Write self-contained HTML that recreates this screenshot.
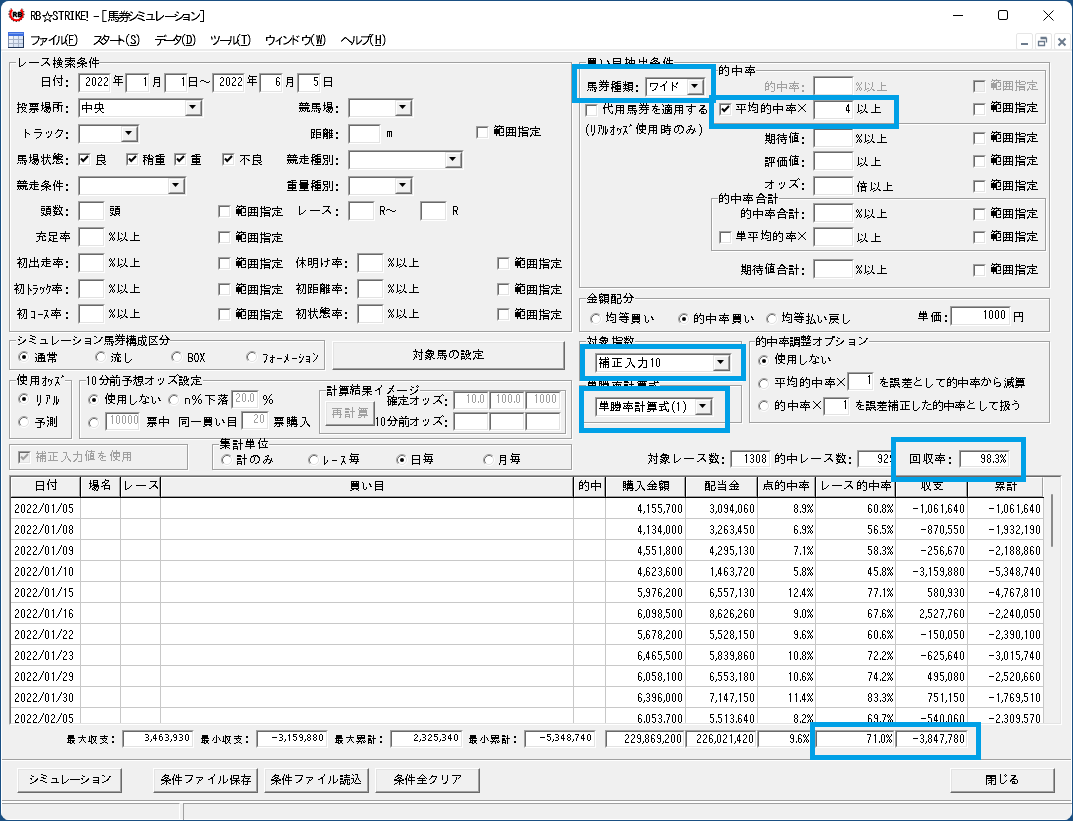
<!DOCTYPE html><html lang="ja"><head><meta charset="utf-8"><style>
html,body{margin:0;padding:0}
body{width:1073px;height:821px;position:relative;overflow:hidden;background:#1a4f82;font-family:"Liberation Sans",sans-serif;font-size:12px;color:#000}
.a{position:absolute;box-sizing:content-box}
.g{position:absolute;overflow:visible;shape-rendering:crispEdges}
.t{position:absolute;white-space:nowrap;line-height:12px;font-size:13px;letter-spacing:-1px;-webkit-text-stroke:0.12px #000}
.u{position:absolute;white-space:nowrap;line-height:14px;font-size:13px}
.x{font-style:normal;font-size:18px;-webkit-text-stroke:0;margin-left:1px}
.c{font-weight:bold;margin-left:2px;-webkit-text-stroke:0}
.h{position:absolute;white-space:nowrap;line-height:12px;font-size:12px;color:transparent}
.n{position:absolute;white-space:nowrap;line-height:12px;text-align:right}
.n span{display:inline-block;transform-origin:100% 50%}
.sk{position:absolute;border-style:solid;border-width:1px;border-color:#a0a0a0 #fff #fff #a0a0a0}
.ski{border-style:solid;border-width:1px;border-color:#696969 #e3e3e3 #e3e3e3 #696969}
.rb{border-style:solid;border-width:1px;border-color:#e3e3e3 #696969 #696969 #e3e3e3;background:#f0f0f0}
.rbi{border-style:solid;border-width:1px;border-color:#fff #a0a0a0 #a0a0a0 #fff}
.bt{border-style:solid;border-width:1px;border-color:#fff #696969 #696969 #fff;background:#f0f0f0;box-shadow:inset -1px -1px 0 #a0a0a0,inset 1px 1px 0 #e3e3e3}
</style></head><body>

<svg width="0" height="0" style="position:absolute"><defs><g id="g0"><path d="M3 3h1v1h-1zM2 7h1v1h-1zM4 8h1v1h-1zM3 9h1v1h-1z" fill-opacity="0.35"/><path d="M3 1h1v1h-1zM3 2h2v1h-2zM3 4h2v1h-2zM3 5h1v1h-1zM2 6h2v1h-2z" fill-opacity="0.65"/><path d="M0 1h3v1h-3zM4 3h1v1h-1zM0 2h1v3h-1zM0 5h3v1h-3zM3 7h1v2h-1zM0 6h1v4h-1zM4 9h1v1h-1z"/></g><g id="g1"><path d="M4 2h1v1h-1zM4 4h1v1h-1zM3 7h1v1h-1z" fill-opacity="0.35"/><path d="M3 1h1v1h-1zM3 3h2v1h-2zM3 5h1v1h-1zM3 6h2v1h-2zM3 8h2v1h-2z" fill-opacity="0.65"/><path d="M0 1h3v1h-3zM3 2h1v1h-1zM0 2h1v3h-1zM3 4h1v1h-1zM0 5h3v1h-3zM4 7h1v1h-1zM0 6h1v3h-1zM0 9h4v1h-4z"/></g><g id="g2"><path d="M2 7h1v1h-1zM8 7h1v1h-1zM2 9h2v1h-2zM7 9h2v1h-2zM4 10h1v1h-1zM6 10h1v1h-1zM3 11h1v1h-1zM7 11h1v1h-1z" fill-opacity="0.35"/><path d="M5 1h1v1h-1zM4 3h3v1h-3zM0 5h1v1h-1zM4 5h1v1h-1zM6 5h1v1h-1zM10 5h1v1h-1zM1 6h2v1h-2zM8 6h2v1h-2zM3 7h1v2h-1zM7 7h1v2h-1zM4 9h1v1h-1zM6 9h1v1h-1zM2 10h1v1h-1zM8 10h1v1h-1z" fill-opacity="0.65"/><path d="M5 2h1v1h-1zM4 4h1v1h-1zM6 4h1v1h-1zM1 5h3v1h-3zM7 5h3v1h-3zM5 9h1v1h-1zM3 10h1v1h-1zM7 10h1v1h-1zM2 11h1v1h-1zM8 11h1v1h-1z"/></g><g id="g3"><path d="M1 1h1v1h-1zM2 2h1v1h-1zM5 2h1v1h-1zM2 5h1v1h-1zM4 5h1v1h-1zM5 6h1v1h-1zM4 7h1v1h-1zM0 8h1v1h-1zM5 9h1v1h-1z" fill-opacity="0.35"/><path d="M4 1h1v1h-1zM4 3h2v1h-2zM1 4h2v1h-2zM4 8h1v1h-1zM1 9h1v1h-1z" fill-opacity="0.65"/><path d="M2 1h2v1h-2zM4 2h1v1h-1zM1 2h1v2h-1zM3 5h1v1h-1zM4 6h1v1h-1zM1 8h1v1h-1zM5 7h1v2h-1zM2 9h3v1h-3z"/></g><g id="g4"><path d="M2 2h1v8h-1z" fill-opacity="0.35"/><path d="M0 1h1v1h-1z" fill-opacity="0.65"/><path d="M1 1h5v1h-5zM3 2h1v8h-1z"/></g><g id="g5"><path d="M1 2h1v7h-1z" fill-opacity="0.35"/><path d="M0 1h1v1h-1zM0 9h1v1h-1z" fill-opacity="0.65"/><path d="M1 1h3v1h-3zM2 2h1v7h-1zM1 9h3v1h-3z"/></g><g id="g6"><path d="M5 1h1v1h-1zM4 3h1v1h-1zM3 7h1v1h-1zM5 8h1v1h-1zM0 1h1v9h-1zM4 9h1v1h-1z" fill-opacity="0.35"/><path d="M3 2h1v1h-1zM2 4h2v1h-2zM3 6h2v1h-2z" fill-opacity="0.65"/><path d="M4 1h1v2h-1zM3 3h1v1h-1zM1 1h1v4h-1zM1 5h3v1h-3zM4 7h1v2h-1zM1 6h1v4h-1zM5 9h1v1h-1z"/></g><g id="g7"><path d="M4 1h1v1h-1z" fill-opacity="0.65"/><path d="M0 1h4v1h-4zM0 2h1v3h-1zM0 5h4v1h-4zM0 6h1v3h-1zM0 9h5v1h-5z"/></g><g id="g8"><path d="M0 3h1v5h-1z" fill-opacity="0.35"/><path d="M0 1h1v2h-1zM0 10h1v1h-1z" fill-opacity="0.65"/><path d="M1 1h1v7h-1zM1 10h1v1h-1z"/></g><path id="g9" d=""/><g id="g10"><path d="M0 6h1v1h-1z" fill-opacity="0.35"/><path d="M1 6h5v1h-5z"/></g><g id="g11"><path d="M1 1h1v10h-1z" fill-opacity="0.35"/><path d="M4 0h1v1h-1zM0 0h1v12h-1zM4 11h1v1h-1z" fill-opacity="0.65"/><path d="M1 0h3v1h-3zM1 11h3v1h-3z"/></g><g id="g12"><path d="M10 1h1v1h-1zM6 2h1v1h-1zM6 4h1v1h-1zM6 6h1v1h-1zM1 8h1v1h-1zM5 8h1v1h-1zM0 9h1v1h-1zM6 9h2v1h-2zM9 9h1v1h-1zM1 10h1v1h-1zM4 10h3v1h-3zM0 11h1v1h-1zM10 11h1v1h-1z" fill-opacity="0.35"/><path d="M7 8h1v1h-1zM10 9h1v1h-1zM9 10h2v1h-2z" fill-opacity="0.65"/><path d="M1 1h9v1h-9zM1 2h1v1h-1zM5 2h1v1h-1zM1 3h9v1h-9zM1 4h1v1h-1zM5 4h1v1h-1zM1 5h9v1h-9zM1 6h1v1h-1zM5 6h1v1h-1zM1 7h10v1h-10zM10 8h1v1h-1zM1 9h1v1h-1zM5 9h1v1h-1zM8 9h1v1h-1zM0 10h1v1h-1zM3 9h1v2h-1zM7 11h3v1h-3z"/></g><g id="g13"><path d="M6 0h1v1h-1zM5 1h1v1h-1zM8 1h1v1h-1zM4 2h1v1h-1zM6 2h1v1h-1zM4 4h1v1h-1zM8 4h1v1h-1zM0 5h1v1h-1zM12 5h1v1h-1zM4 6h1v1h-1zM8 6h1v1h-1zM10 6h1v1h-1zM1 7h1v1h-1zM2 8h1v1h-1zM11 8h1v1h-1zM4 9h1v1h-1zM8 8h1v2h-1zM9 10h1v1h-1zM1 11h1v1h-1z" fill-opacity="0.35"/><path d="M6 1h1v1h-1zM9 1h1v1h-1zM3 2h1v1h-1zM5 2h1v1h-1zM1 3h1v1h-1zM11 3h1v1h-1zM5 4h1v1h-1zM7 4h1v1h-1zM3 6h1v1h-1zM9 6h1v1h-1zM10 7h2v1h-2zM9 8h1v2h-1zM8 10h1v1h-1zM3 10h1v2h-1zM6 11h1v1h-1z" fill-opacity="0.65"/><path d="M3 1h1v1h-1zM8 2h1v1h-1zM2 3h9v1h-9zM1 5h11v1h-11zM2 7h8v1h-8zM1 8h1v1h-1zM5 8h1v2h-1zM4 10h1v1h-1zM2 11h1v1h-1zM7 11h2v1h-2z"/></g><g id="g14"><path d="M2 1h2v1h-2zM2 2h1v1h-1zM0 4h1v1h-1zM2 4h1v1h-1zM10 4h1v1h-1zM1 5h1v1h-1zM7 6h1v1h-1zM8 7h1v1h-1zM4 8h1v1h-1zM7 8h1v1h-1zM2 9h1v1h-1z" fill-opacity="0.35"/><path d="M4 2h1v2h-1zM3 5h1v1h-1zM8 5h1v1h-1zM6 7h1v1h-1zM5 9h1v1h-1zM1 10h1v1h-1zM3 10h1v1h-1z" fill-opacity="0.65"/><path d="M3 2h1v1h-1zM1 4h1v1h-1zM2 5h1v1h-1zM9 4h1v2h-1zM8 6h1v1h-1zM7 7h1v1h-1zM5 8h2v1h-2zM3 9h2v1h-2zM2 10h1v1h-1z"/></g><g id="g15"><path d="M3 1h1v1h-1zM1 1h1v2h-1zM6 2h1v1h-1zM2 4h1v1h-1zM1 5h1v1h-1zM5 5h1v1h-1zM4 6h1v1h-1zM1 7h1v1h-1zM0 8h1v1h-1zM4 8h1v1h-1zM2 9h1v1h-1zM6 9h1v1h-1z" fill-opacity="0.35"/><path d="M2 1h1v2h-1zM5 2h1v2h-1zM7 3h1v1h-1zM2 5h1v1h-1zM3 8h1v2h-1zM5 10h1v1h-1z" fill-opacity="0.65"/><path d="M3 2h2v1h-2zM6 3h1v1h-1zM3 5h2v1h-2zM5 6h2v1h-2zM1 8h2v1h-2zM4 9h2v1h-2zM6 10h2v1h-2z"/></g><g id="g16"><path d="M5 5h1v1h-1zM6 8h1v1h-1z" fill-opacity="0.35"/><path d="M1 4h1v1h-1zM6 5h1v1h-1zM5 6h2v2h-2zM5 8h1v1h-1z" fill-opacity="0.65"/><path d="M2 4h5v1h-5zM0 9h9v1h-9z"/></g><g id="g17"><path d="M4 7h1v1h-1zM1 1h1v8h-1zM5 8h1v1h-1zM4 9h1v1h-1zM2 10h1v1h-1z" fill-opacity="0.35"/><path d="M7 6h1v1h-1zM6 7h1v1h-1zM3 8h1v1h-1zM1 9h1v1h-1zM0 10h1v1h-1z" fill-opacity="0.65"/><path d="M7 5h1v1h-1zM6 6h1v1h-1zM5 7h1v1h-1zM4 8h1v1h-1zM0 1h1v9h-1zM2 9h2v1h-2zM1 10h1v1h-1z"/></g><g id="g18"><path d="M0 6h11v1h-11z"/></g><g id="g19"><path d="M0 7h1v1h-1z" fill-opacity="0.35"/><path d="M0 4h1v1h-1zM6 4h1v1h-1zM5 5h2v2h-2zM6 7h1v1h-1zM5 8h2v1h-2zM6 9h1v1h-1zM5 10h2v1h-2z" fill-opacity="0.65"/><path d="M1 4h5v1h-5zM1 7h5v1h-5zM0 9h6v1h-6z"/></g><g id="g20"><path d="M2 2h1v1h-1zM3 3h1v1h-1zM8 3h1v1h-1zM2 4h2v1h-2zM3 8h1v1h-1zM4 9h1v1h-1zM0 9h1v2h-1zM2 10h1v1h-1z" fill-opacity="0.35"/><path d="M0 2h1v1h-1zM1 3h1v1h-1zM8 5h1v1h-1zM6 6h1v1h-1zM5 7h1v1h-1zM1 9h1v2h-1z" fill-opacity="0.65"/><path d="M1 2h1v1h-1zM2 3h1v1h-1zM8 4h1v1h-1zM7 5h1v2h-1zM6 7h1v1h-1zM4 8h2v1h-2zM2 9h2v1h-2z"/></g><g id="g21"><path d="M0 0h4v1h-4zM3 1h1v10h-1zM0 11h4v1h-4z"/></g><g id="g22"><path d="M8 2h1v1h-1zM0 3h7v1h-7zM8 4h1v1h-1zM5 7h1v1h-1zM4 8h1v1h-1zM6 8h1v1h-1zM2 9h1v1h-1zM5 9h1v1h-1z" fill-opacity="0.35"/><path d="M0 2h7v1h-7zM7 3h2v1h-2zM6 6h2v1h-2zM1 10h1v1h-1zM3 9h1v2h-1z" fill-opacity="0.65"/><path d="M7 2h1v1h-1zM7 4h1v2h-1zM6 7h1v1h-1zM5 8h1v1h-1zM4 9h1v1h-1zM2 10h1v1h-1z"/></g><g id="g23"><path d="M0 4h1v1h-1zM8 4h1v1h-1zM1 5h4v1h-4zM6 5h1v1h-1zM3 6h1v1h-1zM7 6h1v1h-1zM4 8h2v1h-2zM1 10h1v1h-1zM2 11h1v1h-1z" fill-opacity="0.35"/><path d="M1 4h2v1h-2zM4 6h1v1h-1zM3 7h2v1h-2zM6 7h1v1h-1zM3 8h1v1h-1zM3 10h1v1h-1zM1 11h1v1h-1z" fill-opacity="0.65"/><path d="M3 4h5v1h-5zM7 5h1v1h-1zM6 6h1v1h-1zM5 7h1v1h-1zM3 9h1v1h-1zM2 10h1v1h-1z"/></g><g id="g24"><path d="M3 4h1v1h-1zM1 5h1v1h-1zM4 5h1v1h-1zM0 6h1v1h-1zM6 4h1v7h-1z" fill-opacity="0.35"/><path d="M8 1h1v1h-1zM7 2h1v1h-1zM6 3h1v1h-1zM2 5h1v2h-1z" fill-opacity="0.65"/><path d="M7 1h1v1h-1zM6 2h1v1h-1zM5 3h1v1h-1zM4 4h2v1h-2zM3 5h1v1h-1zM1 6h1v1h-1zM5 5h1v6h-1z"/></g><g id="g25"><path d="M10 5h1v1h-1zM3 4h1v3h-1zM9 6h1v1h-1zM6 2h1v6h-1zM8 7h1v1h-1zM10 7h1v1h-1zM6 8h2v1h-2zM9 8h1v1h-1zM0 9h1v1h-1zM8 9h1v1h-1zM1 10h1v1h-1zM5 10h1v1h-1z" fill-opacity="0.35"/><path d="M2 2h2v2h-2zM2 4h1v2h-1zM1 8h2v1h-2zM5 2h1v8h-1zM6 10h1v1h-1z" fill-opacity="0.65"/><path d="M10 6h1v1h-1zM2 6h1v2h-1zM9 7h1v1h-1zM8 8h1v1h-1zM1 9h1v1h-1zM6 9h2v1h-2zM0 10h1v1h-1z"/></g><g id="g26"><path d="M3 0h1v1h-1zM2 1h1v1h-1zM0 2h1v1h-1zM1 3h1v1h-1zM1 8h1v1h-1zM0 9h1v1h-1zM2 10h1v1h-1zM3 11h1v1h-1z" fill-opacity="0.35"/><path d="M1 1h1v1h-1zM0 3h1v1h-1zM0 8h1v1h-1zM1 10h1v1h-1z" fill-opacity="0.65"/><path d="M2 0h1v1h-1zM1 2h1v1h-1zM0 4h1v4h-1zM1 9h1v1h-1zM2 11h1v1h-1z"/></g><g id="g27"><path d="M4 1h1v1h-1z" fill-opacity="0.65"/><path d="M0 1h4v1h-4zM0 2h1v3h-1zM0 5h4v1h-4zM0 6h1v4h-1z"/></g><g id="g28"><path d="M1 0h1v1h-1zM2 1h1v1h-1zM1 2h1v1h-1zM3 4h1v4h-1zM1 9h1v1h-1zM2 10h1v1h-1zM1 11h1v1h-1z" fill-opacity="0.35"/><path d="M0 0h1v1h-1zM2 4h1v4h-1zM0 11h1v1h-1z" fill-opacity="0.65"/><path d="M1 1h1v1h-1zM2 2h1v2h-1zM2 8h1v2h-1zM1 10h1v1h-1z"/></g><g id="g29"><path d="M8 2h1v2h-1zM0 10h1v1h-1zM2 10h1v1h-1zM10 10h1v1h-1z" fill-opacity="0.35"/><path d="M1 2h1v1h-1zM6 4h1v1h-1zM6 6h1v1h-1zM4 7h1v1h-1zM7 7h1v1h-1zM1 9h1v1h-1zM3 9h1v1h-1zM9 10h1v1h-1z" fill-opacity="0.65"/><path d="M2 2h6v1h-6zM7 3h1v2h-1zM6 5h1v1h-1zM5 6h1v1h-1zM5 7h2v1h-2zM3 8h2v1h-2zM7 8h2v1h-2zM2 9h1v1h-1zM8 9h2v1h-2zM1 10h1v1h-1z"/></g><g id="g30"><path d="M3 0h1v1h-1zM4 1h1v1h-1zM2 2h1v1h-1zM3 3h1v1h-1zM8 2h1v2h-1zM6 7h1v1h-1zM2 9h1v1h-1zM3 10h1v1h-1z" fill-opacity="0.35"/><path d="M1 4h1v1h-1zM3 4h1v1h-1zM4 5h1v1h-1zM6 5h2v1h-2zM0 5h1v2h-1zM5 6h1v1h-1zM5 8h1v1h-1zM4 9h1v1h-1zM1 10h1v1h-1z" fill-opacity="0.65"/><path d="M3 1h1v1h-1zM3 2h5v1h-5zM2 3h1v2h-1zM7 3h1v2h-1zM1 5h1v1h-1zM3 5h1v1h-1zM4 6h1v1h-1zM6 6h1v1h-1zM5 7h1v1h-1zM4 8h1v1h-1zM3 9h1v1h-1zM2 10h1v1h-1z"/></g><g id="g31"><path d="M2 4h1v1h-1zM4 5h1v1h-1zM6 7h1v1h-1zM0 1h1v10h-1z" fill-opacity="0.35"/><path d="M1 1h1v3h-1zM3 5h1v2h-1zM5 6h1v1h-1zM1 6h1v5h-1z" fill-opacity="0.65"/><path d="M1 4h1v1h-1zM1 5h2v1h-2zM4 6h1v1h-1zM5 7h1v1h-1z"/></g><g id="g32"><path d="M10 0h1v1h-1zM11 1h1v1h-1zM10 2h2v1h-2zM6 6h1v1h-1zM4 8h1v1h-1zM5 9h1v1h-1zM2 10h1v1h-1zM3 11h1v1h-1z" fill-opacity="0.35"/><path d="M9 1h2v1h-2zM8 2h1v1h-1zM10 5h1v1h-1zM4 10h1v1h-1zM2 11h1v1h-1z" fill-opacity="0.65"/><path d="M2 2h6v1h-6zM9 2h1v1h-1zM0 5h10v1h-10zM5 6h1v3h-1zM4 9h1v1h-1zM3 10h1v1h-1z"/></g><g id="g33"><path d="M3 2h1v1h-1zM5 2h1v1h-1zM4 4h1v3h-1zM3 8h1v1h-1zM5 8h1v1h-1zM4 9h1v1h-1z" fill-opacity="0.35"/><path d="M0 1h1v1h-1zM4 1h1v1h-1zM4 3h2v1h-2zM4 7h2v1h-2zM0 9h1v1h-1z" fill-opacity="0.65"/><path d="M1 1h3v1h-3zM4 2h1v1h-1zM5 4h1v3h-1zM1 2h1v7h-1zM4 8h1v1h-1zM1 9h3v1h-3z"/></g><g id="g34"><path d="M3 1h1v1h-1zM4 2h1v1h-1zM7 2h1v1h-1zM1 3h1v1h-1zM3 4h1v1h-1zM8 4h1v1h-1zM0 5h2v1h-2zM5 7h1v1h-1zM7 7h1v1h-1zM4 8h1v1h-1zM6 8h1v1h-1zM4 10h1v1h-1z" fill-opacity="0.35"/><path d="M0 2h1v1h-1zM3 3h2v1h-2zM7 3h2v1h-2zM0 4h2v1h-2zM4 4h1v1h-1zM6 6h2v1h-2zM3 9h1v1h-1zM5 9h1v1h-1z" fill-opacity="0.65"/><path d="M3 2h1v1h-1zM8 2h1v1h-1zM0 3h1v1h-1zM7 4h1v2h-1zM6 7h1v1h-1zM5 8h1v1h-1zM4 9h1v1h-1zM2 10h2v1h-2z"/></g><g id="g35"><path d="M3 1h1v2h-1zM1 4h1v3h-1zM8 6h1v1h-1zM6 7h1v1h-1zM7 8h1v1h-1zM4 9h1v1h-1zM2 10h1v1h-1zM5 10h1v1h-1zM3 11h1v1h-1z" fill-opacity="0.35"/><path d="M8 3h1v1h-1zM7 4h2v2h-2zM6 9h1v1h-1z" fill-opacity="0.65"/><path d="M4 1h1v2h-1zM0 3h8v1h-8zM0 4h1v3h-1zM7 6h1v2h-1zM6 8h1v1h-1zM5 9h1v1h-1zM3 10h2v1h-2z"/></g><g id="g36"><path d="M6 2h1v1h-1zM5 3h1v1h-1zM1 6h1v1h-1zM0 7h1v1h-1zM2 7h1v1h-1zM5 5h1v6h-1z" fill-opacity="0.35"/><path d="M4 4h1v1h-1zM3 5h1v2h-1zM1 7h1v1h-1z" fill-opacity="0.65"/><path d="M6 3h1v1h-1zM5 4h1v1h-1zM2 6h1v1h-1zM4 5h1v6h-1z"/></g><g id="g37"><path d="M6 1h1v1h-1zM7 2h1v1h-1zM2 4h1v1h-1zM4 5h1v1h-1zM6 7h1v1h-1zM0 1h1v10h-1z" fill-opacity="0.35"/><path d="M4 2h3v1h-3zM1 1h1v3h-1zM3 5h1v2h-1zM5 6h1v1h-1zM1 6h1v5h-1z" fill-opacity="0.65"/><path d="M5 3h1v1h-1zM1 4h1v1h-1zM1 5h2v1h-2zM4 6h1v1h-1zM5 7h1v1h-1z"/></g><g id="g38"><path d="M1 1h2v1h-2zM4 4h1v1h-1zM0 3h1v3h-1zM3 5h1v3h-1zM2 9h1v1h-1zM5 8h1v2h-1z" fill-opacity="0.35"/><path d="M0 1h1v1h-1zM0 2h3v1h-3zM1 3h2v1h-2zM1 4h3v1h-3zM1 5h1v1h-1zM4 5h2v1h-2zM5 6h1v2h-1zM2 7h1v2h-1z" fill-opacity="0.65"/><path d="M3 1h1v3h-1zM5 1h1v4h-1zM2 5h1v1h-1zM1 6h2v1h-2zM1 7h1v3h-1zM4 6h1v4h-1z"/></g><g id="g39"><path d="M5 3h1v1h-1zM4 4h1v1h-1zM6 4h1v1h-1zM10 7h1v1h-1z" fill-opacity="0.35"/><path d="M3 3h1v1h-1zM2 4h1v1h-1zM1 5h1v1h-1zM7 5h1v1h-1zM8 6h1v1h-1zM0 6h1v2h-1zM9 8h1v1h-1z" fill-opacity="0.65"/><path d="M4 3h1v1h-1zM3 4h1v1h-1zM5 4h1v1h-1zM2 5h1v1h-1zM6 5h1v1h-1zM1 6h1v1h-1zM7 6h1v1h-1zM8 7h2v1h-2zM10 8h1v1h-1z"/></g><g id="g40"><path d="M10 0h1v1h-1zM10 2h1v1h-1zM0 3h7v1h-7zM8 3h1v1h-1zM6 5h1v1h-1zM7 6h1v1h-1zM2 9h1v1h-1z" fill-opacity="0.35"/><path d="M8 0h1v2h-1zM10 1h1v1h-1zM0 2h7v1h-7zM5 7h1v1h-1zM4 8h1v1h-1zM1 10h1v1h-1zM3 10h1v1h-1z" fill-opacity="0.65"/><path d="M9 0h1v1h-1zM7 2h3v1h-3zM7 3h1v3h-1zM6 6h1v2h-1zM5 8h1v1h-1zM3 9h2v1h-2zM2 10h1v1h-1z"/></g><g id="g41"><path d="M4 1h1v4h-1zM0 1h1v9h-1zM4 6h1v4h-1z" fill-opacity="0.35"/><path d="M1 1h1v4h-1zM5 1h1v4h-1zM1 5h5v1h-5zM1 6h1v4h-1zM5 6h1v4h-1z"/></g><path id="g42" d="M9 6h1v1h-1zM8 7h1v1h-1zM7 8h1v1h-1zM3 2h1v8h-1zM5 9h2v1h-2zM3 10h2v1h-2z"/><path id="g43" d="M1 6h10v1h-10z"/><path id="g44" d="M2 2h7v1h-7zM7 3h1v2h-1zM6 5h1v1h-1zM5 6h3v1h-3zM4 7h2v1h-2zM7 7h2v1h-2zM3 8h1v1h-1zM8 8h2v1h-2zM1 9h2v1h-2zM9 9h1v1h-1z"/><path id="g45" d="M7 1h1v1h-1zM2 1h1v3h-1zM6 2h1v2h-1zM8 2h1v2h-1zM1 4h3v1h-3zM5 4h5v1h-5zM4 5h1v1h-1zM7 5h1v1h-1zM10 5h1v1h-1zM2 5h1v2h-1zM5 6h5v1h-5zM1 7h3v1h-3zM5 7h1v1h-1zM7 7h1v1h-1zM9 7h1v1h-1zM1 8h2v1h-2zM5 8h5v1h-5zM7 9h1v1h-1zM6 10h1v1h-1zM8 10h2v1h-2zM2 9h1v3h-1zM4 11h2v1h-2zM10 11h1v1h-1z"/><path id="g46" d="M6 1h1v1h-1zM1 2h10v1h-10zM6 3h1v1h-1zM1 4h10v1h-10zM1 5h1v1h-1zM5 5h2v1h-2zM8 5h1v1h-1zM10 5h1v1h-1zM3 6h2v1h-2zM7 6h1v1h-1zM5 7h2v1h-2zM9 7h1v1h-1zM1 8h8v1h-8zM10 8h1v1h-1zM4 9h1v1h-1zM8 9h1v1h-1zM2 10h2v1h-2zM9 10h2v1h-2zM1 11h1v1h-1zM6 9h1v3h-1zM10 11h1v1h-1z"/><path id="g47" d="M5 1h1v1h-1zM4 2h5v1h-5zM3 3h2v1h-2zM8 3h1v1h-1zM2 4h1v1h-1zM5 4h3v1h-3zM4 5h2v1h-2zM7 5h2v1h-2zM1 6h3v1h-3zM6 6h1v1h-1zM9 6h2v1h-2zM1 7h10v1h-10zM5 8h3v1h-3zM4 9h1v1h-1zM8 9h1v1h-1zM2 10h2v1h-2zM9 10h2v1h-2zM1 11h1v1h-1zM6 9h1v3h-1z"/><path id="g48" d="M3 1h1v2h-1zM5 2h1v2h-1zM7 1h1v3h-1zM2 3h1v2h-1zM5 4h6v1h-6zM1 5h2v2h-2zM4 5h1v2h-1zM7 5h1v2h-1zM4 7h7v1h-7zM2 7h1v5h-1zM7 8h1v4h-1z"/><path id="g49" d="M2 2h8v1h-8zM2 3h1v3h-1zM9 3h1v3h-1zM2 6h8v1h-8zM2 7h1v3h-1zM9 7h1v3h-1zM2 10h8v1h-8zM2 11h1v1h-1zM9 11h1v1h-1z"/><path id="g50" d="M3 0h1v2h-1zM9 0h1v3h-1zM2 2h1v2h-1zM4 3h7v1h-7zM1 4h2v2h-2zM5 5h1v1h-1zM6 6h1v1h-1zM6 7h2v1h-2zM9 4h1v6h-1zM2 6h1v5h-1zM7 10h3v1h-3z"/><path id="g51" d="M2 5h2v2h-2zM2 10h2v2h-2z"/><path id="g52" d="M1 2h2v1h-2zM0 3h1v1h-1zM3 3h1v3h-1zM2 6h1v1h-1zM1 7h1v1h-1zM0 8h1v2h-1zM0 10h4v1h-4z"/><path id="g53" d="M1 2h2v1h-2zM0 3h1v7h-1zM3 3h1v7h-1zM1 10h2v1h-2z"/><path id="g54" d="M3 0h1v1h-1zM3 1h8v1h-8zM2 2h1v2h-1zM6 2h1v2h-1zM3 4h7v1h-7zM3 5h1v2h-1zM6 5h1v2h-1zM1 7h10v1h-10zM6 8h1v3h-1z"/><path id="g55" d="M2 2h1v1h-1zM1 3h2v1h-2zM2 4h1v7h-1z"/><path id="g56" d="M3 2h6v1h-6zM3 3h1v1h-1zM8 3h1v1h-1zM3 4h6v1h-6zM3 5h1v2h-1zM8 5h1v2h-1zM3 7h6v1h-6zM3 8h1v2h-1zM8 8h1v3h-1zM2 10h1v2h-1zM6 11h3v1h-3z"/><path id="g57" d="M2 5h3v1h-3zM1 6h1v1h-1zM5 6h2v1h-2zM10 6h1v1h-1zM7 7h3v1h-3z"/><path id="g58" d="M1 2h2v1h-2zM3 3h1v1h-1zM0 3h1v3h-1zM0 6h3v1h-3zM0 7h1v3h-1zM3 7h1v3h-1zM1 10h2v1h-2z"/><path id="g59" d="M0 2h4v1h-4zM0 3h1v2h-1zM0 5h3v1h-3zM0 9h1v1h-1zM3 6h1v4h-1zM1 10h2v1h-2z"/><path id="g60" d="M2 1h1v2h-1zM6 2h3v1h-3zM1 3h4v1h-4zM8 3h1v1h-1zM10 3h1v1h-1zM6 3h1v2h-1zM8 4h3v1h-3zM2 4h1v2h-1zM5 5h1v1h-1zM2 6h8v1h-8zM1 7h2v1h-2zM9 7h1v1h-1zM6 7h1v2h-1zM8 8h1v1h-1zM7 9h1v1h-1zM2 8h1v3h-1zM6 10h1v1h-1zM8 10h2v1h-2zM1 11h2v1h-2zM5 11h1v1h-1zM10 11h1v1h-1z"/><path id="g61" d="M1 2h10v1h-10zM2 3h8v1h-8zM2 4h1v1h-1zM4 4h1v1h-1zM7 4h1v1h-1zM9 4h1v1h-1zM2 5h8v1h-8zM2 7h8v1h-8zM1 8h10v1h-10zM3 9h1v1h-1zM8 9h1v1h-1zM2 10h1v1h-1zM6 9h1v2h-1zM9 10h1v1h-1zM1 11h1v1h-1zM4 11h3v1h-3z"/><path id="g62" d="M5 1h5v1h-5zM5 2h1v1h-1zM9 2h1v1h-1zM2 1h1v3h-1zM5 3h5v1h-5zM1 4h3v1h-3zM5 4h1v1h-1zM9 4h1v1h-1zM5 5h5v1h-5zM2 5h1v2h-1zM4 6h7v1h-7zM2 7h2v1h-2zM6 7h5v1h-5zM2 8h1v1h-1zM5 8h2v1h-2zM8 8h1v1h-1zM1 9h1v1h-1zM4 9h1v1h-1zM6 9h2v1h-2zM10 8h1v2h-1zM4 10h2v1h-2zM7 10h1v1h-1zM9 10h1v1h-1zM6 11h1v1h-1zM8 11h2v1h-2z"/><path id="g63" d="M1 1h9v1h-9zM6 2h1v1h-1zM1 3h6v1h-6zM5 4h6v1h-6zM1 4h1v2h-1zM5 5h2v1h-2zM1 6h6v1h-6zM5 7h2v1h-2zM6 8h1v2h-1zM1 7h1v4h-1zM5 10h1v1h-1zM9 5h1v6h-1z"/><path id="g64" d="M5 1h1v3h-1zM1 4h10v1h-10zM1 5h1v2h-1zM5 5h1v2h-1zM10 5h1v2h-1zM1 7h10v1h-10zM1 8h1v1h-1zM10 8h1v1h-1zM5 8h1v4h-1z"/><path id="g65" d="M6 1h1v2h-1zM2 3h8v1h-8zM2 4h1v3h-1zM6 4h1v3h-1zM9 4h1v3h-1zM1 7h10v1h-10zM6 8h2v1h-2zM5 9h1v1h-1zM7 9h1v1h-1zM4 10h1v1h-1zM8 10h1v1h-1zM2 11h2v1h-2zM9 11h2v1h-2z"/><path id="g66" d="M3 1h1v1h-1zM8 1h1v1h-1zM1 2h10v1h-10zM2 3h1v1h-1zM4 3h1v1h-1zM7 3h1v1h-1zM9 3h1v1h-1zM1 4h11v1h-11zM1 6h10v2h-10zM4 8h1v1h-1zM2 8h1v2h-1zM4 9h2v1h-2zM7 8h1v2h-1zM9 8h1v2h-1zM11 9h1v1h-1zM1 10h1v1h-1zM3 10h1v1h-1zM6 10h1v1h-1zM9 10h3v1h-3z"/><path id="g67" d="M2 2h8v2h-8zM2 4h1v1h-1zM6 4h1v1h-1zM2 5h8v1h-8zM2 6h1v1h-1zM6 6h1v1h-1zM2 7h9v1h-9zM8 8h1v1h-1zM10 8h1v1h-1zM2 9h1v1h-1zM8 9h2v1h-2zM1 10h1v1h-1zM4 9h1v2h-1zM6 9h1v2h-1zM9 10h1v1h-1zM8 11h2v1h-2z"/><path id="g68" d="M4 2h1v3h-1zM4 5h2v1h-2zM6 6h2v1h-2zM8 7h1v1h-1zM4 6h1v5h-1z"/><path id="g69" d="M3 2h6v1h-6zM2 5h8v1h-8zM9 6h1v1h-1zM8 7h1v2h-1zM7 9h1v1h-1zM5 10h2v1h-2zM4 11h1v1h-1z"/><path id="g70" d="M5 4h1v2h-1zM3 5h1v2h-1zM8 4h1v3h-1zM7 7h1v2h-1zM5 9h2v1h-2zM4 10h2v1h-2z"/><path id="g71" d="M5 2h1v1h-1zM4 3h6v1h-6zM4 4h1v1h-1zM9 4h1v1h-1zM3 5h1v1h-1zM2 6h1v1h-1zM8 5h1v2h-1zM7 7h1v1h-1zM6 8h2v1h-2zM5 9h2v1h-2zM3 10h2v1h-2z"/><path id="g72" d="M1 2h4v1h-4zM6 2h5v1h-5zM1 3h1v2h-1zM4 3h1v2h-1zM6 3h1v2h-1zM1 5h4v1h-4zM6 5h5v1h-5zM3 6h1v1h-1zM6 6h1v1h-1zM10 6h1v1h-1zM3 7h2v1h-2zM6 7h5v1h-5zM10 8h1v1h-1zM1 6h1v4h-1zM3 8h1v2h-1zM6 8h1v2h-1zM1 10h4v1h-4zM6 10h5v1h-5zM1 11h1v1h-1zM6 11h1v1h-1z"/><path id="g73" d="M3 1h1v1h-1zM1 2h5v1h-5zM7 2h1v1h-1zM9 2h1v1h-1zM1 3h2v1h-2zM4 3h2v1h-2zM7 3h4v1h-4zM1 4h1v1h-1zM3 4h1v1h-1zM5 4h1v1h-1zM7 4h1v1h-1zM1 5h2v1h-2zM4 5h4v1h-4zM9 4h1v2h-1zM7 6h4v1h-4zM1 6h5v2h-5zM7 7h1v1h-1zM9 7h1v1h-1zM1 8h2v1h-2zM4 8h2v1h-2zM7 8h4v1h-4zM1 9h5v1h-5zM7 9h1v1h-1zM9 9h1v1h-1zM5 10h1v1h-1zM7 10h4v1h-4zM1 10h1v2h-1zM4 11h2v1h-2zM7 11h1v1h-1z"/><path id="g74" d="M1 5h5v1h-5zM1 6h1v5h-1zM3 6h1v5h-1zM5 6h1v5h-1z"/><path id="g75" d="M2 0h1v1h-1zM6 0h1v1h-1zM2 1h9v1h-9zM1 2h1v1h-1zM4 2h1v1h-1zM8 2h1v1h-1zM3 3h1v1h-1zM6 3h5v1h-5zM10 4h1v3h-1zM8 7h3v1h-3zM1 4h6v5h-6zM6 9h1v1h-1zM10 9h1v1h-1zM3 9h1v2h-1zM6 10h5v1h-5z"/><path id="g76" d="M1 2h10v1h-10zM4 3h1v1h-1zM7 3h1v1h-1zM3 4h6v1h-6zM1 3h1v4h-1zM4 5h1v2h-1zM7 5h1v2h-1zM10 3h1v4h-1zM1 7h10v1h-10zM4 8h1v1h-1zM1 8h1v2h-1zM3 9h1v1h-1zM7 8h1v2h-1zM10 8h1v2h-1zM1 10h10v1h-10zM1 11h1v1h-1zM10 11h1v1h-1z"/><path id="g77" d="M2 1h1v2h-1zM5 1h1v2h-1zM7 2h4v1h-4zM1 3h6v1h-6zM5 4h1v1h-1zM11 3h1v2h-1zM5 5h6v1h-6zM2 4h1v3h-1zM2 7h9v1h-9zM5 8h6v1h-6zM5 9h1v1h-1zM10 9h1v1h-1zM2 8h1v3h-1zM5 10h6v1h-6zM1 11h2v1h-2zM5 11h1v1h-1zM10 11h1v1h-1z"/><path id="g78" d="M6 1h1v2h-1zM1 3h10v1h-10zM1 4h1v1h-1zM10 4h1v1h-1zM3 5h6v1h-6zM6 6h1v1h-1zM6 7h4v1h-4zM3 7h1v2h-1zM2 9h1v1h-1zM4 9h1v1h-1zM6 8h1v2h-1zM1 10h2v1h-2zM5 10h7v1h-7zM1 11h1v1h-1z"/><path id="g79" d="M9 2h1v1h-1zM3 1h1v3h-1zM7 1h1v3h-1zM1 3h1v2h-1zM3 4h8v1h-8zM2 5h2v1h-2zM3 6h1v1h-1zM7 5h1v2h-1zM2 7h2v1h-2zM1 8h1v1h-1zM8 7h1v2h-1zM6 7h1v3h-1zM9 9h1v1h-1zM3 8h1v3h-1zM5 10h1v1h-1zM9 10h2v1h-2zM3 11h2v1h-2zM10 11h1v1h-1z"/><path id="g80" d="M2 0h2v1h-2zM6 0h1v1h-1zM2 1h1v1h-1zM5 1h5v1h-5zM1 2h1v1h-1zM3 2h2v1h-2zM6 2h1v1h-1zM10 2h1v1h-1zM1 3h10v1h-10zM1 4h6v1h-6zM9 4h1v1h-1zM1 5h8v1h-8zM1 6h1v1h-1zM4 6h7v1h-7zM5 7h1v1h-1zM2 8h1v1h-1zM6 8h1v1h-1zM9 8h1v1h-1zM1 9h1v1h-1zM4 8h1v2h-1zM8 9h3v1h-3zM0 10h2v1h-2zM4 10h4v1h-4zM10 10h1v1h-1z"/><path id="g81" d="M6 1h1v1h-1zM2 2h8v1h-8zM2 3h1v1h-1zM9 3h1v1h-1zM2 4h8v1h-8zM2 5h1v2h-1zM9 5h1v2h-1zM2 7h8v1h-8zM6 8h1v1h-1zM10 8h1v1h-1zM7 9h3v1h-3zM2 8h1v3h-1zM8 10h1v1h-1zM1 11h6v1h-6zM9 11h2v1h-2z"/><path id="g82" d="M7 1h1v1h-1zM1 2h4v1h-4zM9 2h1v1h-1zM2 3h1v1h-1zM6 2h2v2h-2zM10 3h1v1h-1zM1 4h5v1h-5zM7 4h1v1h-1zM11 4h1v1h-1zM2 5h1v1h-1zM5 5h6v1h-6zM2 6h2v1h-2zM6 6h5v1h-5zM4 7h1v1h-1zM6 7h1v1h-1zM10 7h1v1h-1zM1 7h2v2h-2zM6 8h5v1h-5zM10 9h1v2h-1zM2 9h1v3h-1zM6 9h1v3h-1zM8 11h3v1h-3z"/><path id="g83" d="M5 1h5v1h-5zM2 2h3v1h-3zM6 2h1v1h-1zM1 3h10v1h-10zM6 4h1v1h-1zM2 5h8v2h-8zM2 7h1v1h-1zM6 7h1v1h-1zM9 7h1v1h-1zM2 8h8v2h-8zM6 10h1v1h-1zM1 11h10v1h-10z"/><path id="g84" d="M1 2h10v1h-10zM5 3h1v2h-1zM4 5h2v1h-2zM7 5h1v1h-1zM3 6h1v1h-1zM8 6h2v1h-2zM2 7h1v1h-1zM9 7h2v1h-2zM1 8h1v1h-1zM5 6h1v6h-1z"/><path id="g85" d="M6 1h1v2h-1zM2 3h8v1h-8zM6 4h1v1h-1zM1 5h10v1h-10zM6 6h1v1h-1zM3 6h1v2h-1zM6 7h4v1h-4zM2 8h2v1h-2zM2 9h1v1h-1zM4 9h1v1h-1zM6 8h1v2h-1zM1 10h1v1h-1zM5 10h6v1h-6z"/><path id="g86" d="M2 1h3v1h-3zM7 1h4v1h-4zM5 2h3v1h-3zM2 2h1v2h-1zM4 3h7v1h-7zM1 4h4v1h-4zM7 4h1v1h-1zM2 5h1v1h-1zM2 6h2v1h-2zM5 5h6v2h-6zM1 7h5v1h-5zM7 7h1v1h-1zM10 7h1v1h-1zM1 8h2v1h-2zM5 8h6v2h-6zM7 10h1v1h-1zM2 9h1v3h-1zM4 11h7v1h-7z"/><path id="g87" d="M1 2h5v1h-5zM1 3h1v2h-1zM5 3h1v2h-1zM1 5h5v1h-5zM2 6h1v1h-1zM3 7h3v1h-3zM7 2h1v7h-1zM2 8h1v2h-1zM1 10h1v1h-1zM5 8h1v3h-1zM10 2h1v9h-1zM0 11h2v1h-2zM3 11h3v1h-3zM8 11h3v1h-3z"/><path id="g88" d="M2 1h8v1h-8zM2 2h1v1h-1zM9 2h1v1h-1zM2 3h8v2h-8zM1 5h10v1h-10zM2 6h8v4h-8zM6 10h1v1h-1zM1 11h10v1h-10z"/><path id="g89" d="M1 2h4v1h-4zM6 2h5v1h-5zM8 3h1v1h-1zM1 4h4v1h-4zM1 5h1v1h-1zM4 5h1v1h-1zM6 4h5v2h-5zM1 6h4v1h-4zM6 6h1v1h-1zM10 6h1v1h-1zM6 7h5v1h-5zM1 8h1v1h-1zM3 8h1v1h-1zM6 8h1v1h-1zM10 8h1v1h-1zM2 9h2v1h-2zM6 9h5v1h-5zM3 10h3v1h-3zM7 10h1v1h-1zM9 10h1v1h-1zM1 11h2v1h-2zM5 11h2v1h-2zM10 11h1v1h-1z"/><path id="g90" d="M5 1h1v1h-1zM1 2h1v1h-1zM3 1h1v2h-1zM7 1h1v2h-1zM1 3h5v1h-5zM7 3h4v1h-4zM2 4h3v1h-3zM6 4h1v1h-1zM1 5h1v1h-1zM3 5h1v1h-1zM5 5h2v1h-2zM2 6h1v1h-1zM7 6h1v1h-1zM9 4h1v3h-1zM1 7h5v1h-5zM7 7h2v1h-2zM2 8h1v1h-1zM4 8h1v1h-1zM8 8h1v1h-1zM2 9h3v1h-3zM7 9h3v1h-3zM3 10h5v1h-5zM9 10h2v1h-2zM1 11h2v1h-2zM10 11h1v1h-1z"/><path id="g91" d="M1 2h4v1h-4zM1 3h1v3h-1zM5 3h1v3h-1zM1 6h4v1h-4zM3 7h2v1h-2zM4 8h1v2h-1zM1 7h1v4h-1zM5 10h1v1h-1z"/><path id="g92" d="M6 1h1v2h-1zM1 3h10v1h-10zM5 4h1v1h-1zM4 5h1v1h-1zM8 5h2v1h-2zM2 6h6v1h-6zM9 6h2v1h-2zM4 7h1v3h-1zM7 7h1v3h-1zM10 9h1v1h-1zM3 10h1v1h-1zM7 10h4v1h-4zM1 11h2v1h-2z"/><path id="g93" d="M2 2h8v1h-8zM2 3h1v2h-1zM9 3h1v2h-1zM2 5h8v1h-8zM3 7h1v1h-1zM6 6h1v2h-1zM2 8h1v1h-1zM6 8h4v1h-4zM2 9h2v1h-2zM2 10h3v1h-3zM6 9h1v2h-1zM1 11h1v1h-1zM5 11h6v1h-6z"/><path id="g94" d="M6 1h1v2h-1zM1 3h10v1h-10zM5 4h1v1h-1zM2 5h1v1h-1zM4 5h6v1h-6zM2 6h2v1h-2zM5 6h1v1h-1zM7 6h1v1h-1zM9 6h1v1h-1zM1 7h1v1h-1zM4 7h1v1h-1zM6 7h1v1h-1zM10 7h1v1h-1zM1 8h10v1h-10zM6 9h1v3h-1z"/><path id="g95" d="M0 2h1v1h-1zM4 2h1v2h-1zM-1 3h1v2h-1zM1 3h1v2h-1zM3 4h1v1h-1zM0 5h1v1h-1zM2 5h1v2h-1zM1 7h1v1h-1zM3 7h1v1h-1zM0 8h1v2h-1zM2 8h1v2h-1zM4 8h1v2h-1zM-1 10h1v1h-1zM3 10h1v1h-1z"/><path id="g96" d="M5 3h1v1h-1zM6 4h1v1h-1zM9 2h1v5h-1zM2 2h1v7h-1zM4 8h2v1h-2zM8 7h1v2h-1zM2 9h2v1h-2zM7 9h1v1h-1zM9 9h2v1h-2zM1 10h1v1h-1zM5 10h2v1h-2zM10 10h2v1h-2zM4 11h1v1h-1z"/><path id="g97" d="M5 2h1v3h-1zM5 5h5v1h-5zM5 6h1v4h-1zM1 10h10v1h-10z"/><path id="g98" d="M3 1h1v2h-1zM6 2h5v1h-5zM1 3h5v1h-5zM4 4h1v1h-1zM3 5h2v1h-2zM2 6h2v1h-2zM5 6h1v1h-1zM8 3h1v4h-1zM1 7h4v1h-4zM5 8h1v1h-1zM7 7h1v3h-1zM6 10h1v1h-1zM10 3h1v8h-1zM3 8h1v4h-1zM5 11h1v1h-1zM8 11h3v1h-3z"/><path id="g99" d="M2 3h1v2h-1zM6 1h1v4h-1zM9 3h1v2h-1zM2 5h8v1h-8zM2 6h1v1h-1zM9 6h1v1h-1zM1 8h1v2h-1zM6 6h1v4h-1zM10 8h1v2h-1zM1 10h10v1h-10zM1 11h1v1h-1zM10 11h1v1h-1z"/><path id="g100" d="M3 1h1v2h-1zM7 1h1v3h-1zM2 3h1v2h-1zM4 4h7v1h-7zM7 5h1v1h-1zM1 5h2v2h-2zM6 6h3v2h-3zM5 8h1v1h-1zM9 8h1v1h-1zM4 9h1v1h-1zM10 9h1v1h-1zM2 7h1v5h-1zM7 8h1v4h-1z"/><path id="g101" d="M1 2h4v1h-4zM6 2h5v1h-5zM6 3h1v1h-1zM10 3h1v1h-1zM1 3h1v2h-1zM4 3h1v2h-1zM6 4h5v1h-5zM1 5h4v1h-4zM6 5h1v2h-1zM10 5h1v2h-1zM1 6h1v2h-1zM4 6h1v2h-1zM6 7h5v1h-5zM1 8h4v1h-4zM1 9h1v1h-1zM6 8h1v2h-1zM5 10h1v1h-1zM10 8h1v3h-1zM4 11h2v1h-2zM8 11h3v1h-3z"/><path id="g102" d="M8 2h1v2h-1zM8 4h3v1h-3zM5 5h4v1h-4zM2 2h1v5h-1zM2 7h2v2h-2zM8 6h1v3h-1zM7 9h1v1h-1zM2 9h1v2h-1zM6 10h2v1h-2z"/><path id="g103" d="M2 2h1v4h-1zM2 6h2v1h-2zM4 7h1v1h-1zM4 8h2v1h-2zM2 7h1v6h-1z"/><path id="g104" d="M1 3h4v1h-4zM1 6h5v1h-5zM5 7h1v1h-1zM4 8h1v2h-1zM3 10h1v1h-1zM2 11h2v1h-2zM1 12h1v1h-1z"/><path id="g105" d="M1 5h2v1h-2zM5 5h1v1h-1zM3 6h2v1h-2zM1 6h1v2h-1zM4 7h1v3h-1zM3 10h1v1h-1zM2 11h1v1h-1z"/><path id="g106" d="M2 2h1v2h-1zM2 4h4v1h-4zM2 5h1v1h-1zM5 5h1v1h-1zM1 6h1v2h-1zM4 6h1v4h-1zM3 10h1v1h-1zM2 11h1v1h-1z"/><path id="g107" d="M1 4h4v1h-4zM4 5h1v5h-1zM1 10h4v1h-4zM4 11h1v1h-1z"/><path id="g108" d="M1 7h5v1h-5z"/><path id="g109" d="M1 3h4v1h-4zM4 4h1v1h-1zM3 5h1v3h-1zM2 8h3v1h-3zM2 9h1v1h-1zM4 9h1v1h-1zM5 10h1v1h-1zM1 10h1v2h-1z"/><path id="g110" d="M3 2h1v1h-1zM4 3h2v1h-2zM2 5h2v1h-2zM9 5h1v1h-1zM3 6h1v1h-1zM8 6h2v1h-2zM7 7h2v1h-2zM6 8h2v1h-2zM4 9h2v1h-2zM2 10h2v1h-2z"/><path id="g111" d="M3 1h2v1h-2zM5 2h3v1h-3zM8 3h1v1h-1zM3 4h3v1h-3zM5 5h3v1h-3zM2 7h3v1h-3zM5 8h2v1h-2zM7 9h2v1h-2z"/><path id="g112" d="M3 5h5v1h-5zM7 6h1v3h-1zM2 9h8v1h-8z"/><path id="g113" d="M3 4h6v1h-6zM8 5h1v2h-1zM3 7h6v1h-6zM8 8h1v1h-1zM3 9h6v1h-6zM8 10h1v1h-1z"/><path id="g114" d="M2 2h2v1h-2zM4 3h1v1h-1zM9 3h2v1h-2zM9 4h1v1h-1zM8 5h1v1h-1zM7 6h2v1h-2zM6 7h2v1h-2zM4 8h2v1h-2zM2 9h2v1h-2z"/><path id="g115" d="M2 0h1v1h-1zM3 1h1v1h-1zM5 0h1v2h-1zM8 0h1v2h-1zM1 2h10v1h-10zM4 3h1v1h-1zM7 3h1v1h-1zM1 4h10v1h-10zM3 5h1v1h-1zM8 5h1v1h-1zM2 6h9v1h-9zM1 7h1v1h-1zM5 7h1v1h-1zM4 8h1v1h-1zM3 9h1v1h-1zM8 7h1v3h-1zM1 10h2v1h-2zM6 10h3v1h-3z"/><path id="g116" d="M6 1h1v1h-1zM8 1h1v1h-1zM4 2h7v1h-7zM2 1h1v3h-1zM6 3h1v1h-1zM8 3h1v1h-1zM1 4h3v1h-3zM5 4h6v1h-6zM2 5h1v1h-1zM4 5h7v1h-7zM2 6h2v1h-2zM5 6h6v1h-6zM1 7h3v1h-3zM5 7h1v1h-1zM7 7h1v1h-1zM10 7h1v1h-1zM1 8h2v1h-2zM5 8h6v1h-6zM4 9h8v1h-8zM10 10h1v1h-1zM2 9h1v3h-1zM5 10h1v2h-1zM8 11h3v1h-3z"/><path id="g117" d="M8 1h1v1h-1zM6 1h1v2h-1zM9 2h1v1h-1zM2 3h9v1h-9zM2 4h1v2h-1zM6 4h1v2h-1zM2 6h4v1h-4zM7 6h1v2h-1zM9 5h1v3h-1zM2 7h1v3h-1zM5 7h1v3h-1zM2 10h3v1h-3zM7 8h2v3h-2zM10 10h1v1h-1zM1 11h1v1h-1zM5 11h2v1h-2zM9 11h2v1h-2z"/><path id="g118" d="M2 2h9v1h-9zM4 4h1v1h-1zM8 3h1v2h-1zM5 5h3v1h-3zM7 6h1v1h-1zM6 7h1v1h-1zM8 7h1v1h-1zM4 8h2v1h-2zM9 8h1v1h-1zM2 3h1v7h-1zM2 10h9v1h-9zM2 11h1v1h-1z"/><path id="g119" d="M7 1h1v1h-1zM4 1h1v2h-1zM8 2h1v1h-1zM3 3h1v1h-1zM8 3h2v1h-2zM2 4h2v1h-2zM9 4h2v1h-2zM1 5h11v1h-11zM5 6h1v2h-1zM4 8h2v1h-2zM9 6h1v3h-1zM4 9h1v1h-1zM8 9h1v1h-1zM2 10h2v1h-2zM6 10h3v1h-3z"/><path id="g120" d="M1 2h1v1h-1zM4 2h6v1h-6zM2 3h1v1h-1zM6 3h3v1h-3zM4 4h7v1h-7zM4 5h1v1h-1zM7 5h1v1h-1zM10 5h1v1h-1zM1 6h2v1h-2zM4 6h7v2h-7zM10 8h1v1h-1zM2 7h1v3h-1zM4 8h1v2h-1zM7 8h1v2h-1zM9 9h2v1h-2zM1 10h1v1h-1zM3 10h9v1h-9z"/><path id="g121" d="M3 1h1v2h-1zM6 1h1v2h-1zM8 1h1v2h-1zM1 3h10v1h-10zM1 4h1v1h-1zM3 4h6v1h-6zM10 4h1v1h-1zM3 5h1v1h-1zM8 5h1v1h-1zM3 6h6v1h-6zM6 7h1v1h-1zM2 8h8v1h-8zM9 9h1v1h-1zM2 9h1v2h-1zM8 10h2v1h-2zM6 9h1v3h-1z"/><path id="g122" d="M2 2h1v1h-1zM7 1h1v2h-1zM3 3h8v1h-8zM8 4h1v1h-1zM1 5h2v1h-2zM6 4h1v2h-1zM9 5h1v1h-1zM2 6h1v1h-1zM4 6h2v1h-2zM10 6h1v1h-1zM2 8h1v2h-1zM5 7h1v3h-1zM7 6h2v4h-2zM10 9h1v1h-1zM1 10h1v1h-1zM4 10h1v1h-1zM7 10h4v1h-4z"/><path id="g123" d="M9 8h1v1h-1zM8 9h1v1h-1zM3 2h1v9h-1zM7 10h1v1h-1zM4 11h3v1h-3z"/><path id="g124" d="M1 2h4v1h-4zM1 3h1v3h-1zM5 3h1v3h-1zM1 6h4v1h-4zM4 7h2v1h-2zM1 7h1v3h-1zM5 8h1v2h-1zM1 10h4v1h-4z"/><path id="g125" d="M2 2h3v1h-3zM2 3h1v1h-1zM4 3h1v1h-1zM1 4h1v5h-1zM5 4h1v5h-1zM2 9h1v1h-1zM4 9h1v1h-1zM2 10h3v1h-3z"/><path id="g126" d="M1 2h1v1h-1zM4 2h2v1h-2zM1 3h2v1h-2zM2 4h1v1h-1zM4 3h1v2h-1zM2 5h2v1h-2zM3 6h1v1h-1zM2 7h2v1h-2zM2 8h1v1h-1zM4 8h1v2h-1zM1 9h1v2h-1zM5 10h1v1h-1z"/><path id="g127" d="M1 3h4v1h-4zM5 4h1v1h-1zM4 5h1v4h-1zM3 9h1v1h-1zM2 10h2v1h-2zM2 11h1v1h-1z"/><path id="g128" d="M3 4h1v2h-1zM1 6h5v1h-5zM3 7h1v1h-1zM2 8h2v1h-2zM1 9h1v2h-1zM3 9h1v2h-1zM2 11h2v1h-2z"/><path id="g129" d="M2 5h1v1h-1zM4 3h1v3h-1zM3 6h2v3h-2zM2 9h1v1h-1zM5 9h1v1h-1zM1 10h2v1h-2zM1 11h1v1h-1z"/><path id="g130" d="M2 3h1v1h-1zM1 5h1v1h-1zM1 6h2v1h-2zM5 5h1v2h-1zM4 7h1v2h-1zM3 9h1v1h-1zM2 10h2v1h-2zM1 11h2v1h-2z"/><path id="g131" d="M1 5h4v1h-4zM4 6h1v2h-1zM1 8h4v1h-4zM4 9h1v1h-1zM1 10h4v1h-4zM4 11h1v1h-1z"/><path id="g132" d="M1 2h1v1h-1zM2 3h1v1h-1zM5 4h1v2h-1zM4 6h1v2h-1zM3 8h1v1h-1zM2 9h1v1h-1zM1 10h1v1h-1z"/><path id="g133" d="M3 1h1v2h-1zM1 3h5v1h-5zM9 1h1v3h-1zM6 4h5v1h-5zM2 6h1v1h-1zM4 4h1v3h-1zM6 6h1v1h-1zM3 7h1v1h-1zM3 8h2v1h-2zM7 7h1v2h-1zM4 9h1v1h-1zM2 9h1v2h-1zM9 5h1v6h-1zM1 11h1v1h-1zM7 11h3v1h-3z"/><path id="g134" d="M4 1h1v1h-1zM3 2h5v1h-5zM2 3h8v1h-8zM1 4h2v1h-2zM6 4h1v1h-1zM9 4h1v1h-1zM2 5h8v1h-8zM4 6h2v1h-2zM7 6h1v1h-1zM9 6h1v1h-1zM1 7h3v1h-3zM5 7h1v1h-1zM7 7h2v1h-2zM3 8h2v1h-2zM6 8h2v1h-2zM1 9h2v1h-2zM4 9h3v1h-3zM8 9h1v1h-1zM2 10h2v1h-2zM6 10h1v1h-1zM9 10h2v1h-2zM1 11h1v1h-1zM5 11h2v1h-2z"/><path id="g135" d="M4 2h5v1h-5zM2 3h3v1h-3zM6 3h1v1h-1zM8 3h2v1h-2zM2 4h1v1h-1zM9 4h2v1h-2zM5 4h1v4h-1zM10 5h1v3h-1zM1 5h1v4h-1zM4 8h1v1h-1zM9 8h1v1h-1zM2 9h2v1h-2zM8 9h2v1h-2zM6 10h2v1h-2z"/><path id="g136" d="M1 2h3v1h-3zM6 2h3v1h-3zM1 3h4v1h-4zM6 3h1v2h-1zM8 3h1v2h-1zM10 4h1v1h-1zM5 5h1v1h-1zM8 5h3v1h-3zM1 5h3v2h-3zM5 6h5v1h-5zM9 7h1v1h-1zM1 8h4v1h-4zM6 7h1v2h-1zM8 8h1v1h-1zM1 9h1v1h-1zM4 9h1v1h-1zM7 9h1v1h-1zM1 10h4v1h-4zM6 10h1v1h-1zM8 10h3v1h-3zM1 11h1v1h-1zM5 11h1v1h-1zM10 11h1v1h-1z"/><path id="g137" d="M3 0h1v2h-1zM7 0h1v2h-1zM2 2h1v2h-1zM4 2h7v2h-7zM1 4h2v2h-2zM4 4h1v2h-1zM7 4h1v2h-1zM10 4h1v2h-1zM4 6h7v1h-7zM5 7h1v1h-1zM7 7h1v1h-1zM6 8h2v1h-2zM6 9h3v1h-3zM2 6h1v5h-1zM4 10h2v1h-2zM9 10h2v1h-2z"/><path id="g138" d="M2 2h8v1h-8zM2 3h1v1h-1zM6 3h1v1h-1zM9 3h1v1h-1zM2 4h8v1h-8zM2 5h1v2h-1zM6 5h1v2h-1zM9 5h1v2h-1zM2 7h8v1h-8zM2 8h1v2h-1zM9 8h1v2h-1zM6 8h1v3h-1zM8 10h2v1h-2zM1 10h1v2h-1z"/><path id="g139" d="M4 2h1v2h-1zM1 4h5v1h-5zM4 5h1v1h-1zM3 6h2v1h-2zM2 7h1v2h-1zM1 9h1v1h-1zM4 7h1v4h-1zM2 11h3v1h-3z"/><path id="g140" d="M2 1h1v1h-1zM2 2h2v1h-2zM1 3h1v1h-1z"/><path id="g141" d="M1 2h1v7h-1zM4 2h1v8h-1zM3 10h1v1h-1zM2 11h2v1h-2zM2 12h1v1h-1z"/><path id="g142" d="M1 2h4v1h-4zM4 3h1v3h-1zM2 4h1v5h-1zM1 9h1v2h-1z"/><path id="g143" d="M2 3h1v6h-1zM4 6h1v3h-1zM0 3h1v7h-1zM2 9h2v2h-2zM-1 10h1v2h-1zM2 11h1v1h-1z"/><path id="g144" d="M2 2h8v1h-8zM8 3h1v1h-1zM4 4h4v1h-4zM6 5h2v1h-2zM1 6h10v1h-10zM10 7h1v1h-1zM9 8h1v1h-1zM6 7h1v4h-1zM3 11h4v1h-4z"/><path id="g145" d="M1 0h1v1h-1zM1 1h2v1h-2zM4 1h3v1h-3zM4 2h1v1h-1zM6 2h1v1h-1zM4 3h3v1h-3zM1 4h2v1h-2zM4 4h1v1h-1zM6 4h1v1h-1zM2 5h1v1h-1zM4 5h3v1h-3zM4 6h1v1h-1zM6 6h1v1h-1zM4 7h3v1h-3zM8 2h1v6h-1zM2 7h1v2h-1zM4 8h1v2h-1zM6 8h1v2h-1zM10 0h1v10h-1zM1 9h1v2h-1zM8 10h3v1h-3z"/><path id="g146" d="M3 1h1v1h-1zM7 1h2v1h-2zM4 2h1v1h-1zM7 2h1v1h-1zM1 3h10v1h-10zM1 5h5v1h-5zM1 6h1v1h-1zM5 6h1v1h-1zM1 7h5v2h-5zM7 5h1v5h-1zM5 9h1v2h-1zM10 5h1v6h-1zM1 9h1v3h-1zM4 11h2v1h-2zM8 11h3v1h-3z"/><path id="g147" d="M3 1h1v2h-1zM6 2h5v1h-5zM1 3h10v1h-10zM3 4h2v1h-2zM6 4h1v1h-1zM10 4h1v1h-1zM2 5h2v1h-2zM5 5h6v1h-6zM1 6h1v1h-1zM6 6h1v1h-1zM10 6h1v1h-1zM3 6h1v2h-1zM6 7h5v1h-5zM6 8h1v1h-1zM9 8h1v1h-1zM2 8h1v2h-1zM10 9h1v1h-1zM1 10h1v1h-1zM4 8h1v3h-1zM8 9h1v2h-1zM11 10h1v1h-1zM4 11h5v1h-5z"/><path id="g148" d="M7 2h1v2h-1zM1 4h9v1h-9zM6 5h2v1h-2zM5 6h1v1h-1zM4 7h1v1h-1zM3 8h1v1h-1zM1 9h2v1h-2zM7 6h1v4h-1zM5 10h3v1h-3z"/><path id="g149" d="M10 0h1v1h-1zM9 1h1v1h-1zM11 1h1v1h-1zM2 2h7v1h-7zM7 3h1v2h-1zM6 5h1v1h-1zM5 6h3v1h-3zM4 7h2v1h-2zM7 7h2v1h-2zM3 8h1v1h-1zM8 8h2v1h-2zM1 9h2v1h-2zM9 9h1v1h-1z"/><path id="g150" d="M4 1h1v2h-1zM2 3h5v1h-5zM8 3h1v1h-1zM9 4h2v1h-2zM10 5h1v1h-1zM3 4h1v3h-1zM2 7h1v1h-1zM7 5h1v3h-1zM1 8h1v1h-1zM5 8h3v1h-3zM4 9h1v1h-1zM7 9h4v1h-4zM5 10h3v1h-3z"/><path id="g151" d="M1 3h1v1h-1zM8 4h1v1h-1zM8 5h2v1h-2zM9 6h1v1h-1zM9 7h2v1h-2zM2 4h1v6h-1zM5 8h1v2h-1zM3 10h2v1h-2z"/><path id="g152" d="M1 5h4v1h-4zM1 6h1v5h-1zM5 6h1v5h-1z"/><path id="g153" d="M9 1h1v1h-1zM2 2h2v1h-2zM8 2h1v1h-1zM7 3h1v2h-1zM1 3h1v3h-1zM4 3h1v3h-1zM6 5h1v1h-1zM2 6h2v1h-2zM8 6h2v1h-2zM5 6h1v2h-1zM4 8h1v2h-1zM7 7h1v3h-1zM10 7h1v3h-1zM3 10h1v1h-1zM8 10h2v1h-2zM2 11h1v1h-1z"/><path id="g154" d="M1 2h10v1h-10zM5 3h1v2h-1zM5 5h2v1h-2zM7 6h2v1h-2zM9 7h2v1h-2zM5 6h1v6h-1z"/><path id="g155" d="M4 1h1v1h-1zM7 1h1v1h-1zM1 2h10v1h-10zM4 3h1v1h-1zM7 3h1v1h-1zM2 4h1v1h-1zM6 4h4v1h-4zM3 5h1v1h-1zM5 5h2v1h-2zM8 5h1v1h-1zM1 6h2v1h-2zM4 6h1v1h-1zM7 6h1v1h-1zM4 7h3v1h-3zM8 7h3v1h-3zM3 8h1v1h-1zM5 8h5v1h-5zM2 9h1v1h-1zM5 9h1v1h-1zM9 9h1v1h-1zM1 10h2v1h-2zM5 10h5v1h-5zM1 11h1v1h-1zM5 11h1v1h-1zM9 11h1v1h-1z"/><path id="g156" d="M0 9h1v2h-1z"/><path id="g157" d="M1 2h10v1h-10zM3 4h6v1h-6zM4 6h4v1h-4zM4 7h1v1h-1zM7 7h1v1h-1zM4 8h4v1h-4zM4 9h1v1h-1zM10 3h1v8h-1zM1 3h1v9h-1zM7 11h4v1h-4z"/><path id="g158" d="M1 6h10v1h-10z"/><path id="g159" d="M2 2h8v1h-8zM2 3h1v1h-1zM4 3h1v1h-1zM7 3h1v1h-1zM9 3h1v1h-1zM2 4h8v4h-8zM2 8h1v1h-1zM9 8h1v1h-1zM2 9h8v1h-8zM3 10h2v1h-2zM7 10h2v1h-2zM1 11h2v1h-2zM9 11h1v1h-1z"/><path id="g160" d="M2 2h8v1h-8zM2 3h1v2h-1zM9 3h1v2h-1zM2 5h8v1h-8zM2 6h1v1h-1zM9 6h1v1h-1zM2 7h8v1h-8zM2 8h1v2h-1zM9 8h1v2h-1zM2 10h8v1h-8zM2 11h1v1h-1zM9 11h1v1h-1z"/><path id="g161" d="M6 1h1v1h-1zM8 1h1v1h-1zM1 2h3v1h-3zM5 2h6v1h-6zM1 3h1v1h-1zM3 3h1v1h-1zM6 3h1v1h-1zM8 3h1v1h-1zM1 4h3v1h-3zM5 4h6v1h-6zM1 5h1v1h-1zM3 5h8v1h-8zM1 6h3v1h-3zM5 6h6v1h-6zM1 7h1v1h-1zM3 7h1v1h-1zM5 7h1v1h-1zM7 7h1v1h-1zM10 7h1v1h-1zM1 8h3v1h-3zM5 8h6v1h-6zM4 9h8v1h-8zM3 10h1v1h-1zM10 10h1v1h-1zM1 10h1v2h-1zM5 10h1v2h-1zM8 11h3v1h-3z"/><path id="g162" d="M3 2h4v1h-4zM6 3h1v3h-1zM7 6h1v2h-1zM5 6h1v3h-1zM8 8h1v1h-1zM4 9h1v1h-1zM8 9h2v1h-2zM3 10h1v1h-1zM9 10h2v1h-2zM1 11h2v1h-2zM10 11h1v1h-1z"/><path id="g163" d="M1 2h4v1h-4zM1 3h5v1h-5zM8 1h1v4h-1zM6 5h5v1h-5zM1 5h4v2h-4zM1 8h5v1h-5zM1 9h1v1h-1zM5 9h1v1h-1zM1 10h5v1h-5zM1 11h1v1h-1zM5 11h1v1h-1zM8 6h1v6h-1z"/><path id="g164" d="M2 1h1v1h-1zM2 2h9v1h-9zM1 3h1v1h-1zM4 3h1v1h-1zM6 3h1v1h-1zM8 3h1v1h-1zM2 4h8v3h-8zM2 7h1v1h-1zM9 7h1v1h-1zM2 8h8v1h-8zM1 9h10v1h-10zM4 10h1v1h-1zM1 11h3v1h-3zM7 10h1v2h-1z"/><path id="g165" d="M3 0h1v2h-1zM8 0h1v2h-1zM1 2h2v1h-2zM4 2h7v1h-7zM2 3h2v1h-2zM8 3h1v1h-1zM2 4h1v1h-1zM4 4h7v1h-7zM1 5h4v1h-4zM6 6h5v1h-5zM3 6h2v2h-2zM6 7h1v2h-1zM10 7h1v2h-1zM1 7h1v3h-1zM6 9h5v1h-5zM3 8h1v3h-1zM6 10h1v1h-1zM10 10h1v1h-1z"/><path id="g166" d="M2 2h8v1h-8zM2 3h1v1h-1zM6 3h1v1h-1zM9 3h1v1h-1zM2 4h8v2h-8zM6 6h1v1h-1zM1 7h10v1h-10zM5 8h3v1h-3zM4 9h1v1h-1zM8 9h1v1h-1zM2 10h2v1h-2zM9 10h2v1h-2zM1 11h1v1h-1zM6 9h1v3h-1z"/><path id="g167" d="M8 1h1v2h-1zM7 3h1v1h-1zM5 4h2v1h-2zM4 5h3v1h-3zM2 6h2v1h-2zM6 6h1v5h-1z"/><path id="g168" d="M8 1h1v1h-1zM7 2h2v1h-2zM7 3h1v1h-1zM4 4h4v1h-4zM6 5h1v1h-1zM5 6h1v1h-1zM7 6h1v1h-1zM4 7h2v1h-2zM8 7h1v1h-1zM3 8h2v1h-2zM2 9h2v1h-2z"/><path id="g169" d="M9 1h1v1h-1zM3 2h1v1h-1zM8 2h1v1h-1zM10 2h1v1h-1zM4 3h2v1h-2zM9 3h1v1h-1zM2 5h2v1h-2zM9 5h1v1h-1zM3 6h1v1h-1zM8 6h2v1h-2zM7 7h2v1h-2zM6 8h2v1h-2zM4 9h2v1h-2zM2 10h2v1h-2z"/><path id="g170" d="M1 2h10v1h-10zM6 3h1v1h-1zM2 4h8v1h-8zM2 5h1v1h-1zM6 5h1v1h-1zM9 5h1v1h-1zM2 6h8v1h-8zM2 7h1v1h-1zM6 7h1v1h-1zM9 7h1v1h-1zM1 8h10v1h-10zM9 9h1v2h-1zM2 9h1v3h-1zM8 11h2v1h-2z"/><path id="g171" d="M1 2h4v1h-4zM7 1h1v2h-1zM5 3h6v1h-6zM2 3h1v2h-1zM5 4h2v1h-2zM10 4h1v1h-1zM2 5h3v1h-3zM6 5h5v1h-5zM2 6h1v1h-1zM4 6h1v1h-1zM6 6h1v1h-1zM8 6h1v1h-1zM1 7h2v1h-2zM4 7h7v1h-7zM6 8h5v1h-5zM2 8h1v2h-1zM4 8h1v2h-1zM6 9h1v1h-1zM8 9h1v1h-1zM2 10h3v1h-3zM6 10h5v1h-5zM2 11h1v1h-1zM6 11h1v1h-1z"/><path id="g172" d="M9 1h1v1h-1zM2 1h1v2h-1zM7 1h1v2h-1zM10 2h1v1h-1zM1 3h10v1h-10zM3 4h1v1h-1zM7 4h1v1h-1zM2 5h1v1h-1zM2 6h2v1h-2zM5 5h6v2h-6zM1 7h5v1h-5zM7 7h1v1h-1zM10 7h1v1h-1zM5 8h6v1h-6zM10 9h1v2h-1zM2 8h1v4h-1zM5 9h1v3h-1zM7 9h1v3h-1zM9 11h2v1h-2z"/><path id="g173" d="M1 2h10v1h-10zM6 3h1v3h-1zM6 6h4v1h-4zM3 5h1v5h-1zM6 7h1v3h-1zM1 10h10v1h-10z"/><path id="g174" d="M5 1h1v3h-1zM1 4h9v1h-9zM5 5h1v3h-1zM4 8h1v1h-1zM3 9h2v1h-2zM2 10h2v1h-2zM9 5h1v6h-1zM1 11h2v1h-2zM6 11h4v1h-4z"/><path id="g175" d="M3 0h1v1h-1zM7 0h1v1h-1zM4 1h7v1h-7zM7 2h1v1h-1zM2 1h1v3h-1zM6 3h4v1h-4zM6 4h1v1h-1zM9 4h1v1h-1zM1 4h2v2h-2zM6 5h4v2h-4zM6 7h1v1h-1zM9 7h1v1h-1zM4 4h1v5h-1zM6 8h4v1h-4zM4 9h7v1h-7zM2 6h1v5h-1zM4 10h1v1h-1z"/><path id="g176" d="M5 1h1v2h-1zM2 3h6v1h-6zM4 4h1v1h-1zM3 5h4v1h-4zM3 6h1v1h-1zM6 6h4v1h-4zM2 7h1v1h-1zM5 7h2v1h-2zM6 8h1v1h-1zM4 8h1v2h-1zM5 10h5v1h-5z"/><path id="g177" d="M3 0h1v1h-1zM6 0h1v1h-1zM2 1h9v1h-9zM2 2h1v1h-1zM6 2h1v1h-1zM1 3h9v1h-9zM2 4h8v1h-8zM2 5h9v1h-9zM6 6h1v1h-1zM1 7h10v1h-10zM5 8h3v1h-3zM3 9h2v1h-2zM8 9h2v1h-2zM1 10h2v1h-2zM6 9h1v2h-1zM10 10h1v1h-1z"/><path id="g178" d="M3 1h1v2h-1zM6 1h1v2h-1zM8 1h1v2h-1zM2 3h8v2h-8zM2 5h1v1h-1zM6 5h1v1h-1zM9 5h1v1h-1zM2 6h8v1h-8zM6 7h1v1h-1zM1 8h10v1h-10zM6 9h1v2h-1z"/><path id="g179" d="M3 0h1v2h-1zM7 0h1v3h-1zM2 2h1v2h-1zM4 3h7v1h-7zM1 4h2v2h-2zM9 5h1v1h-1zM5 5h1v2h-1zM6 7h1v1h-1zM2 6h1v3h-1zM8 6h1v3h-1zM2 9h9v1h-9zM2 10h1v1h-1z"/><path id="g180" d="M5 2h2v1h-2zM3 3h2v1h-2zM6 3h1v1h-1zM5 4h1v2h-1zM3 6h5v1h-5zM9 5h1v2h-1zM2 7h1v1h-1zM8 7h2v1h-2zM4 7h1v2h-1zM8 8h1v1h-1zM10 8h1v1h-1zM1 8h1v2h-1zM3 9h1v1h-1zM7 9h2v1h-2zM2 10h1v1h-1zM6 10h2v1h-2z"/><path id="g181" d="M4 7h1v2h-1zM1 3h1v7h-1zM3 9h1v1h-1zM1 10h2v1h-2zM1 11h1v1h-1z"/><path id="g182" d="M3 0h1v1h-1zM3 1h8v1h-8zM2 2h1v1h-1zM2 3h8v1h-8zM3 4h1v2h-1zM6 4h1v2h-1zM9 4h1v2h-1zM1 6h10v1h-10zM3 7h1v1h-1zM5 7h1v1h-1zM9 7h1v1h-1zM3 8h8v1h-8zM2 9h1v1h-1zM8 9h1v1h-1zM7 10h2v1h-2z"/><path id="g183" d="M2 1h1v2h-1zM1 3h4v1h-4zM7 1h1v3h-1zM5 4h6v1h-6zM5 5h1v1h-1zM2 4h1v3h-1zM4 6h2v1h-2zM7 5h1v2h-1zM10 5h1v2h-1zM1 7h3v1h-3zM5 7h6v1h-6zM5 8h1v2h-1zM7 8h1v2h-1zM10 8h1v2h-1zM2 8h1v3h-1zM5 10h6v1h-6zM1 11h2v1h-2zM5 11h1v1h-1zM10 11h1v1h-1z"/><path id="g184" d="M1 2h1v1h-1zM5 2h6v1h-6zM3 1h1v3h-1zM6 3h5v1h-5zM1 4h6v1h-6zM10 4h1v1h-1zM2 5h3v1h-3zM6 5h5v1h-5zM1 6h1v1h-1zM5 6h2v1h-2zM10 6h1v1h-1zM3 6h1v2h-1zM6 7h5v1h-5zM1 8h6v1h-6zM10 8h1v1h-1zM3 9h1v1h-1zM6 9h5v1h-5zM2 10h1v1h-1zM4 10h2v1h-2zM7 10h1v1h-1zM9 10h1v1h-1zM1 11h1v1h-1zM6 11h1v1h-1zM10 11h1v1h-1z"/><path id="g185" d="M2 3h8v1h-8zM9 4h1v2h-1zM2 4h1v3h-1zM8 6h1v2h-1zM7 8h1v1h-1zM6 9h2v1h-2zM4 10h2v1h-2z"/><path id="g186" d="M9 2h1v1h-1zM8 3h2v1h-2zM4 2h1v3h-1zM8 4h1v1h-1zM4 5h2v1h-2zM6 6h2v1h-2zM8 7h1v1h-1zM4 6h1v5h-1z"/><path id="g187" d="M3 0h1v2h-1zM6 0h1v3h-1zM9 1h1v2h-1zM2 2h1v2h-1zM6 3h5v1h-5zM1 4h6v1h-6zM1 5h2v1h-2zM6 5h1v2h-1zM7 7h1v2h-1zM8 9h1v1h-1zM10 8h1v2h-1zM2 6h1v5h-1zM9 10h2v1h-2z"/><path id="g188" d="M1 1h1v1h-1zM7 1h1v1h-1zM4 2h7v1h-7zM2 2h1v2h-1zM6 3h1v1h-1zM8 3h1v1h-1zM4 4h7v1h-7zM4 5h1v1h-1zM7 5h1v1h-1zM10 5h1v1h-1zM1 6h2v1h-2zM4 6h7v1h-7zM6 7h3v2h-3zM10 7h1v2h-1zM2 7h1v3h-1zM4 7h1v3h-1zM6 9h1v1h-1zM9 9h2v1h-2zM1 10h1v1h-1zM3 10h8v1h-8z"/><path id="g189" d="M6 1h1v2h-1zM1 3h10v1h-10zM6 4h1v1h-1zM4 5h3v1h-3zM3 6h1v2h-1zM6 6h1v2h-1zM4 8h3v1h-3zM6 9h1v1h-1zM5 10h1v1h-1zM4 11h1v1h-1z"/><path id="g190" d="M3 2h5v1h-5zM6 3h2v1h-2zM5 4h2v1h-2zM4 5h2v1h-2zM3 6h6v1h-6zM2 7h2v1h-2zM2 8h1v1h-1zM4 8h3v1h-3zM4 9h1v1h-1zM6 9h1v1h-1zM9 7h1v3h-1zM4 10h5v1h-5z"/><path id="g191" d="M4 1h1v1h-1zM3 2h1v2h-1zM2 4h1v6h-1zM3 10h1v2h-1zM4 12h1v1h-1z"/><path id="g192" d="M1 2h4v1h-4zM7 1h1v2h-1zM4 3h7v1h-7zM4 4h1v1h-1zM7 4h1v1h-1zM1 3h1v3h-1zM4 5h7v1h-7zM1 6h4v1h-4zM9 6h1v1h-1zM4 7h7v1h-7zM1 7h1v2h-1zM4 8h2v1h-2zM1 9h4v1h-4zM6 9h1v1h-1zM1 10h1v1h-1zM9 8h1v3h-1zM7 11h3v1h-3z"/><path id="g193" d="M1 1h1v1h-1zM2 2h1v2h-1zM3 4h1v6h-1zM2 10h1v2h-1zM1 12h1v1h-1z"/><path id="g194" d="M3 1h1v1h-1zM2 2h1v1h-1zM7 1h1v2h-1zM1 3h4v1h-4zM6 3h5v1h-5zM4 4h1v1h-1zM6 4h1v1h-1zM1 4h1v2h-1zM4 5h2v1h-2zM1 6h4v1h-4zM7 6h1v1h-1zM8 7h1v1h-1zM1 7h1v2h-1zM4 7h1v2h-1zM1 9h4v1h-4zM1 10h1v1h-1zM10 4h1v7h-1zM7 11h3v1h-3z"/><path id="g195" d="M1 2h10v1h-10zM2 4h2v1h-2zM3 5h1v1h-1zM9 4h1v2h-1zM6 3h1v4h-1zM1 7h10v1h-10zM6 8h1v4h-1z"/><path id="g196" d="M6 0h1v2h-1zM2 0h1v3h-1zM5 2h6v1h-6zM1 3h3v1h-3zM5 3h1v1h-1zM4 4h2v1h-2zM4 5h1v1h-1zM6 5h3v1h-3zM2 4h1v4h-1zM8 7h1v1h-1zM2 8h2v1h-2zM5 8h3v1h-3zM1 9h1v1h-1zM10 3h1v7h-1zM7 10h4v1h-4z"/><path id="g197" d="M1 2h1v1h-1zM2 3h1v1h-1zM3 4h1v1h-1zM4 5h1v1h-1zM5 6h1v1h-1zM6 7h1v1h-1zM7 8h1v1h-1zM8 9h1v1h-1zM8 2h1v1h-1zM7 3h1v1h-1zM6 4h1v1h-1zM5 5h1v1h-1zM4 6h1v1h-1zM3 7h1v1h-1zM2 8h1v1h-1zM1 9h1v1h-1z"/><path id="g198" d="M2 2h1v1h-1zM1 3h2v2h-2zM0 5h1v3h-1zM2 5h1v3h-1zM0 8h4v1h-4zM2 9h1v2h-1z"/><path id="g199" d="M2 1h1v2h-1zM5 1h1v2h-1zM7 2h4v1h-4zM1 3h5v1h-5zM7 3h1v1h-1zM10 3h1v1h-1zM2 4h4v1h-4zM7 4h4v1h-4zM2 5h1v1h-1zM5 5h1v1h-1zM2 6h4v1h-4zM7 5h1v2h-1zM10 5h1v2h-1zM2 7h1v1h-1zM5 7h1v1h-1zM7 7h4v1h-4zM1 8h7v1h-7zM4 9h1v1h-1zM7 9h1v1h-1zM2 10h1v1h-1zM5 10h3v1h-3zM10 8h1v3h-1zM1 11h1v1h-1zM6 11h1v1h-1zM8 11h3v1h-3z"/><path id="g200" d="M2 2h2v1h-2zM7 1h1v2h-1zM1 3h2v1h-2zM4 3h7v1h-7zM3 4h1v1h-1zM7 4h1v1h-1zM2 5h1v1h-1zM4 5h7v1h-7zM1 6h2v1h-2zM8 6h1v1h-1zM0 7h1v1h-1zM4 7h7v1h-7zM5 8h1v1h-1zM5 9h2v1h-2zM9 8h1v3h-1zM2 7h1v5h-1zM7 11h3v1h-3z"/><path id="g201" d="M1 2h3v1h-3zM5 2h6v1h-6zM1 3h5v1h-5zM10 3h1v1h-1zM5 4h1v2h-1zM1 5h3v2h-3zM7 3h1v4h-1zM9 4h1v3h-1zM5 7h6v1h-6zM1 8h4v1h-4zM1 9h1v1h-1zM4 9h1v1h-1zM1 10h4v1h-4zM1 11h1v1h-1zM4 11h1v1h-1zM7 8h1v4h-1z"/><path id="g202" d="M3 2h8v1h-8zM2 3h1v2h-1zM6 3h1v2h-1zM8 3h1v2h-1zM4 5h7v1h-7zM1 5h2v2h-2zM4 6h1v4h-1zM6 6h1v4h-1zM8 6h1v4h-1zM10 6h1v4h-1zM4 10h7v1h-7zM2 7h1v5h-1zM4 11h1v1h-1zM10 11h1v1h-1z"/><path id="g203" d="M3 1h1v2h-1zM7 1h1v2h-1zM4 3h7v1h-7zM2 3h1v2h-1zM5 4h1v1h-1zM6 5h1v1h-1zM8 4h1v2h-1zM1 5h2v2h-2zM4 6h7v1h-7zM5 7h5v1h-5zM5 8h1v2h-1zM9 8h1v2h-1zM5 10h5v1h-5zM2 7h1v5h-1zM5 11h1v1h-1zM9 11h1v1h-1z"/><path id="g204" d="M5 1h2v1h-2zM4 2h4v1h-4zM4 3h1v1h-1zM7 3h2v1h-2zM3 4h1v1h-1zM8 4h2v1h-2zM1 5h8v1h-8zM10 5h2v1h-2zM2 7h8v1h-8zM2 8h1v2h-1zM9 8h1v2h-1zM2 10h8v1h-8zM2 11h1v1h-1zM9 11h1v1h-1z"/><path id="g205" d="M6 1h1v1h-1zM5 2h1v1h-1zM7 2h1v1h-1zM4 3h1v1h-1zM8 3h1v1h-1zM3 4h1v1h-1zM8 4h2v1h-2zM2 5h9v1h-9zM1 6h1v1h-1zM6 6h1v1h-1zM2 7h9v1h-9zM9 8h1v1h-1zM3 9h1v1h-1zM6 8h1v2h-1zM8 9h1v1h-1zM1 10h10v1h-10z"/><path id="g206" d="M3 1h1v1h-1zM1 2h10v1h-10zM1 3h1v1h-1zM5 3h6v1h-6zM1 4h4v1h-4zM6 4h1v1h-1zM10 4h1v1h-1zM1 5h2v1h-2zM4 5h1v1h-1zM6 5h5v1h-5zM1 6h1v1h-1zM3 6h1v1h-1zM6 6h1v1h-1zM10 6h1v1h-1zM2 7h1v1h-1zM4 7h1v1h-1zM6 7h5v1h-5zM1 8h6v1h-6zM10 8h1v1h-1zM2 9h1v1h-1zM4 9h1v1h-1zM6 9h5v1h-5zM2 10h3v1h-3zM7 10h1v1h-1zM9 10h1v1h-1zM2 11h1v1h-1zM6 11h1v1h-1zM10 11h1v1h-1z"/><path id="g207" d="M1 2h5v1h-5zM7 2h4v1h-4zM2 3h1v1h-1zM4 3h1v1h-1zM1 4h5v1h-5zM10 3h1v3h-1zM1 5h2v2h-2zM7 6h4v1h-4zM1 7h1v1h-1zM4 5h2v3h-2zM1 8h5v1h-5zM1 9h1v1h-1zM5 9h1v1h-1zM11 8h1v2h-1zM1 10h5v1h-5zM7 7h1v4h-1zM10 10h1v1h-1zM1 11h1v1h-1zM5 11h1v1h-1zM7 11h4v1h-4z"/><path id="g208" d="M2 0h1v1h-1zM7 0h1v1h-1zM2 1h4v1h-4zM7 1h4v1h-4zM1 2h1v1h-1zM4 2h1v1h-1zM8 2h1v1h-1zM6 2h1v2h-1zM2 4h8v1h-8zM1 5h10v1h-10zM8 6h1v1h-1zM1 7h10v1h-10zM3 8h1v1h-1zM4 9h2v1h-2zM8 8h1v2h-1zM6 10h3v1h-3z"/><path id="g209" d="M3 1h1v3h-1zM1 4h4v1h-4zM7 2h1v3h-1zM3 5h1v2h-1zM3 7h2v1h-2zM8 7h1v1h-1zM1 8h3v1h-3zM6 5h1v4h-1zM9 8h1v2h-1zM3 9h1v2h-1zM5 9h1v2h-1zM8 10h3v1h-3zM1 11h3v1h-3zM5 11h3v1h-3zM10 11h1v1h-1z"/><path id="g210" d="M1 2h10v1h-10zM2 4h8v1h-8zM2 5h1v1h-1zM9 5h1v1h-1zM2 6h8v1h-8zM2 7h9v1h-9zM6 8h1v1h-1zM2 8h1v2h-1zM5 9h1v1h-1zM7 9h1v1h-1zM4 10h2v1h-2zM8 10h2v1h-2zM1 10h1v2h-1zM3 11h1v1h-1zM10 11h1v1h-1z"/><path id="g211" d="M1 2h9v1h-9zM1 3h1v3h-1zM6 3h1v3h-1zM9 3h1v3h-1zM1 6h9v1h-9zM9 7h1v4h-1zM1 7h1v5h-1zM8 11h2v1h-2z"/><path id="g212" d="M1 2h3v1h-3zM1 3h1v1h-1zM3 3h1v1h-1zM5 2h1v2h-1zM7 1h1v3h-1zM9 2h1v2h-1zM1 4h3v1h-3zM5 4h6v1h-6zM3 5h8v1h-8zM1 5h1v2h-1zM3 6h1v1h-1zM5 6h1v1h-1zM9 6h2v1h-2zM1 7h3v1h-3zM5 7h6v1h-6zM3 8h2v1h-2zM7 8h1v1h-1zM1 8h1v2h-1zM3 9h1v1h-1zM6 9h1v1h-1zM9 8h1v2h-1zM0 10h4v1h-4zM5 10h5v1h-5z"/><path id="g213" d="M8 1h1v1h-1zM6 1h1v2h-1zM9 2h1v1h-1zM6 3h5v1h-5zM1 4h6v1h-6zM6 5h1v1h-1zM1 6h5v1h-5zM7 6h1v3h-1zM3 7h1v3h-1zM5 9h4v1h-4zM1 10h4v1h-4zM8 10h1v1h-1zM10 9h1v2h-1zM9 11h2v1h-2z"/><path id="g214" d="M5 2h6v1h-6zM1 2h3v2h-3zM5 3h1v1h-1zM7 3h1v1h-1zM10 3h1v1h-1zM5 4h6v2h-6zM1 5h3v2h-3zM5 6h1v1h-1zM10 6h1v1h-1zM5 7h6v1h-6zM1 8h3v1h-3zM5 8h2v1h-2zM9 8h2v1h-2zM1 9h1v1h-1zM3 9h1v1h-1zM5 9h6v1h-6zM1 10h5v1h-5zM10 10h1v1h-1zM1 11h1v1h-1zM4 11h1v1h-1zM9 11h2v1h-2z"/><path id="g215" d="M3 0h1v1h-1zM8 0h1v1h-1zM7 1h4v1h-4zM1 1h5v2h-5zM7 2h1v1h-1zM9 2h1v1h-1zM1 3h1v1h-1zM3 3h1v1h-1zM5 3h5v1h-5zM1 4h5v1h-5zM8 4h2v1h-2zM3 5h1v1h-1zM5 5h1v1h-1zM7 5h2v1h-2zM10 5h1v1h-1zM1 7h10v1h-10zM6 8h4v1h-4zM3 8h1v2h-1zM6 9h1v1h-1zM1 10h10v1h-10z"/><path id="g216" d="M9 1h3v2h-3zM2 3h8v1h-8zM9 4h1v1h-1zM8 5h1v2h-1zM7 7h1v1h-1zM6 8h2v1h-2zM5 9h2v1h-2zM3 10h2v1h-2z"/><path id="g217" d="M1 2h3v1h-3zM5 2h5v1h-5zM1 3h6v1h-6zM9 3h1v1h-1zM5 4h5v1h-5zM5 5h1v1h-1zM1 5h3v2h-3zM5 6h5v1h-5zM9 7h1v1h-1zM1 8h10v1h-10zM1 9h1v1h-1zM4 9h1v1h-1zM6 9h1v1h-1zM8 9h1v1h-1zM1 10h5v1h-5zM9 10h2v1h-2zM1 11h1v1h-1zM5 11h1v1h-1zM10 11h1v1h-1z"/><path id="g218" d="M4 2h1v1h-1zM7 2h1v1h-1zM1 3h10v1h-10zM2 4h8v1h-8zM6 5h1v1h-1zM1 6h10v1h-10zM4 7h1v1h-1zM3 8h7v1h-7zM2 9h1v1h-1zM1 10h1v1h-1zM6 9h1v2h-1zM3 11h8v1h-8z"/><path id="g219" d="M4 1h1v3h-1zM8 3h1v1h-1zM5 4h3v1h-3zM4 5h1v1h-1zM3 6h1v1h-1zM2 7h1v2h-1zM3 9h7v1h-7z"/><path id="g220" d="M1 3h9v1h-9zM5 4h2v1h-2zM5 5h1v1h-1zM4 6h1v3h-1zM5 9h1v1h-1zM6 10h3v1h-3z"/><path id="g221" d="M4 1h1v2h-1zM8 2h1v1h-1zM2 3h5v1h-5zM9 3h1v1h-1zM1 4h1v1h-1zM4 4h1v1h-1zM9 4h2v1h-2zM3 5h1v2h-1zM10 5h1v2h-1zM7 4h1v4h-1zM2 7h1v2h-1zM6 8h2v1h-2zM1 9h1v1h-1zM4 9h3v1h-3z"/><path id="g222" d="M4 1h1v1h-1zM5 2h2v1h-2zM3 3h1v4h-1zM5 6h4v1h-4zM3 7h2v1h-2zM3 8h1v1h-1zM9 7h1v2h-1zM8 9h2v1h-2zM5 10h4v1h-4z"/><path id="g223" d="M8 1h2v1h-2zM2 2h1v1h-1zM8 2h1v1h-1zM10 2h1v1h-1zM4 3h7v1h-7zM1 4h1v1h-1zM4 4h1v1h-1zM8 4h1v1h-1zM2 5h1v1h-1zM4 5h5v1h-5zM10 5h1v1h-1zM4 6h6v1h-6zM4 7h2v1h-2zM7 7h1v1h-1zM4 8h4v1h-4zM9 7h1v2h-1zM2 7h1v3h-1zM4 9h2v1h-2zM8 9h3v1h-3zM7 10h1v1h-1zM9 10h2v1h-2zM1 10h1v2h-1zM3 10h1v2h-1zM6 11h1v1h-1zM10 11h1v1h-1z"/><path id="g224" d="M4 1h1v2h-1zM1 3h6v1h-6zM4 4h1v1h-1zM7 5h3v1h-3zM6 6h1v1h-1zM3 5h1v3h-1zM2 8h1v2h-1zM5 8h1v2h-1zM1 10h1v1h-1zM6 10h5v1h-5z"/><path id="g225" d="M2 1h1v2h-1zM5 2h5v1h-5zM1 3h4v1h-4zM9 3h1v1h-1zM8 4h1v1h-1zM6 3h1v3h-1zM8 5h3v1h-3zM2 4h1v3h-1zM4 6h1v1h-1zM10 6h1v1h-1zM1 7h3v1h-3zM6 6h2v2h-2zM9 7h1v1h-1zM8 8h2v2h-2zM2 8h1v3h-1zM5 8h1v3h-1zM7 10h1v1h-1zM9 10h2v1h-2zM1 11h2v1h-2zM4 11h1v1h-1zM6 11h1v1h-1z"/><path id="g226" d="M4 1h1v1h-1zM5 2h2v1h-2zM4 4h4v1h-4zM2 5h2v1h-2zM8 5h1v4h-1zM7 9h1v1h-1zM5 10h2v1h-2z"/><path id="g227" d="M1 2h2v1h-2zM0 3h1v1h-1zM3 3h1v3h-1zM1 6h2v1h-2zM0 9h1v1h-1zM3 7h1v3h-1zM1 10h2v1h-2z"/><path id="g228" d="M1 2h2v1h-2zM0 3h1v3h-1zM3 3h1v3h-1zM1 6h2v1h-2zM0 7h1v3h-1zM3 7h1v3h-1zM1 10h2v1h-2z"/><path id="g229" d="M1 2h2v1h-2zM0 3h1v3h-1zM3 3h1v3h-1zM1 6h3v1h-3zM0 9h1v1h-1zM3 7h1v3h-1zM1 10h2v1h-2z"/><path id="g230" d="M1 2h10v1h-10zM4 4h4v1h-4zM4 5h1v3h-1zM7 5h1v3h-1zM4 8h4v1h-4zM1 3h1v7h-1zM10 3h1v7h-1zM1 10h10v1h-10zM1 11h1v1h-1zM10 11h1v1h-1z"/><path id="g231" d="M4 1h1v1h-1zM4 2h7v1h-7zM6 3h1v3h-1zM7 6h1v1h-1zM9 3h1v4h-1zM2 2h1v6h-1zM4 3h1v5h-1zM7 7h2v1h-2zM2 8h3v1h-3zM8 8h1v1h-1zM1 9h1v1h-1zM7 9h2v1h-2zM4 9h1v2h-1zM6 10h1v1h-1zM9 10h2v1h-2zM4 11h2v1h-2zM10 11h1v1h-1z"/><path id="g232" d="M5 0h1v1h-1zM5 1h4v1h-4zM4 2h1v1h-1zM8 2h1v1h-1zM2 3h3v1h-3zM7 3h1v1h-1zM2 4h1v1h-1zM5 4h2v1h-2zM5 5h1v1h-1zM3 6h7v1h-7zM1 7h2v1h-2zM4 7h1v2h-1zM9 7h1v2h-1zM4 9h6v1h-6zM4 10h1v1h-1zM9 10h1v1h-1z"/><path id="g233" d="M2 2h1v1h-1zM9 2h1v1h-1zM3 3h1v1h-1zM8 3h1v1h-1zM6 1h1v4h-1zM2 5h8v1h-8zM9 6h1v2h-1zM2 8h8v1h-8zM9 9h1v1h-1zM2 10h8v1h-8zM9 11h1v1h-1z"/><path id="g234" d="M5 1h1v2h-1zM5 3h6v1h-6zM5 4h1v1h-1zM2 5h8v1h-8zM2 6h1v1h-1zM9 6h1v1h-1zM2 7h8v1h-8zM9 8h1v1h-1zM2 8h1v2h-1zM6 9h1v1h-1zM9 9h2v1h-2zM1 10h1v1h-1zM4 9h1v2h-1zM7 10h1v1h-1zM10 10h1v1h-1z"/><path id="g235" d="M5 1h1v2h-1zM1 3h10v1h-10zM5 4h1v1h-1zM2 5h7v1h-7zM3 6h1v1h-1zM8 6h1v1h-1zM4 7h1v1h-1zM7 7h1v1h-1zM4 8h3v1h-3zM5 9h2v1h-2zM2 10h3v1h-3zM7 10h4v1h-4z"/><path id="g236" d="M2 2h8v2h-8zM2 4h1v1h-1zM6 4h1v1h-1zM9 4h1v1h-1zM2 5h8v1h-8zM5 6h1v1h-1zM3 7h2v1h-2zM7 7h2v1h-2zM1 8h10v1h-10zM8 9h1v1h-1zM3 10h1v1h-1zM9 10h1v1h-1zM2 11h1v1h-1zM6 9h1v3h-1z"/><path id="g237" d="M4 1h1v1h-1zM4 2h1v1h-1zM3 3h1v1h-1zM3 4h1v1h-1zM2 5h1v1h-1zM2 6h1v1h-1zM1 7h1v1h-1zM1 8h1v1h-1zM0 9h1v1h-1zM-1 10h1v1h-1z"/><path id="g238" d="M0 9h1v2h-1zM-1 11h1v1h-1z"/><path id="g239" d="M0 2h4v1h-4zM3 3h1v2h-1zM2 5h1v3h-1zM1 8h1v3h-1z"/><path id="g240" d="M-1 6h5v1h-5z"/><path id="g241" d="M2 3h6v3h-6zM1 6h8v1h-8zM2 7h1v1h-1zM4 7h1v1h-1zM2 8h7v1h-7zM2 9h1v1h-1zM4 9h1v1h-1zM1 10h4v1h-4zM6 9h2v2h-2zM4 11h2v1h-2zM8 11h1v1h-1z"/><path id="g242" d="M5 3h1v2h-1zM1 5h8v1h-8zM5 6h1v1h-1zM4 7h1v2h-1zM6 7h1v2h-1zM3 9h1v1h-1zM7 9h1v1h-1zM2 10h1v1h-1zM8 10h1v1h-1z"/><path id="g243" d="M3 3h1v1h-1zM3 4h6v1h-6zM3 5h2v1h-2zM5 6h1v2h-1zM7 5h1v3h-1zM1 4h1v5h-1zM3 6h1v3h-1zM6 8h2v1h-2zM0 9h4v1h-4zM6 9h1v1h-1zM3 10h1v1h-1zM5 10h1v1h-1zM7 10h1v1h-1zM3 11h2v1h-2zM8 11h1v1h-1z"/><path id="g244" d="M5 3h1v1h-1zM1 4h8v1h-8zM5 5h1v1h-1zM1 6h7v1h-7zM3 7h1v1h-1zM7 7h1v1h-1zM4 8h1v1h-1zM6 8h1v1h-1zM5 9h1v1h-1zM3 10h2v1h-2zM6 10h2v1h-2zM1 11h2v1h-2zM8 11h1v1h-1z"/><path id="g245" d="M2 4h2v2h-2zM2 9h2v2h-2z"/><path id="g246" d="M3 5h1v1h-1zM7 5h1v1h-1zM2 6h1v2h-1zM8 6h1v2h-1zM1 8h1v1h-1zM9 8h1v1h-1zM5 3h1v7h-1zM3 10h3v1h-3z"/><path id="g247" d="M1 3h8v1h-8zM1 4h1v1h-1zM5 4h1v1h-1zM8 4h1v1h-1zM1 5h8v2h-8zM2 7h1v1h-1zM4 7h1v1h-1zM3 8h1v1h-1zM6 8h1v1h-1zM8 8h1v1h-1zM0 9h6v1h-6zM7 9h1v1h-1zM9 9h1v1h-1zM2 10h1v1h-1zM7 10h2v1h-2zM1 11h1v1h-1zM5 10h1v2h-1z"/><path id="g248" d="M1 3h3v1h-3zM1 4h4v1h-4zM6 3h1v3h-1zM5 6h4v1h-4zM1 6h3v2h-3zM1 8h4v1h-4zM1 9h1v1h-1zM4 9h1v1h-1zM1 10h4v1h-4zM1 11h1v1h-1zM4 11h1v1h-1zM6 7h1v5h-1z"/><path id="g249" d="M0 2h3v1h-3zM3 3h1v2h-1zM1 5h2v1h-2zM3 6h1v2h-1zM0 8h3v1h-3z"/><path id="g250" d="M0 7h1v2h-1zM-1 9h1v1h-1z"/><path id="g251" d="M2 2h1v1h-1zM1 3h2v1h-2zM0 4h1v2h-1zM2 4h1v2h-1zM0 6h4v1h-4zM2 7h1v2h-1z"/><path id="g252" d="M1 2h2v1h-2zM0 3h1v1h-1zM0 4h3v1h-3zM0 5h1v3h-1zM3 5h1v3h-1zM1 8h2v1h-2z"/><path id="g253" d="M1 2h2v1h-2zM0 3h1v2h-1zM3 3h1v2h-1zM1 5h3v1h-3zM3 6h1v2h-1zM1 8h2v1h-2z"/><path id="g254" d="M1 2h2v1h-2zM0 3h1v5h-1zM3 3h1v5h-1zM1 8h2v1h-2z"/><path id="g255" d="M0 5h5v1h-5z"/><path id="g256" d="M2 2h1v1h-1zM1 3h2v1h-2zM2 4h1v5h-1z"/><path id="g257" d="M0 2h4v1h-4zM0 3h1v1h-1zM0 4h3v1h-3zM0 7h1v1h-1zM3 5h1v3h-1zM1 8h2v1h-2z"/><path id="g258" d="M1 2h2v1h-2zM0 3h1v2h-1zM3 3h1v2h-1zM1 5h2v1h-2zM0 6h1v2h-1zM3 6h1v2h-1zM1 8h2v1h-2z"/><path id="g259" d="M1 2h2v1h-2zM0 3h1v1h-1zM3 3h1v2h-1zM2 5h1v1h-1zM1 6h1v1h-1zM0 7h1v1h-1zM0 8h4v1h-4z"/><path id="g260" d="M0 2h4v1h-4zM3 3h1v1h-1zM2 4h1v2h-1zM1 6h1v3h-1z"/><path id="g261" d="M2 2h8v1h-8zM9 3h1v1h-1zM8 4h1v2h-1zM7 6h2v1h-2zM6 7h2v1h-2zM5 8h2v1h-2zM3 9h2v1h-2z"/><path id="g262" d="M2 4h7v1h-7zM8 5h1v1h-1zM5 6h1v1h-1zM7 6h1v1h-1zM5 7h2v1h-2zM4 8h1v2h-1zM3 10h1v1h-1z"/><path id="g263" d="M3 3h1v5h-1zM10 6h1v2h-1zM6 2h1v7h-1zM9 8h1v1h-1zM2 8h1v2h-1zM6 9h3v1h-3zM1 10h1v1h-1zM6 10h1v1h-1z"/><path id="g264" d="M4 2h6v1h-6zM2 2h1v3h-1zM4 3h1v2h-1zM9 3h1v2h-1zM4 5h6v1h-6zM1 5h2v2h-2zM7 6h1v1h-1zM2 7h9v1h-9zM6 8h3v1h-3zM2 8h1v2h-1zM5 9h1v1h-1zM9 9h1v1h-1zM2 10h3v1h-3zM10 10h1v1h-1zM2 11h1v1h-1zM7 9h1v3h-1z"/><path id="g265" d="M4 1h1v2h-1zM1 3h10v1h-10zM4 4h1v1h-1zM5 5h5v1h-5zM3 5h1v2h-1zM8 6h1v1h-1zM2 7h2v1h-2zM7 7h1v1h-1zM1 8h1v1h-1zM3 8h8v1h-8zM7 9h1v2h-1zM3 9h1v3h-1zM5 11h3v1h-3z"/><path id="g266" d="M7 1h1v1h-1zM5 2h6v1h-6zM1 2h3v2h-3zM7 3h1v1h-1zM5 4h6v1h-6zM1 5h3v2h-3zM5 6h6v1h-6zM5 7h2v1h-2zM10 7h1v1h-1zM1 8h4v1h-4zM1 9h1v1h-1zM4 9h1v1h-1zM6 8h1v2h-1zM1 10h5v1h-5zM8 7h1v4h-1zM10 9h1v2h-1zM1 11h1v1h-1zM5 11h1v1h-1zM8 11h3v1h-3z"/><path id="g267" d="M2 1h1v1h-1zM5 1h3v1h-3zM3 2h1v1h-1zM7 2h1v3h-1zM1 5h3v1h-3zM6 5h1v2h-1zM8 5h1v2h-1zM9 7h1v1h-1zM3 6h1v3h-1zM5 7h1v2h-1zM10 8h1v1h-1zM2 9h1v1h-1zM4 9h1v1h-1zM1 10h1v1h-1zM5 10h6v1h-6z"/><path id="g268" d="M6 1h1v1h-1zM5 2h1v1h-1zM7 2h1v1h-1zM4 3h1v1h-1zM8 3h1v1h-1zM3 4h1v1h-1zM9 4h1v1h-1zM1 5h8v1h-8zM10 5h1v1h-1zM6 6h1v1h-1zM2 7h8v1h-8zM6 8h1v2h-1zM1 10h10v1h-10z"/><path id="g269" d="M3 2h1v5h-1zM8 2h1v6h-1zM7 8h1v1h-1zM6 9h2v1h-2zM4 10h3v1h-3z"/><path id="g270" d="M2 2h9v1h-9zM10 3h1v1h-1zM9 4h1v1h-1zM8 5h1v1h-1zM6 4h1v3h-1zM5 7h1v2h-1zM4 9h1v1h-1zM3 10h1v1h-1z"/><path id="g271" d="M1 2h10v2h-10zM1 4h1v1h-1zM5 4h2v1h-2zM10 4h1v1h-1zM1 5h10v1h-10zM6 6h1v1h-1zM3 7h6v1h-6zM6 8h1v1h-1zM4 9h3v1h-3zM3 10h1v1h-1zM10 6h1v5h-1zM1 6h1v6h-1zM6 10h1v2h-1zM8 11h3v1h-3z"/><path id="g272" d="M8 1h1v1h-1zM7 2h1v1h-1zM9 2h1v1h-1zM8 3h1v1h-1zM9 7h1v1h-1zM8 8h1v1h-1zM3 1h1v9h-1zM7 9h1v1h-1zM4 10h3v1h-3z"/></defs></svg>
<div class="a" style="left:0;top:0;width:1073px;height:821px;clip-path:inset(1px 1px 1px 1px round 8px)">
<div class="a" style="left:1px;top:1px;width:1071px;height:819px;background:#f0f0f0"></div>
<div class="a" style="left:1071px;top:52px;width:1px;height:767px;background:#fff"></div>
<div class="a" style="left:1px;top:819px;width:1071px;height:1px;background:#fff"></div>
<div class="a" style="left:1px;top:1px;width:1071px;height:48px;background:#fff;border-radius:8px 8px 0 0"></div>
<div class="a" style="left:1px;top:49px;width:1071px;height:2px;background:#ebebeb"></div>
<div class="a" style="left:1px;top:51px;width:1071px;height:1px;background:#fff"></div>
<div class="a" style="left:1px;top:52px;width:1px;height:767px;background:#fff"></div>
<svg class="a" style="left:8px;top:7px" width="18" height="18" viewBox="0 0 18 18"><path d="M4.2 2.6A6.2 6.2 0 1 0 12.8 2.6" stroke="#f00" stroke-width="2.2" fill="none"/><path d="M3.2 1.4A7.6 7.6 0 1 0 14 1.6" stroke="#000" stroke-width="1" stroke-dasharray="1.2 1.6" fill="none"/><path d="M5 5h1v1h-1zM10 5h1v1h-1zM6 5h1v1h-1zM11 5h1v1h-1zM7 5h1v1h-1zM12 5h1v1h-1zM5 6h1v1h-1zM10 6h1v1h-1zM8 6h1v1h-1zM13 6h1v1h-1zM5 7h1v1h-1zM10 7h1v1h-1zM6 7h1v1h-1zM11 7h1v1h-1zM7 7h1v1h-1zM12 7h1v1h-1zM5 8h1v1h-1zM10 8h1v1h-1zM7 8h1v1h-1zM13 8h1v1h-1zM5 9h1v1h-1zM10 9h1v1h-1zM11 9h1v1h-1zM12 9h1v1h-1zM8 9h1v1h-1z" stroke="#000" stroke-width="0.6" fill="#000"/></svg>
<svg class="g" style="left:31px;top:10px" width="174" height="12"><g><use href="#g0"/><use href="#g1" x="5"/><use href="#g2" x="11"/><use href="#g3" x="21"/><use href="#g4" x="27"/><use href="#g0" x="34"/><use href="#g5" x="39"/><use href="#g6" x="44"/><use href="#g7" x="50"/><use href="#g8" x="55"/><use href="#g10" x="62"/><use href="#g11" x="71"/><use href="#g12" x="77"/><use href="#g13" x="87"/><use href="#g14" x="97"/><use href="#g15" x="106"/><use href="#g16" x="115"/><use href="#g17" x="125"/><use href="#g18" x="134"/><use href="#g14" x="143"/><use href="#g19" x="152"/><use href="#g20" x="160"/><use href="#g21" x="169"/></g></svg>
<div class="a" style="left:953px;top:15px;width:10px;height:1px;background:#000"></div>
<div class="a" style="left:998px;top:10px;width:8px;height:8px;border:1px solid #000;border-radius:2px"></div>
<svg class="a" style="left:1043px;top:10px" width="11" height="11"><path d="M0.5 0.5 L10.5 10.5 M10.5 0.5 L0.5 10.5" stroke="#000" stroke-width="1"/></svg>
<svg class="a" style="left:8px;top:32px" width="16" height="16" viewBox="0 0 16 16"><defs><linearGradient id="mg" x1="0" y1="0" x2="1" y2="1"><stop offset="0" stop-color="#fff"/><stop offset="1" stop-color="#c8d8f0"/></linearGradient></defs><rect x="0" y="0" width="16" height="16" fill="url(#mg)"/><rect x="0" y="0" width="16" height="4" fill="#3d6ee0"/><rect x="1" y="1" width="14" height="1" fill="#7aa0f0"/><path d="M5.5 4V15M10.5 4V15M1 7.5H15M1 11.5H15" stroke="#a8b4c8" stroke-width="1"/><rect x="0" y="4" width="1" height="12" fill="#8090b0"/><rect x="15" y="4" width="1" height="12" fill="#1f3558"/><rect x="0" y="15" width="16" height="1" fill="#1f3558"/></svg>
<svg class="g" style="left:31px;top:34px" width="48" height="12"><g><use href="#g22"/><use href="#g23" x="8"/><use href="#g24" x="17"/><use href="#g25" x="25"/><use href="#g26" x="34"/><use href="#g27" x="38"/><use href="#g28" x="43"/><rect x="38" y="11" width="6" height="1"/></g></svg>
<svg class="g" style="left:93px;top:34px" width="48" height="12"><g><use href="#g29"/><use href="#g30" x="8"/><use href="#g18" x="17"/><use href="#g31" x="25"/><use href="#g26" x="33"/><use href="#g3" x="37"/><use href="#g28" x="43"/><rect x="37" y="11" width="6" height="1"/></g></svg>
<svg class="g" style="left:155px;top:34px" width="42" height="12"><g><use href="#g32"/><use href="#g18" x="9"/><use href="#g30" x="18"/><use href="#g26" x="27"/><use href="#g33" x="31"/><use href="#g28" x="37"/><rect x="31" y="11" width="6" height="1"/></g></svg>
<svg class="g" style="left:211px;top:34px" width="42" height="12"><g><use href="#g34"/><use href="#g18" x="9"/><use href="#g25" x="17"/><use href="#g26" x="26"/><use href="#g4" x="30"/><use href="#g28" x="36"/><rect x="30" y="11" width="6" height="1"/></g></svg>
<svg class="g" style="left:266px;top:34px" width="62" height="12"><g><use href="#g35"/><use href="#g36" x="9"/><use href="#g20" x="17"/><use href="#g37" x="26"/><use href="#g35" x="36"/><use href="#g26" x="45"/><use href="#g38" x="50"/><use href="#g28" x="56"/><rect x="50" y="11" width="6" height="1"/></g></svg>
<svg class="g" style="left:341px;top:34px" width="46" height="12"><g><use href="#g39"/><use href="#g25" x="10"/><use href="#g40" x="20"/><use href="#g26" x="29"/><use href="#g41" x="34"/><use href="#g28" x="41"/><rect x="34" y="11" width="6" height="1"/></g></svg>
<div class="a" style="left:1016px;top:33px;width:15px;height:15px;border:1px solid #e6e6e6;border-radius:2px;background:#fff"></div>
<div class="a" style="left:1035px;top:33px;width:15px;height:15px;border:1px solid #e6e6e6;border-radius:2px;background:#fff"></div>
<div class="a" style="left:1054px;top:33px;width:15px;height:15px;border:1px solid #e6e6e6;border-radius:2px;background:#fff"></div>
<div class="a" style="left:1021px;top:43px;width:7px;height:2px;background:#6b7a8c"></div>
<svg class="a" style="left:1037px;top:36px" width="12" height="12"><path d="M3.5 2.5h6v4 M1.5 5.5h6v4h-6z M3.5 1.5h6" stroke="#6b7a8c" stroke-width="1.3" fill="none"/></svg>
<svg class="a" style="left:1057px;top:37px" width="10" height="10"><path d="M1.5 1.5 L8.5 8.5 M8.5 1.5 L1.5 8.5" stroke="#6b7a8c" stroke-width="2"/></svg>
<div class="a" style="left:10px;top:63px;width:561px;height:268px;border:1px solid #fff"></div>
<div class="a" style="left:9px;top:62px;width:561px;height:268px;border:1px solid #a0a0a0"></div>
<div class="a" style="left:16px;top:61px;width:82px;height:3px;background:#f0f0f0"></div>
<svg class="g" style="left:16px;top:56px" width="84" height="12"><g><use href="#g42"/><use href="#g43" x="12"/><use href="#g44" x="24"/><use href="#g45" x="36"/><use href="#g46" x="48"/><use href="#g47" x="60"/><use href="#g48" x="72"/></g></svg>
<svg class="g" style="left:40px;top:75px" width="30" height="12"><g><use href="#g49"/><use href="#g50" x="12"/><use href="#g51" x="24"/></g></svg>
<div class="a sk" style="left:78px;top:73px;width:31px;height:18px"><div class="ski" style="width:29px;height:16px;background:#fff"></div></div>
<svg class="g" style="left:86px;top:75px" width="24" height="12"><g><use href="#g52"/><use href="#g53" x="6"/><use href="#g52" x="12"/><use href="#g52" x="18"/></g></svg>
<svg class="g" style="left:112px;top:75px" width="12" height="12"><g><use href="#g54"/></g></svg>
<div class="a sk" style="left:125px;top:73px;width:23px;height:18px"><div class="ski" style="width:21px;height:16px;background:#fff"></div></div>
<svg class="g" style="left:143px;top:75px" width="6" height="12"><g><use href="#g55"/></g></svg>
<svg class="g" style="left:151px;top:75px" width="12" height="12"><g><use href="#g56"/></g></svg>
<div class="a sk" style="left:164px;top:73px;width:22px;height:18px"><div class="ski" style="width:20px;height:16px;background:#fff"></div></div>
<svg class="g" style="left:181px;top:75px" width="6" height="12"><g><use href="#g55"/></g></svg>
<svg class="g" style="left:187px;top:75px" width="24" height="12"><g><use href="#g49"/><use href="#g57" x="12"/></g></svg>
<div class="a sk" style="left:212px;top:73px;width:31px;height:18px"><div class="ski" style="width:29px;height:16px;background:#fff"></div></div>
<svg class="g" style="left:220px;top:75px" width="24" height="12"><g><use href="#g52"/><use href="#g53" x="6"/><use href="#g52" x="12"/><use href="#g52" x="18"/></g></svg>
<svg class="g" style="left:246px;top:75px" width="12" height="12"><g><use href="#g54"/></g></svg>
<div class="a sk" style="left:259px;top:73px;width:22px;height:18px"><div class="ski" style="width:20px;height:16px;background:#fff"></div></div>
<svg class="g" style="left:276px;top:75px" width="6" height="12"><g><use href="#g58"/></g></svg>
<svg class="g" style="left:284px;top:75px" width="12" height="12"><g><use href="#g56"/></g></svg>
<div class="a sk" style="left:297px;top:73px;width:22px;height:18px"><div class="ski" style="width:20px;height:16px;background:#fff"></div></div>
<svg class="g" style="left:314px;top:75px" width="6" height="12"><g><use href="#g59"/></g></svg>
<svg class="g" style="left:322px;top:75px" width="12" height="12"><g><use href="#g49"/></g></svg>
<svg class="g" style="left:16px;top:101px" width="54" height="12"><g><use href="#g60"/><use href="#g61" x="12"/><use href="#g62" x="24"/><use href="#g63" x="36"/><use href="#g51" x="48"/></g></svg>
<div class="a sk" style="left:78px;top:98px;width:124px;height:18px"><div class="ski" style="width:122px;height:16px;background:#fff"></div></div>
<div class="a rb" style="left:185px;top:100px;width:15px;height:14px"><div class="rbi" style="width:13px;height:12px"></div></div>
<svg class="a" style="left:189px;top:105px" width="7" height="4"><path d="M0 0H7L3.5 4z" fill="#000"/></svg>
<svg class="g" style="left:81px;top:101px" width="24" height="12"><g><use href="#g64"/><use href="#g65" x="12"/></g></svg>
<svg class="g" style="left:298px;top:101px" width="42" height="12"><g><use href="#g66"/><use href="#g67" x="12"/><use href="#g62" x="24"/><use href="#g51" x="36"/></g></svg>
<div class="a sk" style="left:348px;top:98px;width:64px;height:18px"><div class="ski" style="width:62px;height:16px;background:#fff"></div></div>
<div class="a rb" style="left:395px;top:100px;width:15px;height:14px"><div class="rbi" style="width:13px;height:12px"></div></div>
<svg class="a" style="left:399px;top:105px" width="7" height="4"><path d="M0 0H7L3.5 4z" fill="#000"/></svg>
<svg class="g" style="left:21px;top:127px" width="49" height="12"><g><use href="#g68"/><use href="#g69" x="11"/><use href="#g70" x="22"/><use href="#g71" x="32"/><use href="#g51" x="43"/></g></svg>
<div class="a sk" style="left:78px;top:124px;width:60px;height:18px"><div class="ski" style="width:58px;height:16px;background:#fff"></div></div>
<div class="a rb" style="left:121px;top:126px;width:15px;height:14px"><div class="rbi" style="width:13px;height:12px"></div></div>
<svg class="a" style="left:125px;top:131px" width="7" height="4"><path d="M0 0H7L3.5 4z" fill="#000"/></svg>
<svg class="g" style="left:310px;top:127px" width="30" height="12"><g><use href="#g72"/><use href="#g73" x="12"/><use href="#g51" x="24"/></g></svg>
<div class="a sk" style="left:348px;top:124px;width:31px;height:18px"><div class="ski" style="width:29px;height:16px;background:#fff"></div></div>
<svg class="g" style="left:386px;top:126px" width="6" height="12"><g><use href="#g74"/></g></svg>
<div class="a sk" style="left:476px;top:126px;width:11px;height:11px"><div class="ski" style="width:9px;height:9px;background:#fff"></div></div>
<svg class="g" style="left:493px;top:125px" width="48" height="12"><g><use href="#g75"/><use href="#g76" x="12"/><use href="#g77" x="24"/><use href="#g78" x="36"/></g></svg>
<svg class="g" style="left:16px;top:153px" width="54" height="12"><g><use href="#g67"/><use href="#g62" x="12"/><use href="#g79" x="24"/><use href="#g80" x="36"/><use href="#g51" x="48"/></g></svg>
<div class="a sk" style="left:78px;top:153px;width:11px;height:11px"><div class="ski" style="width:9px;height:9px;background:#fff"></div></div>
<svg class="a" style="left:78px;top:153px" width="13" height="13"><path d="M3 5.5 L5.2 8 L10 3" stroke="#000" stroke-width="2" fill="none"/></svg>
<svg class="g" style="left:95px;top:153px" width="12" height="12"><g><use href="#g81"/></g></svg>
<div class="a sk" style="left:126px;top:153px;width:11px;height:11px"><div class="ski" style="width:9px;height:9px;background:#fff"></div></div>
<svg class="a" style="left:126px;top:153px" width="13" height="13"><path d="M3 5.5 L5.2 8 L10 3" stroke="#000" stroke-width="2" fill="none"/></svg>
<svg class="g" style="left:142px;top:153px" width="24" height="12"><g><use href="#g82"/><use href="#g83" x="12"/></g></svg>
<div class="a sk" style="left:174px;top:153px;width:11px;height:11px"><div class="ski" style="width:9px;height:9px;background:#fff"></div></div>
<svg class="a" style="left:174px;top:153px" width="13" height="13"><path d="M3 5.5 L5.2 8 L10 3" stroke="#000" stroke-width="2" fill="none"/></svg>
<svg class="g" style="left:190px;top:153px" width="12" height="12"><g><use href="#g83"/></g></svg>
<div class="a sk" style="left:222px;top:153px;width:11px;height:11px"><div class="ski" style="width:9px;height:9px;background:#fff"></div></div>
<svg class="a" style="left:222px;top:153px" width="13" height="13"><path d="M3 5.5 L5.2 8 L10 3" stroke="#000" stroke-width="2" fill="none"/></svg>
<svg class="g" style="left:239px;top:153px" width="24" height="12"><g><use href="#g84"/><use href="#g81" x="12"/></g></svg>
<svg class="g" style="left:286px;top:153px" width="54" height="12"><g><use href="#g66"/><use href="#g85" x="12"/><use href="#g86" x="24"/><use href="#g87" x="36"/><use href="#g51" x="48"/></g></svg>
<div class="a sk" style="left:348px;top:150px;width:114px;height:18px"><div class="ski" style="width:112px;height:16px;background:#fff"></div></div>
<div class="a rb" style="left:445px;top:152px;width:15px;height:14px"><div class="rbi" style="width:13px;height:12px"></div></div>
<svg class="a" style="left:449px;top:157px" width="7" height="4"><path d="M0 0H7L3.5 4z" fill="#000"/></svg>
<svg class="g" style="left:16px;top:179px" width="54" height="12"><g><use href="#g66"/><use href="#g85" x="12"/><use href="#g47" x="24"/><use href="#g48" x="36"/><use href="#g51" x="48"/></g></svg>
<div class="a sk" style="left:78px;top:176px;width:107px;height:18px"><div class="ski" style="width:105px;height:16px;background:#fff"></div></div>
<div class="a rb" style="left:168px;top:178px;width:15px;height:14px"><div class="rbi" style="width:13px;height:12px"></div></div>
<svg class="a" style="left:172px;top:183px" width="7" height="4"><path d="M0 0H7L3.5 4z" fill="#000"/></svg>
<svg class="g" style="left:286px;top:179px" width="54" height="12"><g><use href="#g83"/><use href="#g88" x="12"/><use href="#g86" x="24"/><use href="#g87" x="36"/><use href="#g51" x="48"/></g></svg>
<div class="a sk" style="left:348px;top:176px;width:64px;height:18px"><div class="ski" style="width:62px;height:16px;background:#fff"></div></div>
<div class="a rb" style="left:395px;top:178px;width:15px;height:14px"><div class="rbi" style="width:13px;height:12px"></div></div>
<svg class="a" style="left:399px;top:183px" width="7" height="4"><path d="M0 0H7L3.5 4z" fill="#000"/></svg>
<svg class="g" style="left:40px;top:204px" width="30" height="12"><g><use href="#g89"/><use href="#g90" x="12"/><use href="#g51" x="24"/></g></svg>
<div class="a sk" style="left:78px;top:201px;width:25px;height:18px"><div class="ski" style="width:23px;height:16px;background:#fff"></div></div>
<svg class="g" style="left:109px;top:204px" width="12" height="12"><g><use href="#g89"/></g></svg>
<div class="a sk" style="left:218px;top:205px;width:11px;height:11px"><div class="ski" style="width:9px;height:9px;background:#fff"></div></div>
<svg class="g" style="left:235px;top:205px" width="48" height="12"><g><use href="#g75"/><use href="#g76" x="12"/><use href="#g77" x="24"/><use href="#g78" x="36"/></g></svg>
<svg class="g" style="left:296px;top:204px" width="44" height="12"><g><use href="#g42"/><use href="#g43" x="13"/><use href="#g44" x="25"/><use href="#g51" x="38"/></g></svg>
<div class="a sk" style="left:348px;top:201px;width:25px;height:18px"><div class="ski" style="width:23px;height:16px;background:#fff"></div></div>
<svg class="g" style="left:379px;top:204px" width="18" height="12"><g><use href="#g91"/><use href="#g57" x="6"/></g></svg>
<div class="a sk" style="left:420px;top:201px;width:25px;height:18px"><div class="ski" style="width:23px;height:16px;background:#fff"></div></div>
<svg class="g" style="left:452px;top:204px" width="6" height="12"><g><use href="#g91"/></g></svg>
<svg class="g" style="left:35px;top:230px" width="36" height="12"><g><use href="#g92"/><use href="#g93" x="12"/><use href="#g94" x="24"/></g></svg>
<div class="a sk" style="left:78px;top:227px;width:25px;height:18px"><div class="ski" style="width:23px;height:16px;background:#fff"></div></div>
<svg class="g" style="left:110px;top:230px" width="31" height="12"><g><use href="#g95"/><use href="#g96" x="6"/><use href="#g97" x="19"/></g></svg>
<div class="a sk" style="left:218px;top:231px;width:11px;height:11px"><div class="ski" style="width:9px;height:9px;background:#fff"></div></div>
<svg class="g" style="left:235px;top:231px" width="48" height="12"><g><use href="#g75"/><use href="#g76" x="12"/><use href="#g77" x="24"/><use href="#g78" x="36"/></g></svg>
<svg class="g" style="left:16px;top:256px" width="54" height="12"><g><use href="#g98"/><use href="#g99" x="12"/><use href="#g85" x="24"/><use href="#g94" x="36"/><use href="#g51" x="48"/></g></svg>
<div class="a sk" style="left:78px;top:253px;width:25px;height:18px"><div class="ski" style="width:23px;height:16px;background:#fff"></div></div>
<svg class="g" style="left:110px;top:256px" width="31" height="12"><g><use href="#g95"/><use href="#g96" x="6"/><use href="#g97" x="19"/></g></svg>
<div class="a sk" style="left:218px;top:257px;width:11px;height:11px"><div class="ski" style="width:9px;height:9px;background:#fff"></div></div>
<svg class="g" style="left:235px;top:257px" width="48" height="12"><g><use href="#g75"/><use href="#g76" x="12"/><use href="#g77" x="24"/><use href="#g78" x="36"/></g></svg>
<svg class="g" style="left:295px;top:256px" width="54" height="12"><g><use href="#g100"/><use href="#g101" x="12"/><use href="#g102" x="24"/><use href="#g94" x="36"/><use href="#g51" x="48"/></g></svg>
<div class="a sk" style="left:357px;top:253px;width:25px;height:18px"><div class="ski" style="width:23px;height:16px;background:#fff"></div></div>
<svg class="g" style="left:389px;top:256px" width="31" height="12"><g><use href="#g95"/><use href="#g96" x="6"/><use href="#g97" x="19"/></g></svg>
<div class="a sk" style="left:497px;top:257px;width:11px;height:11px"><div class="ski" style="width:9px;height:9px;background:#fff"></div></div>
<svg class="g" style="left:514px;top:257px" width="48" height="12"><g><use href="#g75"/><use href="#g76" x="12"/><use href="#g77" x="24"/><use href="#g78" x="36"/></g></svg>
<svg class="g" style="left:13px;top:282px" width="57" height="12"><g><use href="#g98"/><use href="#g103" x="13"/><use href="#g104" x="19"/><use href="#g105" x="26"/><use href="#g106" x="32"/><use href="#g94" x="38"/><use href="#g51" x="51"/></g></svg>
<div class="a sk" style="left:78px;top:279px;width:25px;height:18px"><div class="ski" style="width:23px;height:16px;background:#fff"></div></div>
<svg class="g" style="left:110px;top:282px" width="31" height="12"><g><use href="#g95"/><use href="#g96" x="6"/><use href="#g97" x="19"/></g></svg>
<div class="a sk" style="left:218px;top:283px;width:11px;height:11px"><div class="ski" style="width:9px;height:9px;background:#fff"></div></div>
<svg class="g" style="left:235px;top:283px" width="48" height="12"><g><use href="#g75"/><use href="#g76" x="12"/><use href="#g77" x="24"/><use href="#g78" x="36"/></g></svg>
<svg class="g" style="left:295px;top:282px" width="54" height="12"><g><use href="#g98"/><use href="#g72" x="12"/><use href="#g73" x="24"/><use href="#g94" x="36"/><use href="#g51" x="48"/></g></svg>
<div class="a sk" style="left:357px;top:279px;width:25px;height:18px"><div class="ski" style="width:23px;height:16px;background:#fff"></div></div>
<svg class="g" style="left:389px;top:282px" width="31" height="12"><g><use href="#g95"/><use href="#g96" x="6"/><use href="#g97" x="19"/></g></svg>
<div class="a sk" style="left:497px;top:283px;width:11px;height:11px"><div class="ski" style="width:9px;height:9px;background:#fff"></div></div>
<svg class="g" style="left:514px;top:283px" width="48" height="12"><g><use href="#g75"/><use href="#g76" x="12"/><use href="#g77" x="24"/><use href="#g78" x="36"/></g></svg>
<svg class="g" style="left:16px;top:307px" width="54" height="12"><g><use href="#g98"/><use href="#g107" x="14"/><use href="#g108" x="21"/><use href="#g109" x="27"/><use href="#g94" x="34"/><use href="#g51" x="48"/></g></svg>
<div class="a sk" style="left:78px;top:304px;width:25px;height:18px"><div class="ski" style="width:23px;height:16px;background:#fff"></div></div>
<svg class="g" style="left:110px;top:307px" width="31" height="12"><g><use href="#g95"/><use href="#g96" x="6"/><use href="#g97" x="19"/></g></svg>
<div class="a sk" style="left:218px;top:308px;width:11px;height:11px"><div class="ski" style="width:9px;height:9px;background:#fff"></div></div>
<svg class="g" style="left:235px;top:308px" width="48" height="12"><g><use href="#g75"/><use href="#g76" x="12"/><use href="#g77" x="24"/><use href="#g78" x="36"/></g></svg>
<svg class="g" style="left:295px;top:307px" width="54" height="12"><g><use href="#g98"/><use href="#g79" x="12"/><use href="#g80" x="24"/><use href="#g94" x="36"/><use href="#g51" x="48"/></g></svg>
<div class="a sk" style="left:357px;top:304px;width:25px;height:18px"><div class="ski" style="width:23px;height:16px;background:#fff"></div></div>
<svg class="g" style="left:389px;top:307px" width="31" height="12"><g><use href="#g95"/><use href="#g96" x="6"/><use href="#g97" x="19"/></g></svg>
<div class="a sk" style="left:497px;top:308px;width:11px;height:11px"><div class="ski" style="width:9px;height:9px;background:#fff"></div></div>
<svg class="g" style="left:514px;top:308px" width="48" height="12"><g><use href="#g75"/><use href="#g76" x="12"/><use href="#g77" x="24"/><use href="#g78" x="36"/></g></svg>
<div class="a" style="left:10px;top:341px;width:314px;height:28px;border:1px solid #fff"></div>
<div class="a" style="left:9px;top:340px;width:314px;height:28px;border:1px solid #a0a0a0"></div>
<div class="a" style="left:16px;top:339px;width:154px;height:3px;background:#f0f0f0"></div>
<svg class="g" style="left:16px;top:334px" width="154" height="12"><g><use href="#g110"/><use href="#g111" x="11"/><use href="#g112" x="22"/><use href="#g42" x="33"/><use href="#g43" x="44"/><use href="#g110" x="55"/><use href="#g113" x="66"/><use href="#g114" x="76"/><use href="#g67" x="87"/><use href="#g115" x="98"/><use href="#g116" x="109"/><use href="#g117" x="120"/><use href="#g118" x="131"/><use href="#g119" x="142"/></g></svg>
<svg class="a" style="left:18px;top:351px" width="12" height="12" viewBox="0 0 12 12"><circle cx="6" cy="6" r="4.5" fill="#fff"/><path d="M9.89 2.11A5.5 5.5 0 0 0 2.11 9.89" stroke="#a0a0a0" stroke-width="1" fill="none"/><path d="M2.11 9.89A5.5 5.5 0 0 0 9.89 2.11" stroke="#fff" stroke-width="1" fill="none"/><path d="M9.18 2.82A4.5 4.5 0 0 0 2.82 9.18" stroke="#696969" stroke-width="1" fill="none"/><path d="M2.82 9.18A4.5 4.5 0 0 0 9.18 2.82" stroke="#e3e3e3" stroke-width="1" fill="none"/><circle cx="6" cy="6" r="2" fill="#000"/></svg>
<svg class="g" style="left:34px;top:351px" width="24" height="12"><g><use href="#g120"/><use href="#g121" x="12"/></g></svg>
<svg class="a" style="left:95px;top:351px" width="12" height="12" viewBox="0 0 12 12"><circle cx="6" cy="6" r="4.5" fill="#fff"/><path d="M9.89 2.11A5.5 5.5 0 0 0 2.11 9.89" stroke="#a0a0a0" stroke-width="1" fill="none"/><path d="M2.11 9.89A5.5 5.5 0 0 0 9.89 2.11" stroke="#fff" stroke-width="1" fill="none"/><path d="M9.18 2.82A4.5 4.5 0 0 0 2.82 9.18" stroke="#696969" stroke-width="1" fill="none"/><path d="M2.82 9.18A4.5 4.5 0 0 0 9.18 2.82" stroke="#e3e3e3" stroke-width="1" fill="none"/></svg>
<svg class="g" style="left:110px;top:351px" width="24" height="12"><g><use href="#g122"/><use href="#g123" x="12"/></g></svg>
<svg class="a" style="left:171px;top:351px" width="12" height="12" viewBox="0 0 12 12"><circle cx="6" cy="6" r="4.5" fill="#fff"/><path d="M9.89 2.11A5.5 5.5 0 0 0 2.11 9.89" stroke="#a0a0a0" stroke-width="1" fill="none"/><path d="M2.11 9.89A5.5 5.5 0 0 0 9.89 2.11" stroke="#fff" stroke-width="1" fill="none"/><path d="M9.18 2.82A4.5 4.5 0 0 0 2.82 9.18" stroke="#696969" stroke-width="1" fill="none"/><path d="M2.82 9.18A4.5 4.5 0 0 0 9.18 2.82" stroke="#e3e3e3" stroke-width="1" fill="none"/></svg>
<svg class="g" style="left:187px;top:351px" width="18" height="12"><g><use href="#g124"/><use href="#g125" x="6"/><use href="#g126" x="12"/></g></svg>
<svg class="a" style="left:246px;top:351px" width="12" height="12" viewBox="0 0 12 12"><circle cx="6" cy="6" r="4.5" fill="#fff"/><path d="M9.89 2.11A5.5 5.5 0 0 0 2.11 9.89" stroke="#a0a0a0" stroke-width="1" fill="none"/><path d="M2.11 9.89A5.5 5.5 0 0 0 9.89 2.11" stroke="#fff" stroke-width="1" fill="none"/><path d="M9.18 2.82A4.5 4.5 0 0 0 2.82 9.18" stroke="#696969" stroke-width="1" fill="none"/><path d="M2.82 9.18A4.5 4.5 0 0 0 9.18 2.82" stroke="#e3e3e3" stroke-width="1" fill="none"/></svg>
<svg class="g" style="left:262px;top:351px" width="56" height="12"><g><use href="#g127"/><use href="#g128" x="7"/><use href="#g108" x="14"/><use href="#g129" x="21"/><use href="#g108" x="29"/><use href="#g130" x="36"/><use href="#g131" x="43"/><use href="#g132" x="50"/></g></svg>
<div class="a bt" style="left:332px;top:341px;width:231px;height:27px"></div>
<svg class="g" style="left:412px;top:348px" width="72" height="12"><g><use href="#g133"/><use href="#g134" x="12"/><use href="#g67" x="24"/><use href="#g135" x="36"/><use href="#g136" x="48"/><use href="#g78" x="60"/></g></svg>
<div class="a" style="left:10px;top:381px;width:61px;height:57px;border:1px solid #fff"></div>
<div class="a" style="left:9px;top:380px;width:61px;height:57px;border:1px solid #a0a0a0"></div>
<div class="a" style="left:16px;top:379px;width:49px;height:3px;background:#f0f0f0"></div>
<svg class="g" style="left:16px;top:374px" width="50" height="12"><g><use href="#g137"/><use href="#g138" x="13"/><use href="#g139" x="25"/><use href="#g105" x="31"/><use href="#g109" x="38"/><use href="#g140" x="44"/></g></svg>
<svg class="a" style="left:18px;top:393px" width="12" height="12" viewBox="0 0 12 12"><circle cx="6" cy="6" r="4.5" fill="#fff"/><path d="M9.89 2.11A5.5 5.5 0 0 0 2.11 9.89" stroke="#a0a0a0" stroke-width="1" fill="none"/><path d="M2.11 9.89A5.5 5.5 0 0 0 9.89 2.11" stroke="#fff" stroke-width="1" fill="none"/><path d="M9.18 2.82A4.5 4.5 0 0 0 2.82 9.18" stroke="#696969" stroke-width="1" fill="none"/><path d="M2.82 9.18A4.5 4.5 0 0 0 9.18 2.82" stroke="#e3e3e3" stroke-width="1" fill="none"/><circle cx="6" cy="6" r="2" fill="#000"/></svg>
<svg class="g" style="left:36px;top:393px" width="24" height="12"><g><use href="#g141"/><use href="#g142" x="9"/><use href="#g143" x="18"/></g></svg>
<svg class="a" style="left:18px;top:416px" width="12" height="12" viewBox="0 0 12 12"><circle cx="6" cy="6" r="4.5" fill="#fff"/><path d="M9.89 2.11A5.5 5.5 0 0 0 2.11 9.89" stroke="#a0a0a0" stroke-width="1" fill="none"/><path d="M2.11 9.89A5.5 5.5 0 0 0 9.89 2.11" stroke="#fff" stroke-width="1" fill="none"/><path d="M9.18 2.82A4.5 4.5 0 0 0 2.82 9.18" stroke="#696969" stroke-width="1" fill="none"/><path d="M2.82 9.18A4.5 4.5 0 0 0 9.18 2.82" stroke="#e3e3e3" stroke-width="1" fill="none"/></svg>
<svg class="g" style="left:34px;top:416px" width="24" height="12"><g><use href="#g144"/><use href="#g145" x="12"/></g></svg>
<div class="a" style="left:80px;top:381px;width:491px;height:57px;border:1px solid #fff"></div>
<div class="a" style="left:79px;top:380px;width:491px;height:57px;border:1px solid #a0a0a0"></div>
<div class="a" style="left:86px;top:379px;width:117px;height:3px;background:#f0f0f0"></div>
<svg class="g" style="left:86px;top:374px" width="116" height="12"><g><use href="#g55"/><use href="#g53" x="6"/><use href="#g119" x="12"/><use href="#g146" x="23"/><use href="#g144" x="35"/><use href="#g147" x="46"/><use href="#g148" x="58"/><use href="#g70" x="69"/><use href="#g149" x="81"/><use href="#g136" x="92"/><use href="#g78" x="104"/></g></svg>
<svg class="a" style="left:88px;top:394px" width="12" height="12" viewBox="0 0 12 12"><circle cx="6" cy="6" r="4.5" fill="#fff"/><path d="M9.89 2.11A5.5 5.5 0 0 0 2.11 9.89" stroke="#a0a0a0" stroke-width="1" fill="none"/><path d="M2.11 9.89A5.5 5.5 0 0 0 9.89 2.11" stroke="#fff" stroke-width="1" fill="none"/><path d="M9.18 2.82A4.5 4.5 0 0 0 2.82 9.18" stroke="#696969" stroke-width="1" fill="none"/><path d="M2.82 9.18A4.5 4.5 0 0 0 9.18 2.82" stroke="#e3e3e3" stroke-width="1" fill="none"/><circle cx="6" cy="6" r="2" fill="#000"/></svg>
<svg class="g" style="left:104px;top:393px" width="58" height="12"><g><use href="#g137"/><use href="#g138" x="12"/><use href="#g123" x="23"/><use href="#g150" x="34"/><use href="#g151" x="46"/></g></svg>
<svg class="a" style="left:168px;top:394px" width="12" height="12" viewBox="0 0 12 12"><circle cx="6" cy="6" r="4.5" fill="#fff"/><path d="M9.89 2.11A5.5 5.5 0 0 0 2.11 9.89" stroke="#a0a0a0" stroke-width="1" fill="none"/><path d="M2.11 9.89A5.5 5.5 0 0 0 9.89 2.11" stroke="#fff" stroke-width="1" fill="none"/><path d="M9.18 2.82A4.5 4.5 0 0 0 2.82 9.18" stroke="#696969" stroke-width="1" fill="none"/><path d="M2.82 9.18A4.5 4.5 0 0 0 9.18 2.82" stroke="#e3e3e3" stroke-width="1" fill="none"/></svg>
<svg class="g" style="left:184px;top:393px" width="45" height="12"><g><use href="#g152"/><use href="#g153" x="7"/><use href="#g154" x="20"/><use href="#g155" x="33"/></g></svg>
<div class="a sk" style="left:231px;top:390px;width:26px;height:17px"><div class="ski" style="width:24px;height:15px;background:#fff"></div></div>
<svg class="g" style="left:236px;top:391px" width="20" height="12"><g fill="#a0a0a0"><use href="#g52"/><use href="#g53" x="6"/><use href="#g156" x="12"/><use href="#g53" x="14"/></g></svg>
<svg class="g" style="left:262px;top:393px" width="12" height="12"><g><use href="#g153"/></g></svg>
<svg class="a" style="left:88px;top:417px" width="12" height="12" viewBox="0 0 12 12"><circle cx="6" cy="6" r="4.5" fill="#fff"/><path d="M9.89 2.11A5.5 5.5 0 0 0 2.11 9.89" stroke="#a0a0a0" stroke-width="1" fill="none"/><path d="M2.11 9.89A5.5 5.5 0 0 0 9.89 2.11" stroke="#fff" stroke-width="1" fill="none"/><path d="M9.18 2.82A4.5 4.5 0 0 0 2.82 9.18" stroke="#696969" stroke-width="1" fill="none"/><path d="M2.82 9.18A4.5 4.5 0 0 0 9.18 2.82" stroke="#e3e3e3" stroke-width="1" fill="none"/></svg>
<div class="a sk" style="left:105px;top:412px;width:33px;height:17px"><div class="ski" style="width:31px;height:15px;background:#fff"></div></div>
<svg class="g" style="left:110px;top:413px" width="30" height="12"><g fill="#a0a0a0"><use href="#g55"/><use href="#g53" x="6"/><use href="#g53" x="12"/><use href="#g53" x="18"/><use href="#g53" x="24"/></g></svg>
<svg class="g" style="left:146px;top:415px" width="24" height="12"><g><use href="#g61"/><use href="#g64" x="12"/></g></svg>
<svg class="g" style="left:178px;top:415px" width="60" height="12"><g><use href="#g157"/><use href="#g158" x="12"/><use href="#g159" x="24"/><use href="#g151" x="36"/><use href="#g160" x="48"/></g></svg>
<div class="a sk" style="left:241px;top:411px;width:26px;height:17px"><div class="ski" style="width:24px;height:15px;background:#fff"></div></div>
<svg class="g" style="left:254px;top:412px" width="12" height="12"><g fill="#a0a0a0"><use href="#g52"/><use href="#g53" x="6"/></g></svg>
<svg class="g" style="left:273px;top:415px" width="38" height="12"><g><use href="#g61"/><use href="#g161" x="13"/><use href="#g162" x="26"/></g></svg>
<div class="a" style="left:320px;top:391px;width:245px;height:42px;border:1px solid #fff"></div>
<div class="a" style="left:319px;top:390px;width:245px;height:42px;border:1px solid #a0a0a0"></div>
<div class="a" style="left:326px;top:389px;width:94px;height:3px;background:#f0f0f0"></div>
<svg class="g" style="left:326px;top:384px" width="94" height="12"><g><use href="#g163"/><use href="#g164" x="12"/><use href="#g165" x="23"/><use href="#g166" x="35"/><use href="#g167" x="47"/><use href="#g168" x="59"/><use href="#g43" x="70"/><use href="#g169" x="82"/></g></svg>
<div class="a bt" style="left:325px;top:401px;width:48px;height:23px"></div>
<svg class="g" style="left:331px;top:406px" width="38" height="12"><g fill="#a0a0a0"><use href="#g170"/><use href="#g163" x="13"/><use href="#g164" x="26"/></g></svg>
<svg class="g" style="left:386px;top:394px" width="63" height="12"><g><use href="#g171"/><use href="#g78" x="11"/><use href="#g148" x="23"/><use href="#g70" x="34"/><use href="#g149" x="46"/><use href="#g51" x="57"/></g></svg>
<div class="a sk" style="left:453px;top:391px;width:34px;height:17px"><div class="ski" style="width:32px;height:15px;background:#fff"></div></div>
<svg class="g" style="left:466px;top:392px" width="20" height="12"><g fill="#a0a0a0"><use href="#g55"/><use href="#g53" x="6"/><use href="#g156" x="12"/><use href="#g53" x="14"/></g></svg>
<div class="a sk" style="left:489px;top:391px;width:34px;height:17px"><div class="ski" style="width:32px;height:15px;background:#fff"></div></div>
<svg class="g" style="left:496px;top:392px" width="26" height="12"><g fill="#a0a0a0"><use href="#g55"/><use href="#g53" x="6"/><use href="#g53" x="12"/><use href="#g156" x="18"/><use href="#g53" x="20"/></g></svg>
<div class="a sk" style="left:525px;top:391px;width:34px;height:17px"><div class="ski" style="width:32px;height:15px;background:#fff"></div></div>
<svg class="g" style="left:534px;top:392px" width="24" height="12"><g fill="#a0a0a0"><use href="#g55"/><use href="#g53" x="6"/><use href="#g53" x="12"/><use href="#g53" x="18"/></g></svg>
<svg class="g" style="left:375px;top:415px" width="74" height="12"><g><use href="#g55"/><use href="#g53" x="6"/><use href="#g119" x="11"/><use href="#g146" x="23"/><use href="#g148" x="34"/><use href="#g70" x="45"/><use href="#g149" x="57"/><use href="#g51" x="68"/></g></svg>
<div class="a sk" style="left:453px;top:412px;width:34px;height:17px"><div class="ski" style="width:32px;height:15px;background:#fff"></div></div>
<div class="a sk" style="left:489px;top:412px;width:34px;height:17px"><div class="ski" style="width:32px;height:15px;background:#fff"></div></div>
<div class="a sk" style="left:525px;top:412px;width:34px;height:17px"><div class="ski" style="width:32px;height:15px;background:#fff"></div></div>
<div class="a" style="left:10px;top:445px;width:177px;height:24px;border:1px solid #fff"></div>
<div class="a" style="left:9px;top:444px;width:177px;height:24px;border:1px solid #a0a0a0"></div>
<div class="a sk" style="left:18px;top:451px;width:11px;height:11px"><div class="ski" style="width:9px;height:9px;background:#f0f0f0"></div></div>
<svg class="a" style="left:18px;top:451px" width="13" height="13"><path d="M3 5.5 L5.2 8 L10 3" stroke="#a0a0a0" stroke-width="2" fill="none"/></svg>
<svg class="g" style="left:35px;top:450px" width="98" height="12"><g fill="#a0a0a0"><use href="#g172"/><use href="#g173" x="12"/><use href="#g162" x="25"/><use href="#g174" x="37"/><use href="#g175" x="49"/><use href="#g176" x="61"/><use href="#g137" x="74"/><use href="#g138" x="86"/></g></svg>
<div class="a" style="left:213px;top:445px;width:358px;height:24px;border:1px solid #fff"></div>
<div class="a" style="left:212px;top:444px;width:358px;height:24px;border:1px solid #a0a0a0"></div>
<div class="a" style="left:219px;top:443px;width:50px;height:3px;background:#f0f0f0"></div>
<svg class="g" style="left:219px;top:438px" width="50" height="12"><g><use href="#g177"/><use href="#g163" x="13"/><use href="#g178" x="25"/><use href="#g179" x="38"/></g></svg>
<svg class="a" style="left:221px;top:454px" width="12" height="12" viewBox="0 0 12 12"><circle cx="6" cy="6" r="4.5" fill="#fff"/><path d="M9.89 2.11A5.5 5.5 0 0 0 2.11 9.89" stroke="#a0a0a0" stroke-width="1" fill="none"/><path d="M2.11 9.89A5.5 5.5 0 0 0 9.89 2.11" stroke="#fff" stroke-width="1" fill="none"/><path d="M9.18 2.82A4.5 4.5 0 0 0 2.82 9.18" stroke="#696969" stroke-width="1" fill="none"/><path d="M2.82 9.18A4.5 4.5 0 0 0 9.18 2.82" stroke="#e3e3e3" stroke-width="1" fill="none"/></svg>
<svg class="g" style="left:236px;top:453px" width="38" height="12"><g><use href="#g163"/><use href="#g135" x="13"/><use href="#g180" x="26"/></g></svg>
<svg class="a" style="left:308px;top:454px" width="12" height="12" viewBox="0 0 12 12"><circle cx="6" cy="6" r="4.5" fill="#fff"/><path d="M9.89 2.11A5.5 5.5 0 0 0 2.11 9.89" stroke="#a0a0a0" stroke-width="1" fill="none"/><path d="M2.11 9.89A5.5 5.5 0 0 0 9.89 2.11" stroke="#fff" stroke-width="1" fill="none"/><path d="M9.18 2.82A4.5 4.5 0 0 0 2.82 9.18" stroke="#696969" stroke-width="1" fill="none"/><path d="M2.82 9.18A4.5 4.5 0 0 0 9.18 2.82" stroke="#e3e3e3" stroke-width="1" fill="none"/></svg>
<svg class="g" style="left:323px;top:453px" width="37" height="12"><g><use href="#g181"/><use href="#g108" x="8"/><use href="#g109" x="17"/><use href="#g182" x="25"/></g></svg>
<svg class="a" style="left:396px;top:454px" width="12" height="12" viewBox="0 0 12 12"><circle cx="6" cy="6" r="4.5" fill="#fff"/><path d="M9.89 2.11A5.5 5.5 0 0 0 2.11 9.89" stroke="#a0a0a0" stroke-width="1" fill="none"/><path d="M2.11 9.89A5.5 5.5 0 0 0 9.89 2.11" stroke="#fff" stroke-width="1" fill="none"/><path d="M9.18 2.82A4.5 4.5 0 0 0 2.82 9.18" stroke="#696969" stroke-width="1" fill="none"/><path d="M2.82 9.18A4.5 4.5 0 0 0 9.18 2.82" stroke="#e3e3e3" stroke-width="1" fill="none"/><circle cx="6" cy="6" r="2" fill="#000"/></svg>
<svg class="g" style="left:410px;top:453px" width="24" height="12"><g><use href="#g49"/><use href="#g182" x="12"/></g></svg>
<svg class="a" style="left:483px;top:454px" width="12" height="12" viewBox="0 0 12 12"><circle cx="6" cy="6" r="4.5" fill="#fff"/><path d="M9.89 2.11A5.5 5.5 0 0 0 2.11 9.89" stroke="#a0a0a0" stroke-width="1" fill="none"/><path d="M2.11 9.89A5.5 5.5 0 0 0 9.89 2.11" stroke="#fff" stroke-width="1" fill="none"/><path d="M9.18 2.82A4.5 4.5 0 0 0 2.82 9.18" stroke="#696969" stroke-width="1" fill="none"/><path d="M2.82 9.18A4.5 4.5 0 0 0 9.18 2.82" stroke="#e3e3e3" stroke-width="1" fill="none"/></svg>
<svg class="g" style="left:497px;top:453px" width="24" height="12"><g><use href="#g56"/><use href="#g182" x="12"/></g></svg>
<div class="a" style="left:580px;top:63px;width:469px;height:224px;border:1px solid #fff"></div>
<div class="a" style="left:579px;top:62px;width:469px;height:224px;border:1px solid #a0a0a0"></div>
<div class="a" style="left:586px;top:61px;width:88px;height:3px;background:#f0f0f0"></div>
<svg class="g" style="left:586px;top:56px" width="88" height="12"><g><use href="#g159"/><use href="#g151" x="13"/><use href="#g160" x="25"/><use href="#g183" x="38"/><use href="#g99" x="51"/><use href="#g47" x="63"/><use href="#g48" x="76"/></g></svg>
<svg class="g" style="left:586px;top:80px" width="54" height="12"><g><use href="#g67"/><use href="#g115" x="12"/><use href="#g86" x="24"/><use href="#g184" x="36"/><use href="#g51" x="48"/></g></svg>
<div class="a sk" style="left:645px;top:77px;width:59px;height:18px"><div class="ski" style="width:57px;height:16px;background:#fff"></div></div>
<div class="a rb" style="left:687px;top:79px;width:15px;height:14px"><div class="rbi" style="width:13px;height:12px"></div></div>
<svg class="a" style="left:691px;top:84px" width="7" height="4"><path d="M0 0H7L3.5 4z" fill="#000"/></svg>
<svg class="g" style="left:648px;top:80px" width="32" height="12"><g><use href="#g185"/><use href="#g167" x="10"/><use href="#g186" x="20"/></g></svg>
<div class="a sk" style="left:585px;top:104px;width:11px;height:11px"><div class="ski" style="width:9px;height:9px;background:#fff"></div></div>
<svg class="g" style="left:602px;top:103px" width="107" height="12"><g><use href="#g187"/><use href="#g138" x="12"/><use href="#g67" x="24"/><use href="#g115" x="36"/><use href="#g176" x="48"/><use href="#g188" x="59"/><use href="#g138" x="71"/><use href="#g189" x="83"/><use href="#g190" x="95"/></g></svg>
<svg class="g" style="left:584px;top:123px" width="120" height="12"><g><use href="#g191"/><use href="#g141" x="6"/><use href="#g142" x="13"/><use href="#g143" x="19"/><use href="#g139" x="25"/><use href="#g105" x="32"/><use href="#g109" x="38"/><use href="#g140" x="44"/><use href="#g137" x="51"/><use href="#g138" x="63"/><use href="#g192" x="76"/><use href="#g135" x="89"/><use href="#g180" x="101"/><use href="#g193" x="114"/></g></svg>
<div class="a" style="left:713px;top:71px;width:332px;height:52px;border:1px solid #fff"></div>
<div class="a" style="left:712px;top:70px;width:332px;height:52px;border:1px solid #a0a0a0"></div>
<div class="a" style="left:718px;top:69px;width:38px;height:3px;background:#f0f0f0"></div>
<svg class="g" style="left:718px;top:64px" width="38" height="12"><g><use href="#g194"/><use href="#g64" x="13"/><use href="#g94" x="26"/></g></svg>
<svg class="g" style="left:764px;top:80px" width="42" height="12"><g fill="#a0a0a0"><use href="#g194"/><use href="#g64" x="12"/><use href="#g94" x="24"/><use href="#g51" x="36"/></g></svg>
<div class="a sk" style="left:813px;top:76px;width:39px;height:18px"><div class="ski" style="width:37px;height:16px;background:#fff"></div></div>
<svg class="g" style="left:857px;top:80px" width="31" height="12"><g fill="#a0a0a0"><use href="#g95"/><use href="#g96" x="6"/><use href="#g97" x="19"/></g></svg>
<div class="a sk" style="left:973px;top:80px;width:11px;height:11px"><div class="ski" style="width:9px;height:9px;background:#f0f0f0"></div></div>
<svg class="g" style="left:990px;top:79px" width="48" height="12"><g fill="#a0a0a0"><use href="#g75"/><use href="#g76" x="12"/><use href="#g77" x="24"/><use href="#g78" x="36"/></g></svg>
<div class="a sk" style="left:719px;top:103px;width:11px;height:11px"><div class="ski" style="width:9px;height:9px;background:#fff"></div></div>
<svg class="a" style="left:719px;top:103px" width="13" height="13"><path d="M3 5.5 L5.2 8 L10 3" stroke="#000" stroke-width="2" fill="none"/></svg>
<svg class="g" style="left:735px;top:102px" width="74" height="12"><g><use href="#g195"/><use href="#g196" x="12"/><use href="#g194" x="25"/><use href="#g64" x="37"/><use href="#g94" x="50"/><use href="#g197" x="62"/></g></svg>
<div class="a sk" style="left:813px;top:100px;width:39px;height:18px"><div class="ski" style="width:37px;height:16px;background:#fff"></div></div>
<svg class="g" style="left:846px;top:102px" width="6" height="12"><g><use href="#g198"/></g></svg>
<svg class="g" style="left:856px;top:102px" width="26" height="12"><g><use href="#g96"/><use href="#g97" x="14"/></g></svg>
<div class="a sk" style="left:973px;top:103px;width:11px;height:11px"><div class="ski" style="width:9px;height:9px;background:#fff"></div></div>
<svg class="g" style="left:990px;top:101px" width="48" height="12"><g><use href="#g75"/><use href="#g76" x="12"/><use href="#g77" x="24"/><use href="#g78" x="36"/></g></svg>
<svg class="g" style="left:764px;top:132px" width="42" height="12"><g><use href="#g199"/><use href="#g200" x="12"/><use href="#g175" x="24"/><use href="#g51" x="36"/></g></svg>
<div class="a sk" style="left:813px;top:128px;width:39px;height:18px"><div class="ski" style="width:37px;height:16px;background:#fff"></div></div>
<svg class="g" style="left:857px;top:132px" width="31" height="12"><g><use href="#g95"/><use href="#g96" x="6"/><use href="#g97" x="19"/></g></svg>
<div class="a sk" style="left:973px;top:132px;width:11px;height:11px"><div class="ski" style="width:9px;height:9px;background:#fff"></div></div>
<svg class="g" style="left:990px;top:131px" width="48" height="12"><g><use href="#g75"/><use href="#g76" x="12"/><use href="#g77" x="24"/><use href="#g78" x="36"/></g></svg>
<svg class="g" style="left:764px;top:155px" width="42" height="12"><g><use href="#g201"/><use href="#g202" x="12"/><use href="#g175" x="24"/><use href="#g51" x="36"/></g></svg>
<div class="a sk" style="left:813px;top:151px;width:39px;height:18px"><div class="ski" style="width:37px;height:16px;background:#fff"></div></div>
<svg class="g" style="left:856px;top:155px" width="26" height="12"><g><use href="#g96"/><use href="#g97" x="14"/></g></svg>
<div class="a sk" style="left:973px;top:155px;width:11px;height:11px"><div class="ski" style="width:9px;height:9px;background:#fff"></div></div>
<svg class="g" style="left:990px;top:154px" width="48" height="12"><g><use href="#g75"/><use href="#g76" x="12"/><use href="#g77" x="24"/><use href="#g78" x="36"/></g></svg>
<svg class="g" style="left:764px;top:178px" width="42" height="12"><g><use href="#g148"/><use href="#g70" x="12"/><use href="#g149" x="24"/><use href="#g51" x="36"/></g></svg>
<div class="a sk" style="left:813px;top:176px;width:39px;height:18px"><div class="ski" style="width:37px;height:16px;background:#fff"></div></div>
<svg class="g" style="left:856px;top:180px" width="38" height="12"><g><use href="#g203"/><use href="#g96" x="13"/><use href="#g97" x="26"/></g></svg>
<div class="a sk" style="left:973px;top:180px;width:11px;height:11px"><div class="ski" style="width:9px;height:9px;background:#fff"></div></div>
<svg class="g" style="left:990px;top:179px" width="48" height="12"><g><use href="#g75"/><use href="#g76" x="12"/><use href="#g77" x="24"/><use href="#g78" x="36"/></g></svg>
<div class="a" style="left:712px;top:199px;width:333px;height:51px;border:1px solid #fff"></div>
<div class="a" style="left:711px;top:198px;width:333px;height:51px;border:1px solid #a0a0a0"></div>
<div class="a" style="left:718px;top:197px;width:61px;height:3px;background:#f0f0f0"></div>
<svg class="g" style="left:718px;top:192px" width="61" height="12"><g><use href="#g194"/><use href="#g64" x="12"/><use href="#g94" x="24"/><use href="#g204" x="37"/><use href="#g163" x="49"/></g></svg>
<svg class="g" style="left:740px;top:207px" width="66" height="12"><g><use href="#g194"/><use href="#g64" x="12"/><use href="#g94" x="24"/><use href="#g204" x="36"/><use href="#g163" x="48"/><use href="#g51" x="60"/></g></svg>
<div class="a sk" style="left:813px;top:203px;width:39px;height:18px"><div class="ski" style="width:37px;height:16px;background:#fff"></div></div>
<svg class="g" style="left:857px;top:207px" width="31" height="12"><g><use href="#g95"/><use href="#g96" x="6"/><use href="#g97" x="19"/></g></svg>
<div class="a sk" style="left:973px;top:208px;width:11px;height:11px"><div class="ski" style="width:9px;height:9px;background:#fff"></div></div>
<svg class="g" style="left:990px;top:207px" width="48" height="12"><g><use href="#g75"/><use href="#g76" x="12"/><use href="#g77" x="24"/><use href="#g78" x="36"/></g></svg>
<div class="a sk" style="left:719px;top:231px;width:11px;height:11px"><div class="ski" style="width:9px;height:9px;background:#fff"></div></div>
<svg class="g" style="left:735px;top:230px" width="74" height="12"><g><use href="#g178"/><use href="#g195" x="12"/><use href="#g196" x="25"/><use href="#g194" x="37"/><use href="#g94" x="50"/><use href="#g197" x="62"/></g></svg>
<div class="a sk" style="left:813px;top:227px;width:39px;height:18px"><div class="ski" style="width:37px;height:16px;background:#fff"></div></div>
<svg class="g" style="left:856px;top:231px" width="26" height="12"><g><use href="#g96"/><use href="#g97" x="14"/></g></svg>
<div class="a sk" style="left:973px;top:231px;width:11px;height:11px"><div class="ski" style="width:9px;height:9px;background:#fff"></div></div>
<svg class="g" style="left:990px;top:230px" width="48" height="12"><g><use href="#g75"/><use href="#g76" x="12"/><use href="#g77" x="24"/><use href="#g78" x="36"/></g></svg>
<svg class="g" style="left:740px;top:263px" width="66" height="12"><g><use href="#g199"/><use href="#g200" x="12"/><use href="#g175" x="24"/><use href="#g204" x="36"/><use href="#g163" x="48"/><use href="#g51" x="60"/></g></svg>
<div class="a sk" style="left:813px;top:259px;width:39px;height:18px"><div class="ski" style="width:37px;height:16px;background:#fff"></div></div>
<svg class="g" style="left:857px;top:263px" width="31" height="12"><g><use href="#g95"/><use href="#g96" x="6"/><use href="#g97" x="19"/></g></svg>
<div class="a sk" style="left:973px;top:264px;width:11px;height:11px"><div class="ski" style="width:9px;height:9px;background:#fff"></div></div>
<svg class="g" style="left:990px;top:263px" width="48" height="12"><g><use href="#g75"/><use href="#g76" x="12"/><use href="#g77" x="24"/><use href="#g78" x="36"/></g></svg>
<div class="a" style="left:580px;top:299px;width:469px;height:32px;border:1px solid #fff"></div>
<div class="a" style="left:579px;top:298px;width:469px;height:32px;border:1px solid #a0a0a0"></div>
<div class="a" style="left:586px;top:297px;width:49px;height:3px;background:#f0f0f0"></div>
<svg class="g" style="left:586px;top:292px" width="48" height="12"><g><use href="#g205"/><use href="#g206" x="12"/><use href="#g207" x="24"/><use href="#g119" x="36"/></g></svg>
<svg class="a" style="left:590px;top:313px" width="12" height="12" viewBox="0 0 12 12"><circle cx="6" cy="6" r="4.5" fill="#fff"/><path d="M9.89 2.11A5.5 5.5 0 0 0 2.11 9.89" stroke="#a0a0a0" stroke-width="1" fill="none"/><path d="M2.11 9.89A5.5 5.5 0 0 0 9.89 2.11" stroke="#fff" stroke-width="1" fill="none"/><path d="M9.18 2.82A4.5 4.5 0 0 0 2.82 9.18" stroke="#696969" stroke-width="1" fill="none"/><path d="M2.82 9.18A4.5 4.5 0 0 0 9.18 2.82" stroke="#e3e3e3" stroke-width="1" fill="none"/></svg>
<svg class="g" style="left:605px;top:312px" width="50" height="12"><g><use href="#g196"/><use href="#g208" x="13"/><use href="#g159" x="25"/><use href="#g151" x="38"/></g></svg>
<svg class="a" style="left:678px;top:313px" width="12" height="12" viewBox="0 0 12 12"><circle cx="6" cy="6" r="4.5" fill="#fff"/><path d="M9.89 2.11A5.5 5.5 0 0 0 2.11 9.89" stroke="#a0a0a0" stroke-width="1" fill="none"/><path d="M2.11 9.89A5.5 5.5 0 0 0 9.89 2.11" stroke="#fff" stroke-width="1" fill="none"/><path d="M9.18 2.82A4.5 4.5 0 0 0 2.82 9.18" stroke="#696969" stroke-width="1" fill="none"/><path d="M2.82 9.18A4.5 4.5 0 0 0 9.18 2.82" stroke="#e3e3e3" stroke-width="1" fill="none"/><circle cx="6" cy="6" r="2" fill="#000"/></svg>
<svg class="g" style="left:693px;top:312px" width="62" height="12"><g><use href="#g194"/><use href="#g64" x="12"/><use href="#g94" x="25"/><use href="#g159" x="38"/><use href="#g151" x="50"/></g></svg>
<svg class="a" style="left:766px;top:313px" width="12" height="12" viewBox="0 0 12 12"><circle cx="6" cy="6" r="4.5" fill="#fff"/><path d="M9.89 2.11A5.5 5.5 0 0 0 2.11 9.89" stroke="#a0a0a0" stroke-width="1" fill="none"/><path d="M2.11 9.89A5.5 5.5 0 0 0 9.89 2.11" stroke="#fff" stroke-width="1" fill="none"/><path d="M9.18 2.82A4.5 4.5 0 0 0 2.82 9.18" stroke="#696969" stroke-width="1" fill="none"/><path d="M2.82 9.18A4.5 4.5 0 0 0 9.18 2.82" stroke="#e3e3e3" stroke-width="1" fill="none"/></svg>
<svg class="g" style="left:781px;top:312px" width="71" height="12"><g><use href="#g196"/><use href="#g208" x="12"/><use href="#g209" x="24"/><use href="#g151" x="35"/><use href="#g210" x="47"/><use href="#g123" x="59"/></g></svg>
<svg class="g" style="left:917px;top:310px" width="32" height="12"><g><use href="#g178"/><use href="#g202" x="13"/><use href="#g51" x="26"/></g></svg>
<div class="a sk" style="left:950px;top:306px;width:59px;height:18px"><div class="ski" style="width:57px;height:16px;background:#fff"></div></div>
<svg class="g" style="left:983px;top:308px" width="24" height="12"><g><use href="#g55"/><use href="#g53" x="6"/><use href="#g53" x="12"/><use href="#g53" x="18"/></g></svg>
<svg class="g" style="left:1013px;top:310px" width="12" height="12"><g><use href="#g211"/></g></svg>
<div class="a" style="left:580px;top:342px;width:161px;height:38px;border:1px solid #fff"></div>
<div class="a" style="left:579px;top:341px;width:161px;height:38px;border:1px solid #a0a0a0"></div>
<div class="a" style="left:586px;top:340px;width:49px;height:3px;background:#f0f0f0"></div>
<svg class="g" style="left:586px;top:335px" width="49" height="12"><g><use href="#g133"/><use href="#g134" x="12"/><use href="#g77" x="25"/><use href="#g90" x="37"/></g></svg>
<div class="a sk" style="left:595px;top:353px;width:135px;height:18px"><div class="ski" style="width:133px;height:16px;background:#fff"></div></div>
<div class="a rb" style="left:713px;top:355px;width:15px;height:14px"><div class="rbi" style="width:13px;height:12px"></div></div>
<svg class="a" style="left:717px;top:360px" width="7" height="4"><path d="M0 0H7L3.5 4z" fill="#000"/></svg>
<svg class="g" style="left:598px;top:356px" width="64" height="12"><g><use href="#g172"/><use href="#g173" x="13"/><use href="#g162" x="26"/><use href="#g174" x="39"/><use href="#g55" x="52"/><use href="#g53" x="58"/></g></svg>
<div class="a" style="left:580px;top:386px;width:161px;height:36px;border:1px solid #fff"></div>
<div class="a" style="left:579px;top:385px;width:161px;height:36px;border:1px solid #a0a0a0"></div>
<div class="a" style="left:586px;top:384px;width:74px;height:3px;background:#f0f0f0"></div>
<svg class="g" style="left:586px;top:379px" width="74" height="12"><g><use href="#g178"/><use href="#g212" x="12"/><use href="#g94" x="25"/><use href="#g163" x="37"/><use href="#g164" x="50"/><use href="#g213" x="62"/></g></svg>
<div class="a sk" style="left:595px;top:397px;width:117px;height:18px"><div class="ski" style="width:115px;height:16px;background:#fff"></div></div>
<div class="a rb" style="left:695px;top:399px;width:15px;height:14px"><div class="rbi" style="width:13px;height:12px"></div></div>
<svg class="a" style="left:699px;top:404px" width="7" height="4"><path d="M0 0H7L3.5 4z" fill="#000"/></svg>
<svg class="g" style="left:598px;top:400px" width="90" height="12"><g><use href="#g178"/><use href="#g212" x="12"/><use href="#g94" x="24"/><use href="#g163" x="36"/><use href="#g164" x="48"/><use href="#g213" x="60"/><use href="#g191" x="72"/><use href="#g55" x="78"/><use href="#g193" x="84"/></g></svg>
<div class="a" style="left:750px;top:342px;width:299px;height:80px;border:1px solid #fff"></div>
<div class="a" style="left:749px;top:341px;width:299px;height:80px;border:1px solid #a0a0a0"></div>
<div class="a" style="left:755px;top:340px;width:114px;height:3px;background:#f0f0f0"></div>
<svg class="g" style="left:755px;top:335px" width="114" height="12"><g><use href="#g194"/><use href="#g64" x="11"/><use href="#g94" x="23"/><use href="#g214" x="34"/><use href="#g215" x="45"/><use href="#g148" x="57"/><use href="#g216" x="68"/><use href="#g110" x="79"/><use href="#g113" x="91"/><use href="#g114" x="102"/></g></svg>
<svg class="a" style="left:758px;top:355px" width="12" height="12" viewBox="0 0 12 12"><circle cx="6" cy="6" r="4.5" fill="#fff"/><path d="M9.89 2.11A5.5 5.5 0 0 0 2.11 9.89" stroke="#a0a0a0" stroke-width="1" fill="none"/><path d="M2.11 9.89A5.5 5.5 0 0 0 9.89 2.11" stroke="#fff" stroke-width="1" fill="none"/><path d="M9.18 2.82A4.5 4.5 0 0 0 2.82 9.18" stroke="#696969" stroke-width="1" fill="none"/><path d="M2.82 9.18A4.5 4.5 0 0 0 9.18 2.82" stroke="#e3e3e3" stroke-width="1" fill="none"/><circle cx="6" cy="6" r="2" fill="#000"/></svg>
<svg class="g" style="left:774px;top:353px" width="58" height="12"><g><use href="#g137"/><use href="#g138" x="12"/><use href="#g123" x="23"/><use href="#g150" x="34"/><use href="#g151" x="46"/></g></svg>
<svg class="a" style="left:758px;top:378px" width="12" height="12" viewBox="0 0 12 12"><circle cx="6" cy="6" r="4.5" fill="#fff"/><path d="M9.89 2.11A5.5 5.5 0 0 0 2.11 9.89" stroke="#a0a0a0" stroke-width="1" fill="none"/><path d="M2.11 9.89A5.5 5.5 0 0 0 9.89 2.11" stroke="#fff" stroke-width="1" fill="none"/><path d="M9.18 2.82A4.5 4.5 0 0 0 2.82 9.18" stroke="#696969" stroke-width="1" fill="none"/><path d="M2.82 9.18A4.5 4.5 0 0 0 9.18 2.82" stroke="#e3e3e3" stroke-width="1" fill="none"/></svg>
<svg class="g" style="left:774px;top:376px" width="74" height="12"><g><use href="#g195"/><use href="#g196" x="12"/><use href="#g194" x="25"/><use href="#g64" x="37"/><use href="#g94" x="50"/><use href="#g197" x="62"/></g></svg>
<div class="a sk" style="left:847px;top:372px;width:25px;height:17px"><div class="ski" style="width:23px;height:15px;background:#fff"></div></div>
<svg class="g" style="left:867px;top:373px" width="6" height="12"><g><use href="#g55"/></g></svg>
<svg class="g" style="left:878px;top:376px" width="148" height="12"><g><use href="#g176"/><use href="#g217" x="11"/><use href="#g218" x="23"/><use href="#g219" x="34"/><use href="#g123" x="45"/><use href="#g220" x="57"/><use href="#g194" x="68"/><use href="#g64" x="79"/><use href="#g94" x="91"/><use href="#g221" x="102"/><use href="#g222" x="113"/><use href="#g223" x="125"/><use href="#g164" x="136"/></g></svg>
<svg class="a" style="left:758px;top:400px" width="12" height="12" viewBox="0 0 12 12"><circle cx="6" cy="6" r="4.5" fill="#fff"/><path d="M9.89 2.11A5.5 5.5 0 0 0 2.11 9.89" stroke="#a0a0a0" stroke-width="1" fill="none"/><path d="M2.11 9.89A5.5 5.5 0 0 0 9.89 2.11" stroke="#fff" stroke-width="1" fill="none"/><path d="M9.18 2.82A4.5 4.5 0 0 0 2.82 9.18" stroke="#696969" stroke-width="1" fill="none"/><path d="M2.82 9.18A4.5 4.5 0 0 0 9.18 2.82" stroke="#e3e3e3" stroke-width="1" fill="none"/></svg>
<svg class="g" style="left:774px;top:399px" width="50" height="12"><g><use href="#g194"/><use href="#g64" x="13"/><use href="#g94" x="25"/><use href="#g197" x="38"/></g></svg>
<div class="a sk" style="left:823px;top:397px;width:25px;height:17px"><div class="ski" style="width:23px;height:15px;background:#fff"></div></div>
<svg class="g" style="left:843px;top:398px" width="6" height="12"><g><use href="#g55"/></g></svg>
<svg class="g" style="left:854px;top:399px" width="168" height="12"><g><use href="#g176"/><use href="#g217" x="11"/><use href="#g218" x="22"/><use href="#g172" x="33"/><use href="#g173" x="45"/><use href="#g123" x="56"/><use href="#g224" x="67"/><use href="#g194" x="78"/><use href="#g64" x="89"/><use href="#g94" x="100"/><use href="#g219" x="111"/><use href="#g123" x="123"/><use href="#g220" x="134"/><use href="#g225" x="145"/><use href="#g226" x="156"/></g></svg>
<svg class="g" style="left:647px;top:452px" width="79" height="12"><g><use href="#g133"/><use href="#g134" x="12"/><use href="#g42" x="24"/><use href="#g43" x="36"/><use href="#g44" x="49"/><use href="#g90" x="61"/><use href="#g51" x="73"/></g></svg>
<div class="a sk" style="left:730px;top:450px;width:39px;height:16px"><div class="ski" style="width:37px;height:14px;background:#fff"></div></div>
<svg class="g" style="left:744px;top:452px" width="24" height="12"><g><use href="#g55"/><use href="#g227" x="6"/><use href="#g53" x="12"/><use href="#g228" x="18"/></g></svg>
<svg class="g" style="left:774px;top:452px" width="79" height="12"><g><use href="#g194"/><use href="#g64" x="12"/><use href="#g42" x="24"/><use href="#g43" x="36"/><use href="#g44" x="49"/><use href="#g90" x="61"/><use href="#g51" x="73"/></g></svg>
<div class="a sk" style="left:857px;top:450px;width:37px;height:16px"><div class="ski" style="width:35px;height:14px;background:#fff"></div></div>
<svg class="g" style="left:878px;top:452px" width="18" height="12"><g><use href="#g229"/><use href="#g52" x="6"/><use href="#g229" x="12"/></g></svg>
<svg class="g" style="left:909px;top:452px" width="44" height="12"><g><use href="#g230"/><use href="#g231" x="13"/><use href="#g94" x="25"/><use href="#g51" x="38"/></g></svg>
<div class="a sk" style="left:959px;top:450px;width:49px;height:16px"><div class="ski" style="width:47px;height:14px;background:#fff"></div></div>
<svg class="g" style="left:981px;top:452px" width="26" height="12"><g><use href="#g229"/><use href="#g228" x="6"/><use href="#g156" x="12"/><use href="#g227" x="14"/><use href="#g95" x="20"/></g></svg>
<div class="a sk" style="left:9px;top:475px;width:1051px;height:248px"><div class="ski" style="width:1049px;height:246px;background:#fff"></div></div>
<div class="a" style="left:11px;top:477px;width:67px;height:18px;background:#f0f0f0;border-style:solid;border-width:1px;border-color:#fff #a0a0a0 #a0a0a0 #fff"></div>
<div class="a" style="left:80px;top:477px;width:1px;height:21px;background:#000"></div>
<svg class="g" style="left:34px;top:479px" width="24" height="12"><g><use href="#g49"/><use href="#g50" x="12"/></g></svg>
<div class="a" style="left:81px;top:477px;width:37px;height:18px;background:#f0f0f0;border-style:solid;border-width:1px;border-color:#fff #a0a0a0 #a0a0a0 #fff"></div>
<div class="a" style="left:120px;top:477px;width:1px;height:21px;background:#000"></div>
<svg class="g" style="left:88px;top:479px" width="24" height="12"><g><use href="#g62"/><use href="#g232" x="12"/></g></svg>
<div class="a" style="left:121px;top:477px;width:37px;height:18px;background:#f0f0f0;border-style:solid;border-width:1px;border-color:#fff #a0a0a0 #a0a0a0 #fff"></div>
<div class="a" style="left:160px;top:477px;width:1px;height:21px;background:#000"></div>
<svg class="g" style="left:122px;top:479px" width="38" height="12"><g><use href="#g42"/><use href="#g43" x="13"/><use href="#g44" x="26"/></g></svg>
<div class="a" style="left:161px;top:477px;width:410px;height:18px;background:#f0f0f0;border-style:solid;border-width:1px;border-color:#fff #a0a0a0 #a0a0a0 #fff"></div>
<div class="a" style="left:573px;top:477px;width:1px;height:21px;background:#000"></div>
<svg class="g" style="left:349px;top:479px" width="36" height="12"><g><use href="#g159"/><use href="#g151" x="12"/><use href="#g160" x="24"/></g></svg>
<div class="a" style="left:574px;top:477px;width:29px;height:18px;background:#f0f0f0;border-style:solid;border-width:1px;border-color:#fff #a0a0a0 #a0a0a0 #fff"></div>
<div class="a" style="left:605px;top:477px;width:1px;height:21px;background:#000"></div>
<svg class="g" style="left:578px;top:479px" width="24" height="12"><g><use href="#g194"/><use href="#g64" x="12"/></g></svg>
<div class="a" style="left:606px;top:477px;width:77px;height:18px;background:#f0f0f0;border-style:solid;border-width:1px;border-color:#fff #a0a0a0 #a0a0a0 #fff"></div>
<div class="a" style="left:685px;top:477px;width:1px;height:21px;background:#000"></div>
<svg class="g" style="left:622px;top:479px" width="48" height="12"><g><use href="#g161"/><use href="#g162" x="12"/><use href="#g205" x="24"/><use href="#g206" x="36"/></g></svg>
<div class="a" style="left:686px;top:477px;width:69px;height:18px;background:#f0f0f0;border-style:solid;border-width:1px;border-color:#fff #a0a0a0 #a0a0a0 #fff"></div>
<div class="a" style="left:757px;top:477px;width:1px;height:21px;background:#000"></div>
<svg class="g" style="left:704px;top:479px" width="36" height="12"><g><use href="#g207"/><use href="#g233" x="12"/><use href="#g205" x="24"/></g></svg>
<div class="a" style="left:758px;top:477px;width:55px;height:18px;background:#f0f0f0;border-style:solid;border-width:1px;border-color:#fff #a0a0a0 #a0a0a0 #fff"></div>
<div class="a" style="left:815px;top:477px;width:1px;height:21px;background:#000"></div>
<svg class="g" style="left:762px;top:479px" width="48" height="12"><g><use href="#g234"/><use href="#g194" x="12"/><use href="#g64" x="24"/><use href="#g94" x="36"/></g></svg>
<div class="a" style="left:816px;top:477px;width:77px;height:18px;background:#f0f0f0;border-style:solid;border-width:1px;border-color:#fff #a0a0a0 #a0a0a0 #fff"></div>
<div class="a" style="left:895px;top:477px;width:1px;height:21px;background:#000"></div>
<svg class="g" style="left:819px;top:479px" width="73" height="12"><g><use href="#g42"/><use href="#g43" x="12"/><use href="#g44" x="24"/><use href="#g194" x="37"/><use href="#g64" x="49"/><use href="#g94" x="61"/></g></svg>
<div class="a" style="left:896px;top:477px;width:69px;height:18px;background:#f0f0f0;border-style:solid;border-width:1px;border-color:#fff #a0a0a0 #a0a0a0 #fff"></div>
<div class="a" style="left:967px;top:477px;width:1px;height:21px;background:#000"></div>
<svg class="g" style="left:920px;top:479px" width="24" height="12"><g><use href="#g231"/><use href="#g235" x="12"/></g></svg>
<div class="a" style="left:968px;top:477px;width:73px;height:18px;background:#f0f0f0;border-style:solid;border-width:1px;border-color:#fff #a0a0a0 #a0a0a0 #fff"></div>
<div class="a" style="left:1043px;top:477px;width:1px;height:21px;background:#fff"></div>
<svg class="g" style="left:994px;top:479px" width="24" height="12"><g><use href="#g236"/><use href="#g163" x="12"/></g></svg>
<div class="a" style="left:11px;top:497px;width:1033px;height:1px;background:#000"></div>
<div class="a" style="left:1044px;top:477px;width:16px;height:246px;background:#f0f0f0"></div>
<div class="a" style="left:1051px;top:494px;width:2px;height:53px;background:#8a8a8a;border-radius:1px"></div>
<div class="a" style="left:11px;top:498px;width:1033px;height:225px;background:#fff"></div>
<div class="a" style="left:11px;top:518px;width:1033px;height:1px;background:#c8c8c8"></div>
<div class="a" style="left:11px;top:539px;width:1033px;height:1px;background:#c8c8c8"></div>
<div class="a" style="left:11px;top:560px;width:1033px;height:1px;background:#c8c8c8"></div>
<div class="a" style="left:11px;top:581px;width:1033px;height:1px;background:#c8c8c8"></div>
<div class="a" style="left:11px;top:602px;width:1033px;height:1px;background:#c8c8c8"></div>
<div class="a" style="left:11px;top:623px;width:1033px;height:1px;background:#c8c8c8"></div>
<div class="a" style="left:11px;top:644px;width:1033px;height:1px;background:#c8c8c8"></div>
<div class="a" style="left:11px;top:665px;width:1033px;height:1px;background:#c8c8c8"></div>
<div class="a" style="left:11px;top:686px;width:1033px;height:1px;background:#c8c8c8"></div>
<div class="a" style="left:11px;top:707px;width:1033px;height:1px;background:#c8c8c8"></div>
<div class="a" style="left:80px;top:498px;width:1px;height:225px;background:#c8c8c8"></div>
<div class="a" style="left:120px;top:498px;width:1px;height:225px;background:#c8c8c8"></div>
<div class="a" style="left:160px;top:498px;width:1px;height:225px;background:#c8c8c8"></div>
<div class="a" style="left:573px;top:498px;width:1px;height:225px;background:#c8c8c8"></div>
<div class="a" style="left:605px;top:498px;width:1px;height:225px;background:#c8c8c8"></div>
<div class="a" style="left:685px;top:498px;width:1px;height:225px;background:#c8c8c8"></div>
<div class="a" style="left:757px;top:498px;width:1px;height:225px;background:#c8c8c8"></div>
<div class="a" style="left:815px;top:498px;width:1px;height:225px;background:#c8c8c8"></div>
<div class="a" style="left:895px;top:498px;width:1px;height:225px;background:#c8c8c8"></div>
<div class="a" style="left:967px;top:498px;width:1px;height:225px;background:#c8c8c8"></div>
<div class="a" style="left:1043px;top:498px;width:1px;height:225px;background:#c8c8c8"></div>
<div class="a" style="left:0;top:0;width:1073px;height:723px;clip-path:inset(498px 0 0 0)">
<svg class="g" style="left:15px;top:502px" width="60" height="12"><g><use href="#g52"/><use href="#g53" x="6"/><use href="#g52" x="12"/><use href="#g52" x="18"/><use href="#g237" x="24"/><use href="#g53" x="30"/><use href="#g55" x="36"/><use href="#g237" x="42"/><use href="#g53" x="48"/><use href="#g59" x="54"/></g></svg>
<svg class="g" style="left:638px;top:502px" width="46" height="12"><g><use href="#g198"/><use href="#g238" x="6"/><use href="#g55" x="8"/><use href="#g59" x="14"/><use href="#g59" x="20"/><use href="#g238" x="26"/><use href="#g239" x="28"/><use href="#g53" x="34"/><use href="#g53" x="40"/></g></svg>
<svg class="g" style="left:710px;top:502px" width="46" height="12"><g><use href="#g227"/><use href="#g238" x="6"/><use href="#g53" x="8"/><use href="#g229" x="14"/><use href="#g198" x="20"/><use href="#g238" x="26"/><use href="#g53" x="28"/><use href="#g58" x="34"/><use href="#g53" x="40"/></g></svg>
<svg class="g" style="left:794px;top:502px" width="20" height="12"><g><use href="#g228"/><use href="#g156" x="6"/><use href="#g229" x="8"/><use href="#g95" x="14"/></g></svg>
<svg class="g" style="left:868px;top:502px" width="26" height="12"><g><use href="#g58"/><use href="#g53" x="6"/><use href="#g156" x="12"/><use href="#g228" x="14"/><use href="#g95" x="20"/></g></svg>
<svg class="g" style="left:914px;top:502px" width="52" height="12"><g><use href="#g240"/><use href="#g55" x="6"/><use href="#g238" x="12"/><use href="#g53" x="14"/><use href="#g58" x="20"/><use href="#g55" x="26"/><use href="#g238" x="32"/><use href="#g58" x="34"/><use href="#g198" x="40"/><use href="#g53" x="46"/></g></svg>
<svg class="g" style="left:990px;top:502px" width="52" height="12"><g><use href="#g240"/><use href="#g55" x="6"/><use href="#g238" x="12"/><use href="#g53" x="14"/><use href="#g58" x="20"/><use href="#g55" x="26"/><use href="#g238" x="32"/><use href="#g58" x="34"/><use href="#g198" x="40"/><use href="#g53" x="46"/></g></svg>
<svg class="g" style="left:15px;top:523px" width="60" height="12"><g><use href="#g52"/><use href="#g53" x="6"/><use href="#g52" x="12"/><use href="#g52" x="18"/><use href="#g237" x="24"/><use href="#g53" x="30"/><use href="#g55" x="36"/><use href="#g237" x="42"/><use href="#g53" x="48"/><use href="#g228" x="54"/></g></svg>
<svg class="g" style="left:638px;top:523px" width="46" height="12"><g><use href="#g198"/><use href="#g238" x="6"/><use href="#g55" x="8"/><use href="#g227" x="14"/><use href="#g198" x="20"/><use href="#g238" x="26"/><use href="#g53" x="28"/><use href="#g53" x="34"/><use href="#g53" x="40"/></g></svg>
<svg class="g" style="left:710px;top:523px" width="46" height="12"><g><use href="#g227"/><use href="#g238" x="6"/><use href="#g52" x="8"/><use href="#g58" x="14"/><use href="#g227" x="20"/><use href="#g238" x="26"/><use href="#g198" x="28"/><use href="#g59" x="34"/><use href="#g53" x="40"/></g></svg>
<svg class="g" style="left:794px;top:523px" width="20" height="12"><g><use href="#g58"/><use href="#g156" x="6"/><use href="#g229" x="8"/><use href="#g95" x="14"/></g></svg>
<svg class="g" style="left:868px;top:523px" width="26" height="12"><g><use href="#g59"/><use href="#g58" x="6"/><use href="#g156" x="12"/><use href="#g59" x="14"/><use href="#g95" x="20"/></g></svg>
<svg class="g" style="left:922px;top:523px" width="44" height="12"><g><use href="#g240"/><use href="#g228" x="6"/><use href="#g239" x="12"/><use href="#g53" x="18"/><use href="#g238" x="24"/><use href="#g59" x="26"/><use href="#g59" x="32"/><use href="#g53" x="38"/></g></svg>
<svg class="g" style="left:990px;top:523px" width="52" height="12"><g><use href="#g240"/><use href="#g55" x="6"/><use href="#g238" x="12"/><use href="#g229" x="14"/><use href="#g227" x="20"/><use href="#g52" x="26"/><use href="#g238" x="32"/><use href="#g55" x="34"/><use href="#g229" x="40"/><use href="#g53" x="46"/></g></svg>
<svg class="g" style="left:15px;top:544px" width="60" height="12"><g><use href="#g52"/><use href="#g53" x="6"/><use href="#g52" x="12"/><use href="#g52" x="18"/><use href="#g237" x="24"/><use href="#g53" x="30"/><use href="#g55" x="36"/><use href="#g237" x="42"/><use href="#g53" x="48"/><use href="#g229" x="54"/></g></svg>
<svg class="g" style="left:638px;top:544px" width="46" height="12"><g><use href="#g198"/><use href="#g238" x="6"/><use href="#g59" x="8"/><use href="#g59" x="14"/><use href="#g55" x="20"/><use href="#g238" x="26"/><use href="#g228" x="28"/><use href="#g53" x="34"/><use href="#g53" x="40"/></g></svg>
<svg class="g" style="left:710px;top:544px" width="46" height="12"><g><use href="#g198"/><use href="#g238" x="6"/><use href="#g52" x="8"/><use href="#g229" x="14"/><use href="#g59" x="20"/><use href="#g238" x="26"/><use href="#g55" x="28"/><use href="#g227" x="34"/><use href="#g53" x="40"/></g></svg>
<svg class="g" style="left:794px;top:544px" width="20" height="12"><g><use href="#g239"/><use href="#g156" x="6"/><use href="#g55" x="8"/><use href="#g95" x="14"/></g></svg>
<svg class="g" style="left:868px;top:544px" width="26" height="12"><g><use href="#g59"/><use href="#g228" x="6"/><use href="#g156" x="12"/><use href="#g227" x="14"/><use href="#g95" x="20"/></g></svg>
<svg class="g" style="left:922px;top:544px" width="44" height="12"><g><use href="#g240"/><use href="#g52" x="6"/><use href="#g59" x="12"/><use href="#g58" x="18"/><use href="#g238" x="24"/><use href="#g58" x="26"/><use href="#g239" x="32"/><use href="#g53" x="38"/></g></svg>
<svg class="g" style="left:990px;top:544px" width="52" height="12"><g><use href="#g240"/><use href="#g52" x="6"/><use href="#g238" x="12"/><use href="#g55" x="14"/><use href="#g228" x="20"/><use href="#g228" x="26"/><use href="#g238" x="32"/><use href="#g228" x="34"/><use href="#g58" x="40"/><use href="#g53" x="46"/></g></svg>
<svg class="g" style="left:15px;top:565px" width="60" height="12"><g><use href="#g52"/><use href="#g53" x="6"/><use href="#g52" x="12"/><use href="#g52" x="18"/><use href="#g237" x="24"/><use href="#g53" x="30"/><use href="#g55" x="36"/><use href="#g237" x="42"/><use href="#g55" x="48"/><use href="#g53" x="54"/></g></svg>
<svg class="g" style="left:638px;top:565px" width="46" height="12"><g><use href="#g198"/><use href="#g238" x="6"/><use href="#g58" x="8"/><use href="#g52" x="14"/><use href="#g227" x="20"/><use href="#g238" x="26"/><use href="#g58" x="28"/><use href="#g53" x="34"/><use href="#g53" x="40"/></g></svg>
<svg class="g" style="left:710px;top:565px" width="46" height="12"><g><use href="#g55"/><use href="#g238" x="6"/><use href="#g198" x="8"/><use href="#g58" x="14"/><use href="#g227" x="20"/><use href="#g238" x="26"/><use href="#g239" x="28"/><use href="#g52" x="34"/><use href="#g53" x="40"/></g></svg>
<svg class="g" style="left:794px;top:565px" width="20" height="12"><g><use href="#g59"/><use href="#g156" x="6"/><use href="#g228" x="8"/><use href="#g95" x="14"/></g></svg>
<svg class="g" style="left:868px;top:565px" width="26" height="12"><g><use href="#g198"/><use href="#g59" x="6"/><use href="#g156" x="12"/><use href="#g228" x="14"/><use href="#g95" x="20"/></g></svg>
<svg class="g" style="left:914px;top:565px" width="52" height="12"><g><use href="#g240"/><use href="#g227" x="6"/><use href="#g238" x="12"/><use href="#g55" x="14"/><use href="#g59" x="20"/><use href="#g229" x="26"/><use href="#g238" x="32"/><use href="#g228" x="34"/><use href="#g228" x="40"/><use href="#g53" x="46"/></g></svg>
<svg class="g" style="left:990px;top:565px" width="52" height="12"><g><use href="#g240"/><use href="#g59" x="6"/><use href="#g238" x="12"/><use href="#g227" x="14"/><use href="#g198" x="20"/><use href="#g228" x="26"/><use href="#g238" x="32"/><use href="#g239" x="34"/><use href="#g198" x="40"/><use href="#g53" x="46"/></g></svg>
<svg class="g" style="left:15px;top:586px" width="60" height="12"><g><use href="#g52"/><use href="#g53" x="6"/><use href="#g52" x="12"/><use href="#g52" x="18"/><use href="#g237" x="24"/><use href="#g53" x="30"/><use href="#g55" x="36"/><use href="#g237" x="42"/><use href="#g55" x="48"/><use href="#g59" x="54"/></g></svg>
<svg class="g" style="left:638px;top:586px" width="46" height="12"><g><use href="#g59"/><use href="#g238" x="6"/><use href="#g229" x="8"/><use href="#g239" x="14"/><use href="#g58" x="20"/><use href="#g238" x="26"/><use href="#g52" x="28"/><use href="#g53" x="34"/><use href="#g53" x="40"/></g></svg>
<svg class="g" style="left:710px;top:586px" width="46" height="12"><g><use href="#g58"/><use href="#g238" x="6"/><use href="#g59" x="8"/><use href="#g59" x="14"/><use href="#g239" x="20"/><use href="#g238" x="26"/><use href="#g55" x="28"/><use href="#g227" x="34"/><use href="#g53" x="40"/></g></svg>
<svg class="g" style="left:788px;top:586px" width="26" height="12"><g><use href="#g55"/><use href="#g52" x="6"/><use href="#g156" x="12"/><use href="#g198" x="14"/><use href="#g95" x="20"/></g></svg>
<svg class="g" style="left:868px;top:586px" width="26" height="12"><g><use href="#g239"/><use href="#g239" x="6"/><use href="#g156" x="12"/><use href="#g55" x="14"/><use href="#g95" x="20"/></g></svg>
<svg class="g" style="left:928px;top:586px" width="38" height="12"><g><use href="#g59"/><use href="#g228" x="6"/><use href="#g53" x="12"/><use href="#g238" x="18"/><use href="#g229" x="20"/><use href="#g227" x="26"/><use href="#g53" x="32"/></g></svg>
<svg class="g" style="left:990px;top:586px" width="52" height="12"><g><use href="#g240"/><use href="#g198" x="6"/><use href="#g238" x="12"/><use href="#g239" x="14"/><use href="#g58" x="20"/><use href="#g239" x="26"/><use href="#g238" x="32"/><use href="#g228" x="34"/><use href="#g55" x="40"/><use href="#g53" x="46"/></g></svg>
<svg class="g" style="left:15px;top:607px" width="60" height="12"><g><use href="#g52"/><use href="#g53" x="6"/><use href="#g52" x="12"/><use href="#g52" x="18"/><use href="#g237" x="24"/><use href="#g53" x="30"/><use href="#g55" x="36"/><use href="#g237" x="42"/><use href="#g55" x="48"/><use href="#g58" x="54"/></g></svg>
<svg class="g" style="left:638px;top:607px" width="46" height="12"><g><use href="#g58"/><use href="#g238" x="6"/><use href="#g53" x="8"/><use href="#g229" x="14"/><use href="#g228" x="20"/><use href="#g238" x="26"/><use href="#g59" x="28"/><use href="#g53" x="34"/><use href="#g53" x="40"/></g></svg>
<svg class="g" style="left:710px;top:607px" width="46" height="12"><g><use href="#g228"/><use href="#g238" x="6"/><use href="#g58" x="8"/><use href="#g52" x="14"/><use href="#g58" x="20"/><use href="#g238" x="26"/><use href="#g52" x="28"/><use href="#g58" x="34"/><use href="#g53" x="40"/></g></svg>
<svg class="g" style="left:794px;top:607px" width="20" height="12"><g><use href="#g229"/><use href="#g156" x="6"/><use href="#g53" x="8"/><use href="#g95" x="14"/></g></svg>
<svg class="g" style="left:868px;top:607px" width="26" height="12"><g><use href="#g58"/><use href="#g239" x="6"/><use href="#g156" x="12"/><use href="#g58" x="14"/><use href="#g95" x="20"/></g></svg>
<svg class="g" style="left:920px;top:607px" width="46" height="12"><g><use href="#g52"/><use href="#g238" x="6"/><use href="#g59" x="8"/><use href="#g52" x="14"/><use href="#g239" x="20"/><use href="#g238" x="26"/><use href="#g239" x="28"/><use href="#g58" x="34"/><use href="#g53" x="40"/></g></svg>
<svg class="g" style="left:990px;top:607px" width="52" height="12"><g><use href="#g240"/><use href="#g52" x="6"/><use href="#g238" x="12"/><use href="#g52" x="14"/><use href="#g198" x="20"/><use href="#g53" x="26"/><use href="#g238" x="32"/><use href="#g53" x="34"/><use href="#g59" x="40"/><use href="#g53" x="46"/></g></svg>
<svg class="g" style="left:15px;top:628px" width="60" height="12"><g><use href="#g52"/><use href="#g53" x="6"/><use href="#g52" x="12"/><use href="#g52" x="18"/><use href="#g237" x="24"/><use href="#g53" x="30"/><use href="#g55" x="36"/><use href="#g237" x="42"/><use href="#g52" x="48"/><use href="#g52" x="54"/></g></svg>
<svg class="g" style="left:638px;top:628px" width="46" height="12"><g><use href="#g59"/><use href="#g238" x="6"/><use href="#g58" x="8"/><use href="#g239" x="14"/><use href="#g228" x="20"/><use href="#g238" x="26"/><use href="#g52" x="28"/><use href="#g53" x="34"/><use href="#g53" x="40"/></g></svg>
<svg class="g" style="left:710px;top:628px" width="46" height="12"><g><use href="#g59"/><use href="#g238" x="6"/><use href="#g59" x="8"/><use href="#g52" x="14"/><use href="#g228" x="20"/><use href="#g238" x="26"/><use href="#g55" x="28"/><use href="#g59" x="34"/><use href="#g53" x="40"/></g></svg>
<svg class="g" style="left:794px;top:628px" width="20" height="12"><g><use href="#g229"/><use href="#g156" x="6"/><use href="#g58" x="8"/><use href="#g95" x="14"/></g></svg>
<svg class="g" style="left:868px;top:628px" width="26" height="12"><g><use href="#g58"/><use href="#g53" x="6"/><use href="#g156" x="12"/><use href="#g58" x="14"/><use href="#g95" x="20"/></g></svg>
<svg class="g" style="left:922px;top:628px" width="44" height="12"><g><use href="#g240"/><use href="#g55" x="6"/><use href="#g59" x="12"/><use href="#g53" x="18"/><use href="#g238" x="24"/><use href="#g53" x="26"/><use href="#g59" x="32"/><use href="#g53" x="38"/></g></svg>
<svg class="g" style="left:990px;top:628px" width="52" height="12"><g><use href="#g240"/><use href="#g52" x="6"/><use href="#g238" x="12"/><use href="#g227" x="14"/><use href="#g229" x="20"/><use href="#g53" x="26"/><use href="#g238" x="32"/><use href="#g55" x="34"/><use href="#g53" x="40"/><use href="#g53" x="46"/></g></svg>
<svg class="g" style="left:15px;top:649px" width="60" height="12"><g><use href="#g52"/><use href="#g53" x="6"/><use href="#g52" x="12"/><use href="#g52" x="18"/><use href="#g237" x="24"/><use href="#g53" x="30"/><use href="#g55" x="36"/><use href="#g237" x="42"/><use href="#g52" x="48"/><use href="#g227" x="54"/></g></svg>
<svg class="g" style="left:638px;top:649px" width="46" height="12"><g><use href="#g58"/><use href="#g238" x="6"/><use href="#g198" x="8"/><use href="#g58" x="14"/><use href="#g59" x="20"/><use href="#g238" x="26"/><use href="#g59" x="28"/><use href="#g53" x="34"/><use href="#g53" x="40"/></g></svg>
<svg class="g" style="left:710px;top:649px" width="46" height="12"><g><use href="#g59"/><use href="#g238" x="6"/><use href="#g228" x="8"/><use href="#g227" x="14"/><use href="#g229" x="20"/><use href="#g238" x="26"/><use href="#g228" x="28"/><use href="#g58" x="34"/><use href="#g53" x="40"/></g></svg>
<svg class="g" style="left:788px;top:649px" width="26" height="12"><g><use href="#g55"/><use href="#g53" x="6"/><use href="#g156" x="12"/><use href="#g228" x="14"/><use href="#g95" x="20"/></g></svg>
<svg class="g" style="left:868px;top:649px" width="26" height="12"><g><use href="#g239"/><use href="#g52" x="6"/><use href="#g156" x="12"/><use href="#g52" x="14"/><use href="#g95" x="20"/></g></svg>
<svg class="g" style="left:922px;top:649px" width="44" height="12"><g><use href="#g240"/><use href="#g58" x="6"/><use href="#g52" x="12"/><use href="#g59" x="18"/><use href="#g238" x="24"/><use href="#g58" x="26"/><use href="#g198" x="32"/><use href="#g53" x="38"/></g></svg>
<svg class="g" style="left:990px;top:649px" width="52" height="12"><g><use href="#g240"/><use href="#g227" x="6"/><use href="#g238" x="12"/><use href="#g53" x="14"/><use href="#g55" x="20"/><use href="#g59" x="26"/><use href="#g238" x="32"/><use href="#g239" x="34"/><use href="#g198" x="40"/><use href="#g53" x="46"/></g></svg>
<svg class="g" style="left:15px;top:670px" width="60" height="12"><g><use href="#g52"/><use href="#g53" x="6"/><use href="#g52" x="12"/><use href="#g52" x="18"/><use href="#g237" x="24"/><use href="#g53" x="30"/><use href="#g55" x="36"/><use href="#g237" x="42"/><use href="#g52" x="48"/><use href="#g229" x="54"/></g></svg>
<svg class="g" style="left:638px;top:670px" width="46" height="12"><g><use href="#g58"/><use href="#g238" x="6"/><use href="#g53" x="8"/><use href="#g59" x="14"/><use href="#g228" x="20"/><use href="#g238" x="26"/><use href="#g55" x="28"/><use href="#g53" x="34"/><use href="#g53" x="40"/></g></svg>
<svg class="g" style="left:710px;top:670px" width="46" height="12"><g><use href="#g58"/><use href="#g238" x="6"/><use href="#g59" x="8"/><use href="#g59" x="14"/><use href="#g227" x="20"/><use href="#g238" x="26"/><use href="#g55" x="28"/><use href="#g228" x="34"/><use href="#g53" x="40"/></g></svg>
<svg class="g" style="left:788px;top:670px" width="26" height="12"><g><use href="#g55"/><use href="#g53" x="6"/><use href="#g156" x="12"/><use href="#g58" x="14"/><use href="#g95" x="20"/></g></svg>
<svg class="g" style="left:868px;top:670px" width="26" height="12"><g><use href="#g239"/><use href="#g198" x="6"/><use href="#g156" x="12"/><use href="#g52" x="14"/><use href="#g95" x="20"/></g></svg>
<svg class="g" style="left:928px;top:670px" width="38" height="12"><g><use href="#g198"/><use href="#g229" x="6"/><use href="#g59" x="12"/><use href="#g238" x="18"/><use href="#g53" x="20"/><use href="#g228" x="26"/><use href="#g53" x="32"/></g></svg>
<svg class="g" style="left:990px;top:670px" width="52" height="12"><g><use href="#g240"/><use href="#g52" x="6"/><use href="#g238" x="12"/><use href="#g59" x="14"/><use href="#g52" x="20"/><use href="#g53" x="26"/><use href="#g238" x="32"/><use href="#g58" x="34"/><use href="#g58" x="40"/><use href="#g53" x="46"/></g></svg>
<svg class="g" style="left:15px;top:691px" width="60" height="12"><g><use href="#g52"/><use href="#g53" x="6"/><use href="#g52" x="12"/><use href="#g52" x="18"/><use href="#g237" x="24"/><use href="#g53" x="30"/><use href="#g55" x="36"/><use href="#g237" x="42"/><use href="#g227" x="48"/><use href="#g53" x="54"/></g></svg>
<svg class="g" style="left:638px;top:691px" width="46" height="12"><g><use href="#g58"/><use href="#g238" x="6"/><use href="#g227" x="8"/><use href="#g229" x="14"/><use href="#g58" x="20"/><use href="#g238" x="26"/><use href="#g53" x="28"/><use href="#g53" x="34"/><use href="#g53" x="40"/></g></svg>
<svg class="g" style="left:710px;top:691px" width="46" height="12"><g><use href="#g239"/><use href="#g238" x="6"/><use href="#g55" x="8"/><use href="#g198" x="14"/><use href="#g239" x="20"/><use href="#g238" x="26"/><use href="#g55" x="28"/><use href="#g59" x="34"/><use href="#g53" x="40"/></g></svg>
<svg class="g" style="left:788px;top:691px" width="26" height="12"><g><use href="#g55"/><use href="#g55" x="6"/><use href="#g156" x="12"/><use href="#g198" x="14"/><use href="#g95" x="20"/></g></svg>
<svg class="g" style="left:868px;top:691px" width="26" height="12"><g><use href="#g228"/><use href="#g227" x="6"/><use href="#g156" x="12"/><use href="#g227" x="14"/><use href="#g95" x="20"/></g></svg>
<svg class="g" style="left:928px;top:691px" width="38" height="12"><g><use href="#g239"/><use href="#g59" x="6"/><use href="#g55" x="12"/><use href="#g238" x="18"/><use href="#g55" x="20"/><use href="#g59" x="26"/><use href="#g53" x="32"/></g></svg>
<svg class="g" style="left:990px;top:691px" width="52" height="12"><g><use href="#g240"/><use href="#g55" x="6"/><use href="#g238" x="12"/><use href="#g239" x="14"/><use href="#g58" x="20"/><use href="#g229" x="26"/><use href="#g238" x="32"/><use href="#g59" x="34"/><use href="#g55" x="40"/><use href="#g53" x="46"/></g></svg>
<svg class="g" style="left:15px;top:712px" width="60" height="12"><g><use href="#g52"/><use href="#g53" x="6"/><use href="#g52" x="12"/><use href="#g52" x="18"/><use href="#g237" x="24"/><use href="#g53" x="30"/><use href="#g52" x="36"/><use href="#g237" x="42"/><use href="#g53" x="48"/><use href="#g59" x="54"/></g></svg>
<svg class="g" style="left:638px;top:712px" width="46" height="12"><g><use href="#g58"/><use href="#g238" x="6"/><use href="#g53" x="8"/><use href="#g59" x="14"/><use href="#g227" x="20"/><use href="#g238" x="26"/><use href="#g239" x="28"/><use href="#g53" x="34"/><use href="#g53" x="40"/></g></svg>
<svg class="g" style="left:710px;top:712px" width="46" height="12"><g><use href="#g59"/><use href="#g238" x="6"/><use href="#g59" x="8"/><use href="#g55" x="14"/><use href="#g227" x="20"/><use href="#g238" x="26"/><use href="#g58" x="28"/><use href="#g198" x="34"/><use href="#g53" x="40"/></g></svg>
<svg class="g" style="left:794px;top:712px" width="20" height="12"><g><use href="#g228"/><use href="#g156" x="6"/><use href="#g52" x="8"/><use href="#g95" x="14"/></g></svg>
<svg class="g" style="left:868px;top:712px" width="26" height="12"><g><use href="#g58"/><use href="#g229" x="6"/><use href="#g156" x="12"/><use href="#g239" x="14"/><use href="#g95" x="20"/></g></svg>
<svg class="g" style="left:922px;top:712px" width="44" height="12"><g><use href="#g240"/><use href="#g59" x="6"/><use href="#g198" x="12"/><use href="#g53" x="18"/><use href="#g238" x="24"/><use href="#g53" x="26"/><use href="#g58" x="32"/><use href="#g53" x="38"/></g></svg>
<svg class="g" style="left:990px;top:712px" width="52" height="12"><g><use href="#g240"/><use href="#g52" x="6"/><use href="#g238" x="12"/><use href="#g227" x="14"/><use href="#g53" x="20"/><use href="#g229" x="26"/><use href="#g238" x="32"/><use href="#g59" x="34"/><use href="#g239" x="40"/><use href="#g53" x="46"/></g></svg>
</div>
<svg class="g" style="left:66px;top:732px" width="50" height="12"><g><use href="#g241"/><use href="#g242" x="11"/><use href="#g243" x="22"/><use href="#g244" x="33"/><use href="#g245" x="44"/></g></svg>
<svg class="g" style="left:200px;top:732px" width="50" height="12"><g><use href="#g241"/><use href="#g246" x="11"/><use href="#g243" x="22"/><use href="#g244" x="33"/><use href="#g245" x="44"/></g></svg>
<svg class="g" style="left:334px;top:732px" width="50" height="12"><g><use href="#g241"/><use href="#g242" x="11"/><use href="#g247" x="22"/><use href="#g248" x="33"/><use href="#g245" x="44"/></g></svg>
<svg class="g" style="left:468px;top:732px" width="50" height="12"><g><use href="#g241"/><use href="#g246" x="11"/><use href="#g247" x="22"/><use href="#g248" x="33"/><use href="#g245" x="44"/></g></svg>
<div class="a sk" style="left:122px;top:730px;width:70px;height:16px"><div class="ski" style="width:68px;height:14px;background:#fff"></div></div>
<svg class="g" style="left:145px;top:732px" width="46" height="12"><g><use href="#g249"/><use href="#g250" x="6"/><use href="#g251" x="8"/><use href="#g252" x="14"/><use href="#g249" x="20"/><use href="#g250" x="26"/><use href="#g253" x="28"/><use href="#g249" x="34"/><use href="#g254" x="40"/></g></svg>
<div class="a sk" style="left:256px;top:730px;width:70px;height:16px"><div class="ski" style="width:68px;height:14px;background:#fff"></div></div>
<svg class="g" style="left:272px;top:732px" width="53" height="12"><g><use href="#g255"/><use href="#g249" x="7"/><use href="#g250" x="13"/><use href="#g256" x="15"/><use href="#g257" x="21"/><use href="#g253" x="27"/><use href="#g250" x="33"/><use href="#g258" x="35"/><use href="#g258" x="41"/><use href="#g254" x="47"/></g></svg>
<div class="a sk" style="left:390px;top:730px;width:71px;height:16px"><div class="ski" style="width:69px;height:14px;background:#fff"></div></div>
<svg class="g" style="left:414px;top:732px" width="46" height="12"><g><use href="#g259"/><use href="#g250" x="6"/><use href="#g249" x="8"/><use href="#g259" x="14"/><use href="#g257" x="20"/><use href="#g250" x="26"/><use href="#g249" x="28"/><use href="#g251" x="34"/><use href="#g254" x="40"/></g></svg>
<div class="a sk" style="left:524px;top:730px;width:70px;height:16px"><div class="ski" style="width:68px;height:14px;background:#fff"></div></div>
<svg class="g" style="left:540px;top:732px" width="53" height="12"><g><use href="#g255"/><use href="#g257" x="7"/><use href="#g250" x="13"/><use href="#g249" x="15"/><use href="#g251" x="21"/><use href="#g258" x="27"/><use href="#g250" x="33"/><use href="#g260" x="35"/><use href="#g251" x="41"/><use href="#g254" x="47"/></g></svg>
<div class="a sk" style="left:605px;top:730px;width:78px;height:16px"><div class="ski" style="width:76px;height:14px;background:#fff"></div></div>
<svg class="g" style="left:625px;top:732px" width="58" height="12"><g><use href="#g52"/><use href="#g52" x="6"/><use href="#g229" x="12"/><use href="#g238" x="18"/><use href="#g228" x="20"/><use href="#g58" x="26"/><use href="#g229" x="32"/><use href="#g238" x="38"/><use href="#g52" x="40"/><use href="#g53" x="46"/><use href="#g53" x="52"/></g></svg>
<div class="a sk" style="left:685px;top:730px;width:70px;height:16px"><div class="ski" style="width:68px;height:14px;background:#fff"></div></div>
<svg class="g" style="left:697px;top:732px" width="58" height="12"><g><use href="#g52"/><use href="#g52" x="6"/><use href="#g58" x="12"/><use href="#g238" x="18"/><use href="#g53" x="20"/><use href="#g52" x="26"/><use href="#g55" x="32"/><use href="#g238" x="38"/><use href="#g198" x="40"/><use href="#g52" x="46"/><use href="#g53" x="52"/></g></svg>
<div class="a sk" style="left:757px;top:730px;width:53px;height:16px"><div class="ski" style="width:51px;height:14px;background:#fff"></div></div>
<svg class="g" style="left:790px;top:732px" width="20" height="12"><g><use href="#g229"/><use href="#g156" x="6"/><use href="#g58" x="8"/><use href="#g95" x="14"/></g></svg>
<div class="a sk" style="left:815px;top:730px;width:78px;height:16px"><div class="ski" style="width:76px;height:14px;background:#fff"></div></div>
<svg class="g" style="left:867px;top:732px" width="26" height="12"><g><use href="#g239"/><use href="#g55" x="6"/><use href="#g156" x="12"/><use href="#g53" x="14"/><use href="#g95" x="20"/></g></svg>
<div class="a sk" style="left:895px;top:730px;width:71px;height:16px"><div class="ski" style="width:69px;height:14px;background:#fff"></div></div>
<svg class="g" style="left:914px;top:732px" width="52" height="12"><g><use href="#g240"/><use href="#g227" x="6"/><use href="#g238" x="12"/><use href="#g228" x="14"/><use href="#g198" x="20"/><use href="#g239" x="26"/><use href="#g238" x="32"/><use href="#g239" x="34"/><use href="#g228" x="40"/><use href="#g53" x="46"/></g></svg>
<div class="a" style="left:2px;top:759px;width:1069px;height:1px;background:#a0a0a0"></div>
<div class="a" style="left:2px;top:760px;width:1069px;height:1px;background:#fff"></div>
<div class="a bt" style="left:17px;top:768px;width:103px;height:23px"></div>
<svg class="g" style="left:28px;top:773px" width="84" height="12"><g><use href="#g110"/><use href="#g111" x="10"/><use href="#g112" x="21"/><use href="#g42" x="31"/><use href="#g43" x="41"/><use href="#g110" x="51"/><use href="#g113" x="62"/><use href="#g114" x="72"/></g></svg>
<div class="a bt" style="left:153px;top:768px;width:103px;height:23px"></div>
<svg class="g" style="left:160px;top:773px" width="92" height="12"><g><use href="#g47"/><use href="#g48" x="11"/><use href="#g261" x="23"/><use href="#g262" x="34"/><use href="#g167" x="46"/><use href="#g263" x="57"/><use href="#g264" x="69"/><use href="#g265" x="80"/></g></svg>
<div class="a bt" style="left:264px;top:768px;width:103px;height:23px"></div>
<svg class="g" style="left:270px;top:773px" width="92" height="12"><g><use href="#g47"/><use href="#g48" x="11"/><use href="#g261" x="23"/><use href="#g262" x="34"/><use href="#g167" x="46"/><use href="#g263" x="57"/><use href="#g266" x="69"/><use href="#g267" x="80"/></g></svg>
<div class="a bt" style="left:375px;top:768px;width:103px;height:23px"></div>
<svg class="g" style="left:393px;top:773px" width="69" height="12"><g><use href="#g47"/><use href="#g48" x="11"/><use href="#g268" x="23"/><use href="#g71" x="34"/><use href="#g269" x="46"/><use href="#g270" x="57"/></g></svg>
<div class="a bt" style="left:950px;top:768px;width:103px;height:23px"></div>
<svg class="g" style="left:985px;top:773px" width="35" height="12"><g><use href="#g271"/><use href="#g272" x="12"/><use href="#g190" x="23"/></g></svg>
<div class="a" style="left:2px;top:800px;width:1069px;height:1px;background:#a0a0a0"></div>
<div class="a" style="left:2px;top:801px;width:1069px;height:2px;background:#fff"></div>
<div class="a" style="left:2px;top:803px;width:177px;height:15px;border-style:solid;border-width:1px 1px 0 0;border-color:#a0a0a0 #fff #fff #a0a0a0"></div>
<div class="a" style="left:183px;top:803px;width:888px;height:16px;border-style:solid;border-width:1px 0 0 1px;border-color:#a0a0a0 #fff #fff #a0a0a0"></div>
<div class="a" style="left:572px;top:64px;width:134px;height:29px;border:5px solid #00a0e6;z-index:5"></div>
<div class="a" style="left:709px;top:95px;width:180px;height:24px;border:5px solid #00a0e6;z-index:5"></div>
<div class="a" style="left:580px;top:344px;width:156px;height:27px;border:5px solid #00a0e6;z-index:5"></div>
<div class="a" style="left:579px;top:386px;width:141px;height:37px;border:5px solid #00a0e6;z-index:5"></div>
<div class="a" style="left:891px;top:437px;width:125px;height:35px;border:5px solid #00a0e6;z-index:5"></div>
<div class="a" style="left:810px;top:722px;width:161px;height:28px;border:5px solid #00a0e6;z-index:5"></div>
</div>
<div class="h" style="left:31px;top:10px">RB☆STRIKE! - [馬券シミュレーション]</div>
<div class="h" style="left:31px;top:34px">ファイル(F)</div>
<div class="h" style="left:93px;top:34px">スタート(S)</div>
<div class="h" style="left:155px;top:34px">データ(D)</div>
<div class="h" style="left:211px;top:34px">ツール(T)</div>
<div class="h" style="left:266px;top:34px">ウィンドウ(W)</div>
<div class="h" style="left:341px;top:34px">ヘルプ(H)</div>
<div class="h" style="left:16px;top:56px">レース検索条件</div>
<div class="h" style="left:40px;top:75px">日付:</div>
<div class="h" style="left:86px;top:75px">2022</div>
<div class="h" style="left:112px;top:75px">年</div>
<div class="h" style="left:143px;top:75px">1</div>
<div class="h" style="left:151px;top:75px">月</div>
<div class="h" style="left:181px;top:75px">1</div>
<div class="h" style="left:187px;top:75px">日〜</div>
<div class="h" style="left:220px;top:75px">2022</div>
<div class="h" style="left:246px;top:75px">年</div>
<div class="h" style="left:276px;top:75px">6</div>
<div class="h" style="left:284px;top:75px">月</div>
<div class="h" style="left:314px;top:75px">5</div>
<div class="h" style="left:322px;top:75px">日</div>
<div class="h" style="left:16px;top:101px">投票場所:</div>
<div class="h" style="left:81px;top:101px">中央</div>
<div class="h" style="left:298px;top:101px">競馬場:</div>
<div class="h" style="left:21px;top:127px">トラック:</div>
<div class="h" style="left:310px;top:127px">距離:</div>
<div class="h" style="left:386px;top:126px">m</div>
<div class="h" style="left:493px;top:125px">範囲指定</div>
<div class="h" style="left:16px;top:153px">馬場状態:</div>
<div class="h" style="left:95px;top:153px">良</div>
<div class="h" style="left:142px;top:153px">稍重</div>
<div class="h" style="left:190px;top:153px">重</div>
<div class="h" style="left:239px;top:153px">不良</div>
<div class="h" style="left:286px;top:153px">競走種別:</div>
<div class="h" style="left:16px;top:179px">競走条件:</div>
<div class="h" style="left:286px;top:179px">重量種別:</div>
<div class="h" style="left:40px;top:204px">頭数:</div>
<div class="h" style="left:109px;top:204px">頭</div>
<div class="h" style="left:235px;top:205px">範囲指定</div>
<div class="h" style="left:296px;top:204px">レース:</div>
<div class="h" style="left:379px;top:204px">R〜</div>
<div class="h" style="left:452px;top:204px">R</div>
<div class="h" style="left:35px;top:230px">充足率</div>
<div class="h" style="left:110px;top:230px">%以上</div>
<div class="h" style="left:235px;top:231px">範囲指定</div>
<div class="h" style="left:16px;top:256px">初出走率:</div>
<div class="h" style="left:110px;top:256px">%以上</div>
<div class="h" style="left:235px;top:257px">範囲指定</div>
<div class="h" style="left:295px;top:256px">休明け率:</div>
<div class="h" style="left:389px;top:256px">%以上</div>
<div class="h" style="left:514px;top:257px">範囲指定</div>
<div class="h" style="left:13px;top:282px">初ﾄﾗｯｸ率:</div>
<div class="h" style="left:110px;top:282px">%以上</div>
<div class="h" style="left:235px;top:283px">範囲指定</div>
<div class="h" style="left:295px;top:282px">初距離率:</div>
<div class="h" style="left:389px;top:282px">%以上</div>
<div class="h" style="left:514px;top:283px">範囲指定</div>
<div class="h" style="left:16px;top:307px">初ｺｰｽ率:</div>
<div class="h" style="left:110px;top:307px">%以上</div>
<div class="h" style="left:235px;top:308px">範囲指定</div>
<div class="h" style="left:295px;top:307px">初状態率:</div>
<div class="h" style="left:389px;top:307px">%以上</div>
<div class="h" style="left:514px;top:308px">範囲指定</div>
<div class="h" style="left:16px;top:334px">シミュレーション馬券構成区分</div>
<div class="h" style="left:34px;top:351px">通常</div>
<div class="h" style="left:110px;top:351px">流し</div>
<div class="h" style="left:187px;top:351px">BOX</div>
<div class="h" style="left:262px;top:351px">ﾌｫｰﾒｰｼｮﾝ</div>
<div class="h" style="left:412px;top:348px">対象馬の設定</div>
<div class="h" style="left:16px;top:374px">使用ｵｯｽﾞ</div>
<div class="h" style="left:36px;top:393px">ﾘｱﾙ</div>
<div class="h" style="left:34px;top:416px">予測</div>
<div class="h" style="left:86px;top:374px">10分前予想オッズ設定</div>
<div class="h" style="left:104px;top:393px">使用しない</div>
<div class="h" style="left:184px;top:393px">n％下落</div>
<div class="h" style="left:236px;top:391px">20.0</div>
<div class="h" style="left:262px;top:393px">％</div>
<div class="h" style="left:110px;top:413px">10000</div>
<div class="h" style="left:146px;top:415px">票中</div>
<div class="h" style="left:178px;top:415px">同一買い目</div>
<div class="h" style="left:254px;top:412px">20</div>
<div class="h" style="left:273px;top:415px">票購入</div>
<div class="h" style="left:326px;top:384px">計算結果イメージ</div>
<div class="h" style="left:331px;top:406px">再計算</div>
<div class="h" style="left:386px;top:394px">確定オッズ:</div>
<div class="h" style="left:466px;top:392px">10.0</div>
<div class="h" style="left:496px;top:392px">100.0</div>
<div class="h" style="left:534px;top:392px">1000</div>
<div class="h" style="left:375px;top:415px">10分前オッズ:</div>
<div class="h" style="left:35px;top:450px">補正入力値を使用</div>
<div class="h" style="left:219px;top:438px">集計単位</div>
<div class="h" style="left:236px;top:453px">計のみ</div>
<div class="h" style="left:323px;top:453px">ﾚｰｽ毎</div>
<div class="h" style="left:410px;top:453px">日毎</div>
<div class="h" style="left:497px;top:453px">月毎</div>
<div class="h" style="left:586px;top:56px">買い目抽出条件</div>
<div class="h" style="left:586px;top:80px">馬券種類:</div>
<div class="h" style="left:648px;top:80px">ワイド</div>
<div class="h" style="left:602px;top:103px">代用馬券を適用する</div>
<div class="h" style="left:584px;top:123px">(ﾘｱﾙｵｯｽﾞ使用時のみ)</div>
<div class="h" style="left:718px;top:64px">的中率</div>
<div class="h" style="left:764px;top:80px">的中率:</div>
<div class="h" style="left:857px;top:80px">%以上</div>
<div class="h" style="left:990px;top:79px">範囲指定</div>
<div class="h" style="left:735px;top:102px">平均的中率×</div>
<div class="h" style="left:846px;top:102px">4</div>
<div class="h" style="left:856px;top:102px">以上</div>
<div class="h" style="left:990px;top:101px">範囲指定</div>
<div class="h" style="left:764px;top:132px">期待値:</div>
<div class="h" style="left:857px;top:132px">%以上</div>
<div class="h" style="left:990px;top:131px">範囲指定</div>
<div class="h" style="left:764px;top:155px">評価値:</div>
<div class="h" style="left:856px;top:155px">以上</div>
<div class="h" style="left:990px;top:154px">範囲指定</div>
<div class="h" style="left:764px;top:178px">オッズ:</div>
<div class="h" style="left:856px;top:180px">倍以上</div>
<div class="h" style="left:990px;top:179px">範囲指定</div>
<div class="h" style="left:718px;top:192px">的中率合計</div>
<div class="h" style="left:740px;top:207px">的中率合計:</div>
<div class="h" style="left:857px;top:207px">%以上</div>
<div class="h" style="left:990px;top:207px">範囲指定</div>
<div class="h" style="left:735px;top:230px">単平均的率×</div>
<div class="h" style="left:856px;top:231px">以上</div>
<div class="h" style="left:990px;top:230px">範囲指定</div>
<div class="h" style="left:740px;top:263px">期待値合計:</div>
<div class="h" style="left:857px;top:263px">%以上</div>
<div class="h" style="left:990px;top:263px">範囲指定</div>
<div class="h" style="left:586px;top:292px">金額配分</div>
<div class="h" style="left:605px;top:312px">均等買い</div>
<div class="h" style="left:693px;top:312px">的中率買い</div>
<div class="h" style="left:781px;top:312px">均等払い戻し</div>
<div class="h" style="left:917px;top:310px">単価:</div>
<div class="h" style="left:983px;top:308px">1000</div>
<div class="h" style="left:1013px;top:310px">円</div>
<div class="h" style="left:586px;top:335px">対象指数</div>
<div class="h" style="left:598px;top:356px">補正入力10</div>
<div class="h" style="left:586px;top:379px">単勝率計算式</div>
<div class="h" style="left:598px;top:400px">単勝率計算式(1)</div>
<div class="h" style="left:755px;top:335px">的中率調整オプション</div>
<div class="h" style="left:774px;top:353px">使用しない</div>
<div class="h" style="left:774px;top:376px">平均的中率×</div>
<div class="h" style="left:867px;top:373px">1</div>
<div class="h" style="left:878px;top:376px">を誤差として的中率から減算</div>
<div class="h" style="left:774px;top:399px">的中率×</div>
<div class="h" style="left:843px;top:398px">1</div>
<div class="h" style="left:854px;top:399px">を誤差補正した的中率として扱う</div>
<div class="h" style="left:647px;top:452px">対象レース数:</div>
<div class="h" style="left:744px;top:452px">1308</div>
<div class="h" style="left:774px;top:452px">的中レース数:</div>
<div class="h" style="left:878px;top:452px">929</div>
<div class="h" style="left:909px;top:452px">回収率:</div>
<div class="h" style="left:981px;top:452px">98.3%</div>
<div class="h" style="left:34px;top:479px">日付</div>
<div class="h" style="left:88px;top:479px">場名</div>
<div class="h" style="left:122px;top:479px">レース</div>
<div class="h" style="left:349px;top:479px">買い目</div>
<div class="h" style="left:578px;top:479px">的中</div>
<div class="h" style="left:622px;top:479px">購入金額</div>
<div class="h" style="left:704px;top:479px">配当金</div>
<div class="h" style="left:762px;top:479px">点的中率</div>
<div class="h" style="left:819px;top:479px">レース的中率</div>
<div class="h" style="left:920px;top:479px">収支</div>
<div class="h" style="left:994px;top:479px">累計</div>
<div class="h" style="left:15px;top:502px">2022/01/05</div>
<div class="h" style="left:638px;top:502px">4,155,700</div>
<div class="h" style="left:710px;top:502px">3,094,060</div>
<div class="h" style="left:794px;top:502px">8.9%</div>
<div class="h" style="left:868px;top:502px">60.8%</div>
<div class="h" style="left:914px;top:502px">-1,061,640</div>
<div class="h" style="left:990px;top:502px">-1,061,640</div>
<div class="h" style="left:15px;top:523px">2022/01/08</div>
<div class="h" style="left:638px;top:523px">4,134,000</div>
<div class="h" style="left:710px;top:523px">3,263,450</div>
<div class="h" style="left:794px;top:523px">6.9%</div>
<div class="h" style="left:868px;top:523px">56.5%</div>
<div class="h" style="left:922px;top:523px">-870,550</div>
<div class="h" style="left:990px;top:523px">-1,932,190</div>
<div class="h" style="left:15px;top:544px">2022/01/09</div>
<div class="h" style="left:638px;top:544px">4,551,800</div>
<div class="h" style="left:710px;top:544px">4,295,130</div>
<div class="h" style="left:794px;top:544px">7.1%</div>
<div class="h" style="left:868px;top:544px">58.3%</div>
<div class="h" style="left:922px;top:544px">-256,670</div>
<div class="h" style="left:990px;top:544px">-2,188,860</div>
<div class="h" style="left:15px;top:565px">2022/01/10</div>
<div class="h" style="left:638px;top:565px">4,623,600</div>
<div class="h" style="left:710px;top:565px">1,463,720</div>
<div class="h" style="left:794px;top:565px">5.8%</div>
<div class="h" style="left:868px;top:565px">45.8%</div>
<div class="h" style="left:914px;top:565px">-3,159,880</div>
<div class="h" style="left:990px;top:565px">-5,348,740</div>
<div class="h" style="left:15px;top:586px">2022/01/15</div>
<div class="h" style="left:638px;top:586px">5,976,200</div>
<div class="h" style="left:710px;top:586px">6,557,130</div>
<div class="h" style="left:788px;top:586px">12.4%</div>
<div class="h" style="left:868px;top:586px">77.1%</div>
<div class="h" style="left:928px;top:586px">580,930</div>
<div class="h" style="left:990px;top:586px">-4,767,810</div>
<div class="h" style="left:15px;top:607px">2022/01/16</div>
<div class="h" style="left:638px;top:607px">6,098,500</div>
<div class="h" style="left:710px;top:607px">8,626,260</div>
<div class="h" style="left:794px;top:607px">9.0%</div>
<div class="h" style="left:868px;top:607px">67.6%</div>
<div class="h" style="left:920px;top:607px">2,527,760</div>
<div class="h" style="left:990px;top:607px">-2,240,050</div>
<div class="h" style="left:15px;top:628px">2022/01/22</div>
<div class="h" style="left:638px;top:628px">5,678,200</div>
<div class="h" style="left:710px;top:628px">5,528,150</div>
<div class="h" style="left:794px;top:628px">9.6%</div>
<div class="h" style="left:868px;top:628px">60.6%</div>
<div class="h" style="left:922px;top:628px">-150,050</div>
<div class="h" style="left:990px;top:628px">-2,390,100</div>
<div class="h" style="left:15px;top:649px">2022/01/23</div>
<div class="h" style="left:638px;top:649px">6,465,500</div>
<div class="h" style="left:710px;top:649px">5,839,860</div>
<div class="h" style="left:788px;top:649px">10.8%</div>
<div class="h" style="left:868px;top:649px">72.2%</div>
<div class="h" style="left:922px;top:649px">-625,640</div>
<div class="h" style="left:990px;top:649px">-3,015,740</div>
<div class="h" style="left:15px;top:670px">2022/01/29</div>
<div class="h" style="left:638px;top:670px">6,058,100</div>
<div class="h" style="left:710px;top:670px">6,553,180</div>
<div class="h" style="left:788px;top:670px">10.6%</div>
<div class="h" style="left:868px;top:670px">74.2%</div>
<div class="h" style="left:928px;top:670px">495,080</div>
<div class="h" style="left:990px;top:670px">-2,520,660</div>
<div class="h" style="left:15px;top:691px">2022/01/30</div>
<div class="h" style="left:638px;top:691px">6,396,000</div>
<div class="h" style="left:710px;top:691px">7,147,150</div>
<div class="h" style="left:788px;top:691px">11.4%</div>
<div class="h" style="left:868px;top:691px">83.3%</div>
<div class="h" style="left:928px;top:691px">751,150</div>
<div class="h" style="left:990px;top:691px">-1,769,510</div>
<div class="h" style="left:15px;top:712px">2022/02/05</div>
<div class="h" style="left:638px;top:712px">6,053,700</div>
<div class="h" style="left:710px;top:712px">5,513,640</div>
<div class="h" style="left:794px;top:712px">8.2%</div>
<div class="h" style="left:868px;top:712px">69.7%</div>
<div class="h" style="left:922px;top:712px">-540,060</div>
<div class="h" style="left:990px;top:712px">-2,309,570</div>
<div class="h" style="left:66px;top:732px">最大収支:</div>
<div class="h" style="left:200px;top:732px">最小収支:</div>
<div class="h" style="left:334px;top:732px">最大累計:</div>
<div class="h" style="left:468px;top:732px">最小累計:</div>
<div class="h" style="left:145px;top:732px">3,463,930</div>
<div class="h" style="left:272px;top:732px">-3,159,880</div>
<div class="h" style="left:414px;top:732px">2,325,340</div>
<div class="h" style="left:540px;top:732px">-5,348,740</div>
<div class="h" style="left:625px;top:732px">229,869,200</div>
<div class="h" style="left:697px;top:732px">226,021,420</div>
<div class="h" style="left:790px;top:732px">9.6%</div>
<div class="h" style="left:867px;top:732px">71.0%</div>
<div class="h" style="left:914px;top:732px">-3,847,780</div>
<div class="h" style="left:28px;top:773px">シミュレーション</div>
<div class="h" style="left:160px;top:773px">条件ファイル保存</div>
<div class="h" style="left:270px;top:773px">条件ファイル読込</div>
<div class="h" style="left:393px;top:773px">条件全クリア</div>
<div class="h" style="left:985px;top:773px">閉じる</div>
</body></html>
